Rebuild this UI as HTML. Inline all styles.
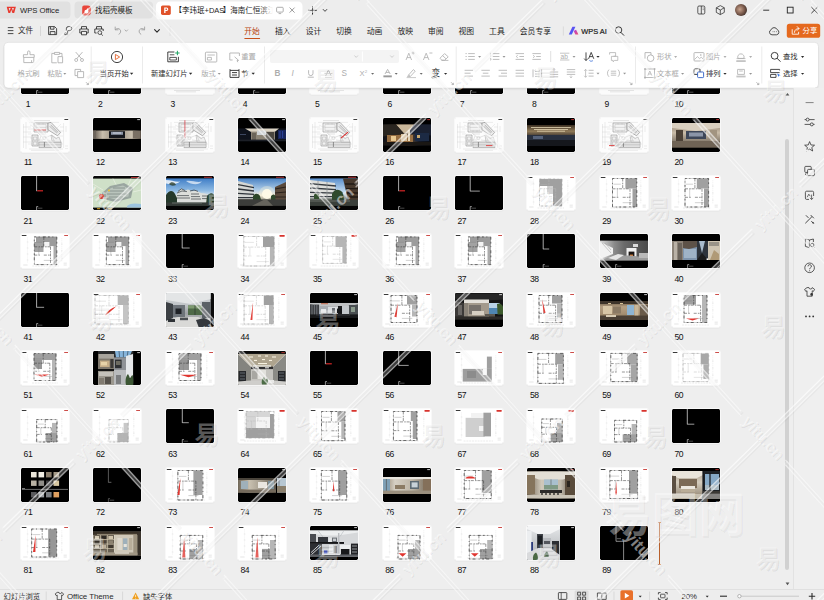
<!DOCTYPE html>
<html><head><meta charset="utf-8"><title>WPS Office</title>
<style>
html,body{margin:0;padding:0;}
body{width:824px;height:600px;overflow:hidden;position:relative;background:#eeeeee;font-family:"Liberation Sans",sans-serif;}
.abs{position:absolute;overflow:hidden;}
.abs svg{display:block;}
svg text{font-family:"Liberation Sans","Noto Sans CJK SC",sans-serif;}
.th{position:absolute;width:48px;height:34px;overflow:hidden;border-radius:1.4px;box-shadow:0 0 0 0.7px rgba(255,255,255,0.95),0 0.6px 1.6px rgba(0,0,0,0.10);}
.th svg{display:block;}
.lb{position:absolute;width:20px;text-align:center;font-size:8.6px;line-height:8px;letter-spacing:-0.5px;color:#111;white-space:nowrap;}
</style></head><body>
<div class="abs" style="left:0px;top:0px;width:824px;height:20px;background:#ededed"><svg width="824" height="20" viewBox="0 0 824 20"><rect x="-4" y="1.5" width="74.5" height="17" rx="4" fill="#e1e1e1"/><path d="M6.7 6.7 h9.2 l-1.7 6.2 h-1.8 l-1.1-3.2 l-1.1 3.2 h-1.8 z" fill="#e8392e"/><path d="M8.7 8.1 h1.9 l-0.95 2.9 z M12 8.1 h1.9 l-0.95 2.9 z" fill="#e3e3e3"/><text x="20.00" y="12.90" font-size="7.75" fill="#1e1e1e" font-weight="normal" text-anchor="start" letter-spacing="-0.08">WPS Office</text><rect x="74.5" y="1.5" width="78.5" height="17" rx="4" fill="#e1e1e1"/><path d="M84 5.6 h3.6 a3.4 3.4 0 0 1 3.4 3.4 v3 a3.4 3.4 0 0 1-3.4 3.4 h-3.6 a1.8 1.8 0 0 1-1.8-1.8 v-6.2 a1.8 1.8 0 0 1 1.8-1.8z" fill="#e8453a"/><path d="M84.4 11.8 a2 2 0 0 1 2-2 l1.9-2.4 l-0.1 3.2 a2 2.1 0 1 1-3.8 1.2z" fill="#fff"/><text x="95" y="13.03" font-size="7.5" fill="#1e1e1e">找稻壳模板</text><rect x="156" y="1.5" width="146.5" height="18" rx="4.5" fill="#ffffff"/><rect x="161" y="5.5" width="9.8" height="9.4" rx="1.6" fill="#e0522a"/><path d="M164.2 7.5 h2.4 a1.7 1.7 0 0 1 0 3.4 h-1.1 v2.2 h-1.3 z M165.5 8.6 v1.3 h1 a0.65 0.65 0 0 0 0-1.3 z" fill="#fff" fill-rule="evenodd"/><defs><linearGradient id="fade" x1="0" x2="1"><stop offset="0.86" stop-color="#fff" stop-opacity="0"/><stop offset="1" stop-color="#fff"/></linearGradient></defs><text y="13.03" font-size="7.5" fill="#1e1e1e"><tspan x="174.5">【李玮珉</tspan><tspan x="204.5">+DAS</tspan><tspan x="222.85">】海南仁恒滨江</tspan></text><rect x="176" y="4" width="97" height="13" fill="url(#fade)"/><rect x="273" y="4" width="20" height="13" fill="#fff"/><rect x="276.6" y="7.3" width="6.6" height="4.8" rx="0.8" fill="none" stroke="#9a9a9a" stroke-width="0.8"/><path d="M278.6 13.6 h2.6" stroke="#9a9a9a" stroke-width="0.8"/><path d="M289.6 7.6 l5 5 M294.6 7.6 l-5 5" stroke="#8a8a8a" stroke-width="0.85"/><path d="M308.3 10.3 h8.4 M312.5 6.1 v8.4" stroke="#1e1e1e" stroke-width="1"/><path d="M323.20 9.45 l1.80 1.90 l1.80 -1.90" fill="none" stroke="#333" stroke-width="0.9" stroke-linecap="round" stroke-linejoin="round"/><rect x="697.8" y="6" width="7" height="8" rx="1.2" fill="none" stroke="#333" stroke-width="0.8"/><path d="M701.3 6 v8" stroke="#333" stroke-width="0.8"/><path d="M702.6 8 h1.2 M702.6 9.6 h1.2" stroke="#333" stroke-width="0.5"/><path d="M720.3 5.6 l4 2.2 v4.6 l-4 2.2 l-4-2.2 v-4.6 z M716.3 7.8 l4 2.2 l4-2.2 M720.3 10 v4.6" fill="none" stroke="#333" stroke-width="0.8" stroke-linejoin="round"/><defs><radialGradient id="av" cx="0.4" cy="0.45" r="0.7"><stop offset="0" stop-color="#c9a48e"/><stop offset="0.55" stop-color="#7a5a4c"/><stop offset="1" stop-color="#2e2420"/></radialGradient></defs><circle cx="741" cy="10" r="6" fill="url(#av)"/><path d="M763.2 10.2 h6" stroke="#222" stroke-width="0.9"/><rect x="787.3" y="7.2" width="5.8" height="5.8" fill="none" stroke="#222" stroke-width="0.9"/><path d="M811.4 7 l6.2 6.2 M817.6 7 l-6.2 6.2" stroke="#222" stroke-width="0.9"/></svg></div>
<div class="abs" style="left:0px;top:20px;width:824px;height:22px;background:#ededed"><svg width="824" height="22" viewBox="0 20 824 22"><path d="M7.8 27.6 h5.6 M7.8 30.6 h5.6 M7.8 33.6 h5.6" stroke="#2b2b2b" stroke-width="0.85"/><text x="18" y="33.06" font-size="7.6" fill="#2b2b2b">文件</text><path d="M40.5 26 v10" stroke="#d0d0d0" stroke-width="0.8"/><path d="M48.6 26.6 h6 l2 2 v6 h-8 z M50.4 26.8 v2.4 h3.6 v-2.4 M50.2 34.6 v-3 h4.8 v3" fill="none" stroke="#2b2b2b" stroke-width="0.85" stroke-linejoin="round"/><path d="M65 34.6 h2.6 v-4 h2.2 a2 2 0 0 0 0-4 h-1.4 a2 2 0 0 0-2 2 v2" fill="none" stroke="#2b2b2b" stroke-width="0.85" stroke-linecap="round"/><circle cx="65.4" cy="33.6" r="1" fill="none" stroke="#2b2b2b" stroke-width="0.7"/><path d="M81.5 29 v-2.4 h5 v2.4 M81.4 33 h-1.6 v-4 h8.4 v4 h-1.6 M81.5 31.4 h5 v3.4 h-5 z" fill="none" stroke="#2b2b2b" stroke-width="0.85" stroke-linejoin="round"/><path d="M96.5 29 v-2.4 h5 v2.4 M96.6 33 h-1.8 v-4 h8.4 v2" fill="none" stroke="#2b2b2b" stroke-width="0.85" stroke-linejoin="round"/><circle cx="99.8" cy="32.6" r="1.9" fill="none" stroke="#2b2b2b" stroke-width="0.8"/><path d="M101.2 34 l1.6 1.6" stroke="#2b2b2b" stroke-width="0.85"/><path d="M115.2 27 v2.8 h2.8 M115.4 29.6 a3 3 0 1 1 3.6 4.6" fill="none" stroke="#9c9c9c" stroke-width="0.85" stroke-linecap="round"/><path d="M125.00 29.90 l1.30 1.40 l1.30 -1.40" fill="none" stroke="#9c9c9c" stroke-width="0.8" stroke-linecap="round" stroke-linejoin="round"/><path d="M144.6 27 v2.8 h-2.8 M144.4 29.6 a3 3 0 1 0-3.6 4.6" fill="none" stroke="#9c9c9c" stroke-width="0.85" stroke-linecap="round"/><path d="M154.60 29.55 l2.40 2.50 l2.40 -2.50" fill="none" stroke="#2b2b2b" stroke-width="1.1" stroke-linecap="round" stroke-linejoin="round"/><path d="M170 26 v10" stroke="#dcdcdc" stroke-width="0.8"/><text x="244.3" y="34.13" font-size="7.8" fill="#b8450e">开始</text><rect x="244.3" y="37.9" width="15.8" height="1.1" rx="0.5" fill="#c8501a"/><text x="275" y="34.13" font-size="7.8" fill="#1e1e1e">插入</text><text x="305.7" y="34.13" font-size="7.8" fill="#1e1e1e">设计</text><text x="336.3" y="34.13" font-size="7.8" fill="#1e1e1e">切换</text><text x="366.8" y="34.13" font-size="7.8" fill="#1e1e1e">动画</text><text x="397.4" y="34.13" font-size="7.8" fill="#1e1e1e">放映</text><text x="428" y="34.13" font-size="7.8" fill="#1e1e1e">审阅</text><text x="458.5" y="34.13" font-size="7.8" fill="#1e1e1e">视图</text><text x="489.1" y="34.13" font-size="7.8" fill="#1e1e1e">工具</text><text x="519.8" y="34.13" font-size="7.8" fill="#1e1e1e">会员专享</text><path d="M563.4 26.5 v9" stroke="#d6d6d6" stroke-width="0.8"/><defs><linearGradient id="ai" x1="0" x2="1" y1="0" y2="1"><stop offset="0" stop-color="#7a3cf0"/><stop offset="1" stop-color="#2d6df6"/></linearGradient></defs><defs><linearGradient id="ai2" x1="0" x2="1" y1="0" y2="1"><stop offset="0" stop-color="#b040e0"/><stop offset="1" stop-color="#f0506a"/></linearGradient></defs><path d="M568.8 34.4 l3.6-7.6 h3 l-3.6 7.6 z" fill="url(#ai)"/><path d="M574.6 30.2 l1.5-0.4 l2.3 4.6 h-3 l-1.5-2.9z" fill="url(#ai2)"/><text x="581.2" y="33.8" font-size="7.4" fill="#1e1e1e" stroke="#1e1e1e" stroke-width="0.22" letter-spacing="0.05">WPS AI</text><circle cx="618.6" cy="30" r="3.2" fill="none" stroke="#2b2b2b" stroke-width="0.9"/><path d="M621 32.5 l2.8 2.8" stroke="#2b2b2b" stroke-width="0.95" stroke-linecap="round"/><path d="M772 34.8 a2.6 2.6 0 0 1-0.9-5 a3.2 3.2 0 0 1 6-0.2 a2.7 2.7 0 0 1-0.5 5.2 z" fill="none" stroke="#333" stroke-width="0.85"/><circle cx="773" cy="31.8" r="0.45" fill="#333"/><circle cx="774.7" cy="31.8" r="0.45" fill="#333"/><circle cx="776.4" cy="31.8" r="0.45" fill="#333"/><rect x="786.8" y="23.8" width="33.4" height="14" rx="2.6" fill="#e5691e"/><path d="M792.2 29.6 v4.6 h6.4 v-2 M794.4 32.4 c0.3-2.6 1.8-3.8 4.4-3.9 M797.2 26.6 l1.8 1.9 l-1.8 1.9" fill="none" stroke="#fff" stroke-width="0.85" stroke-linecap="round" stroke-linejoin="round"/><text x="802.6" y="33.39" font-size="7.4" fill="#ffffff">分享</text></svg></div>
<div class="abs" style="left:0;top:42px;width:824px;height:547px;background:#eeeeee"></div><div class="th" style="left:21.00px;top:59.61px"><svg width="48" height="34" viewBox="0 0 48 34"><rect width="48" height="34" rx="1.2" fill="#000"/><path d="M15.6 30.6 v3.4 M15.6 30.6 h1.6" stroke="#eee" stroke-width="0.6" fill="none"/><path d="M16.8 32.2 h4.6" stroke="#9a9a9a" stroke-width="0.5"/></svg></div><div class="lb" style="left:17.90px;top:100.01px">1</div><div class="th" style="left:93.33px;top:59.61px"><svg width="48" height="34" viewBox="0 0 48 34"><rect width="48" height="34" rx="1.2" fill="#000"/><path d="M15.6 30.6 v3.4 M15.6 30.6 h1.6" stroke="#eee" stroke-width="0.6" fill="none"/><path d="M16.8 32.2 h4.6" stroke="#9a9a9a" stroke-width="0.5"/></svg></div><div class="lb" style="left:90.23px;top:100.01px">2</div><div class="th" style="left:165.66px;top:59.61px"><svg width="48" height="34" viewBox="0 0 48 34"><rect width="48" height="34" rx="1.2" fill="#fbfbfb"/><path d="M8 30.5 h26 M10 31.8 h20" stroke="#cfcfcf" stroke-width="0.5"/></svg></div><div class="lb" style="left:162.56px;top:100.01px">3</div><div class="th" style="left:237.99px;top:59.61px"><svg width="48" height="34" viewBox="0 0 48 34"><rect width="48" height="34" rx="1.2" fill="#000"/><path d="M15.6 30.6 v3.4 M15.6 30.6 h1.6" stroke="#eee" stroke-width="0.6" fill="none"/><path d="M16.8 32.2 h4.6" stroke="#9a9a9a" stroke-width="0.5"/></svg></div><div class="lb" style="left:234.89px;top:100.01px">4</div><div class="th" style="left:310.32px;top:59.61px"><svg width="48" height="34" viewBox="0 0 48 34"><rect width="48" height="34" rx="1.2" fill="#fbfbfb"/><path d="M8 30.5 h26 M10 31.8 h20" stroke="#cfcfcf" stroke-width="0.5"/></svg></div><div class="lb" style="left:307.22px;top:100.01px">5</div><div class="th" style="left:382.65px;top:59.61px"><svg width="48" height="34" viewBox="0 0 48 34"><rect width="48" height="34" rx="1.2" fill="#000"/><path d="M15.6 30.6 v3.4 M15.6 30.6 h1.6" stroke="#eee" stroke-width="0.6" fill="none"/><path d="M16.8 32.2 h4.6" stroke="#9a9a9a" stroke-width="0.5"/></svg></div><div class="lb" style="left:379.55px;top:100.01px">6</div><div class="th" style="left:454.98px;top:59.61px"><svg width="48" height="34" viewBox="0 0 48 34"><rect width="48" height="34" rx="1.2" fill="#000"/><path d="M15.6 30.6 v3.4 M15.6 30.6 h1.6" stroke="#eee" stroke-width="0.6" fill="none"/><path d="M16.8 32.2 h4.6" stroke="#9a9a9a" stroke-width="0.5"/></svg></div><div class="lb" style="left:451.88px;top:100.01px">7</div><div class="th" style="left:527.31px;top:59.61px"><svg width="48" height="34" viewBox="0 0 48 34"><rect width="48" height="34" rx="1.2" fill="#000"/><path d="M15.6 30.6 v3.4 M15.6 30.6 h1.6" stroke="#eee" stroke-width="0.6" fill="none"/><path d="M16.8 32.2 h4.6" stroke="#9a9a9a" stroke-width="0.5"/></svg></div><div class="lb" style="left:524.21px;top:100.01px">8</div><div class="th" style="left:599.64px;top:59.61px"><svg width="48" height="34" viewBox="0 0 48 34"><rect width="48" height="34" rx="1.2" fill="#fbfbfb"/><path d="M8 30.5 h26 M10 31.8 h20" stroke="#cfcfcf" stroke-width="0.5"/></svg></div><div class="lb" style="left:596.54px;top:100.01px">9</div><div class="th" style="left:671.97px;top:59.61px"><svg width="48" height="34" viewBox="0 0 48 34"><rect width="48" height="34" rx="1.2" fill="#000"/><path d="M15.6 30.6 v3.4 M15.6 30.6 h1.6" stroke="#eee" stroke-width="0.6" fill="none"/><path d="M16.8 32.2 h4.6" stroke="#9a9a9a" stroke-width="0.5"/></svg></div><div class="lb" style="left:668.87px;top:100.01px">10</div><div class="th" style="left:21.00px;top:117.88px"><svg width="48" height="34" viewBox="0 0 48 34"><rect width="48" height="34" rx="1.2" fill="#fdfdfd"/><path d="M13 2.6 h16" stroke="#cfcfcf" stroke-width="0.6"/><rect x="43.4" y="1.1" width="3.8" height="0.9" fill="#2a2a2a"/><path d="M2.5 6 v24 M5 4 v27 M2 9 h8 M2 14 h8 M2 19 h8 M2 24 h8 M8 31 h34 M10 32.4 h28 M42.6 5 v25 M45 8 v6 M44 28 h3 M44 30.6 h3 M39 9 h4 M39 13 h4 M8 4.4 h30" stroke="#d2d2d2" stroke-width="0.4" fill="none"/><path d="M9 7 l4 2 M40 6 l-4 4 M9 20 h3 M36 22 l5 3 M7 11 h5 M7 16 h4 M7 26 h4 M38 18 h4 M38 26 h4" stroke="#d6d6d6" stroke-width="0.4"/><path d="M13 5 h14 v9 h-14 z" fill="#f4f4f4" stroke="#8e8e8e" stroke-width="0.55"/><path d="M15 6.4 h10 v6 h-10z M13 9 h2 M25 9 h2 M18 5 v1.4 M22 5 v1.4 M18 12.4 v1.6 M22 12.4 v1.6 M15 9.4 h10" fill="none" stroke="#b0b0b0" stroke-width="0.4"/><path d="M27 5 l3-0.6 l9.6 10 l-3 3.4 l-9.6-6 z" fill="#eeeeee" stroke="#828282" stroke-width="0.6"/><path d="M29.4 6.6 l7.6 8 M28.4 8.4 l7.4 6.8 M31 7 l-1.6 2 M33 9 l-1.6 2 M35 11 l-1.6 2 M37 13 l-1.6 2 M32 8 l-1.6 2 M34 10 l-1.6 2 M36 12 l-1.6 2" stroke="#9c9c9c" stroke-width="0.4"/><path d="M11 17 h6 v11 h-6 z" fill="#f2f2f2" stroke="#8e8e8e" stroke-width="0.55"/><path d="M12.4 19 h3.4 v3 h-3.4z M12.4 24 h3.4 v3 h-3.4z M11 23 h6" fill="none" stroke="#a8a8a8" stroke-width="0.45"/><path d="M18 24 h22 v5.6 h-22 z" fill="#f0f0f0" stroke="#888" stroke-width="0.55"/><path d="M20 24 v5.6 M22 24 v5.6 M24 24 v5.6 M26 24 v5.6 M28 24 v5.6 M30 24 v5.6 M32 24 v5.6 M34 24 v5.6 M36 24 v5.6 M38 24 v5.6 M18 26.8 h22" fill="none" stroke="#a4a4a4" stroke-width="0.4"/><path d="M30 17 l5 3.4 l3-1.4 l2 5 h-9z" fill="#f0f0f0" stroke="#9a9a9a" stroke-width="0.45"/><circle cx="23.4" cy="20" r="1.6" fill="#fff" stroke="#b4b4b4" stroke-width="0.4"/><path d="M17 15 l6 5 l8-3 l5 4 M17 22 h5 M26 22 l8 1 M31 17 l2 6 M18 16 h7 M20 18 l-2 5" fill="none" stroke="#bcbcbc" stroke-width="0.4"/><path d="M23.4 24 v5" stroke="#6a6a6a" stroke-width="0.7"/><path d="M13.4 12 h11.6" stroke="#e04a4a" stroke-width="0.8"/></svg></div><div class="lb" style="left:17.90px;top:158.28px">11</div><div class="th" style="left:93.33px;top:117.88px"><svg width="48" height="34" viewBox="0 0 48 34"><rect width="48" height="34" rx="1.2" fill="#000"/><defs><linearGradient id="g1" x1="0" y1="0" x2="1" y2="0"><stop offset="0" stop-color="#5b5147"/><stop offset="0.2" stop-color="#c9bfae"/><stop offset="0.5" stop-color="#8d8475"/><stop offset="0.8" stop-color="#c9bfae"/><stop offset="1" stop-color="#5b5147"/></linearGradient></defs><rect x="0" y="12.5" width="48" height="8.4" fill="url(#g1)"/><rect x="16" y="13.2" width="16" height="7" fill="#16181d"/><rect x="18" y="13.8" width="12" height="3" fill="#8d96a6"/><rect x="20" y="14.4" width="8" height="1.2" fill="#c4cad4"/><rect x="0" y="12.5" width="3" height="8.4" fill="#6d655c"/><rect x="40" y="13" width="7" height="7.4" fill="#7a7064"/><rect x="44.2" y="1.2" width="2.8" height="0.9" fill="#ddd"/></svg></div><div class="lb" style="left:90.23px;top:158.28px">12</div><div class="th" style="left:165.66px;top:117.88px"><svg width="48" height="34" viewBox="0 0 48 34"><rect width="48" height="34" rx="1.2" fill="#fdfdfd"/><path d="M13 2.6 h16" stroke="#cfcfcf" stroke-width="0.6"/><rect x="43.4" y="1.1" width="3.8" height="0.9" fill="#2a2a2a"/><path d="M2.5 6 v24 M5 4 v27 M2 9 h8 M2 14 h8 M2 19 h8 M2 24 h8 M8 31 h34 M10 32.4 h28 M42.6 5 v25 M45 8 v6 M44 28 h3 M44 30.6 h3 M39 9 h4 M39 13 h4 M8 4.4 h30" stroke="#d2d2d2" stroke-width="0.4" fill="none"/><path d="M9 7 l4 2 M40 6 l-4 4 M9 20 h3 M36 22 l5 3 M7 11 h5 M7 16 h4 M7 26 h4 M38 18 h4 M38 26 h4" stroke="#d6d6d6" stroke-width="0.4"/><path d="M13 5 h14 v9 h-14 z" fill="#f4f4f4" stroke="#8e8e8e" stroke-width="0.55"/><path d="M15 6.4 h10 v6 h-10z M13 9 h2 M25 9 h2 M18 5 v1.4 M22 5 v1.4 M18 12.4 v1.6 M22 12.4 v1.6 M15 9.4 h10" fill="none" stroke="#b0b0b0" stroke-width="0.4"/><path d="M27 5 l3-0.6 l9.6 10 l-3 3.4 l-9.6-6 z" fill="#eeeeee" stroke="#828282" stroke-width="0.6"/><path d="M29.4 6.6 l7.6 8 M28.4 8.4 l7.4 6.8 M31 7 l-1.6 2 M33 9 l-1.6 2 M35 11 l-1.6 2 M37 13 l-1.6 2 M32 8 l-1.6 2 M34 10 l-1.6 2 M36 12 l-1.6 2" stroke="#9c9c9c" stroke-width="0.4"/><path d="M11 17 h6 v11 h-6 z" fill="#f2f2f2" stroke="#8e8e8e" stroke-width="0.55"/><path d="M12.4 19 h3.4 v3 h-3.4z M12.4 24 h3.4 v3 h-3.4z M11 23 h6" fill="none" stroke="#a8a8a8" stroke-width="0.45"/><path d="M18 24 h22 v5.6 h-22 z" fill="#f0f0f0" stroke="#888" stroke-width="0.55"/><path d="M20 24 v5.6 M22 24 v5.6 M24 24 v5.6 M26 24 v5.6 M28 24 v5.6 M30 24 v5.6 M32 24 v5.6 M34 24 v5.6 M36 24 v5.6 M38 24 v5.6 M18 26.8 h22" fill="none" stroke="#a4a4a4" stroke-width="0.4"/><path d="M30 17 l5 3.4 l3-1.4 l2 5 h-9z" fill="#f0f0f0" stroke="#9a9a9a" stroke-width="0.45"/><circle cx="23.4" cy="20" r="1.6" fill="#fff" stroke="#b4b4b4" stroke-width="0.4"/><path d="M17 15 l6 5 l8-3 l5 4 M17 22 h5 M26 22 l8 1 M31 17 l2 6 M18 16 h7 M20 18 l-2 5" fill="none" stroke="#bcbcbc" stroke-width="0.4"/><path d="M23.4 24 v5" stroke="#6a6a6a" stroke-width="0.7"/><path d="M18.9 2.2 v17.6" stroke="#d8404a" stroke-width="0.8"/></svg></div><div class="lb" style="left:162.56px;top:158.28px">13</div><div class="th" style="left:237.99px;top:117.88px"><svg width="48" height="34" viewBox="0 0 48 34"><rect width="48" height="34" rx="1.2" fill="#000"/><rect x="0" y="10.4" width="48" height="12.8" fill="#0e121c"/><path d="M7 10.4 h34 l-5 4 h-22z" fill="#dcd4c4"/><rect x="13" y="13.6" width="24" height="8.6" fill="#8e8678"/><rect x="19" y="12.6" width="9" height="4.4" fill="#cfd3d6"/><rect x="28" y="14" width="8" height="8" fill="#4a463f"/><rect x="14" y="15" width="4" height="7" fill="#6c655a"/><rect x="0" y="21.6" width="48" height="1.6" fill="#1c1f26"/><rect x="40" y="12" width="8" height="9" fill="#17245a"/><path d="M42 13 v7 M44.6 13 v7" stroke="#3a58c8" stroke-width="0.6"/><rect x="2" y="16" width="6" height="1" fill="#3c4660"/><rect x="44.2" y="1.2" width="2.8" height="0.9" fill="#ddd"/></svg></div><div class="lb" style="left:234.89px;top:158.28px">14</div><div class="th" style="left:310.32px;top:117.88px"><svg width="48" height="34" viewBox="0 0 48 34"><rect width="48" height="34" rx="1.2" fill="#fdfdfd"/><path d="M13 2.6 h16" stroke="#cfcfcf" stroke-width="0.6"/><rect x="43.4" y="1.1" width="3.8" height="0.9" fill="#2a2a2a"/><path d="M2.5 6 v24 M5 4 v27 M2 9 h8 M2 14 h8 M2 19 h8 M2 24 h8 M8 31 h34 M10 32.4 h28 M42.6 5 v25 M45 8 v6 M44 28 h3 M44 30.6 h3 M39 9 h4 M39 13 h4 M8 4.4 h30" stroke="#d2d2d2" stroke-width="0.4" fill="none"/><path d="M9 7 l4 2 M40 6 l-4 4 M9 20 h3 M36 22 l5 3 M7 11 h5 M7 16 h4 M7 26 h4 M38 18 h4 M38 26 h4" stroke="#d6d6d6" stroke-width="0.4"/><path d="M13 5 h14 v9 h-14 z" fill="#f4f4f4" stroke="#8e8e8e" stroke-width="0.55"/><path d="M15 6.4 h10 v6 h-10z M13 9 h2 M25 9 h2 M18 5 v1.4 M22 5 v1.4 M18 12.4 v1.6 M22 12.4 v1.6 M15 9.4 h10" fill="none" stroke="#b0b0b0" stroke-width="0.4"/><path d="M27 5 l3-0.6 l9.6 10 l-3 3.4 l-9.6-6 z" fill="#eeeeee" stroke="#828282" stroke-width="0.6"/><path d="M29.4 6.6 l7.6 8 M28.4 8.4 l7.4 6.8 M31 7 l-1.6 2 M33 9 l-1.6 2 M35 11 l-1.6 2 M37 13 l-1.6 2 M32 8 l-1.6 2 M34 10 l-1.6 2 M36 12 l-1.6 2" stroke="#9c9c9c" stroke-width="0.4"/><path d="M11 17 h6 v11 h-6 z" fill="#f2f2f2" stroke="#8e8e8e" stroke-width="0.55"/><path d="M12.4 19 h3.4 v3 h-3.4z M12.4 24 h3.4 v3 h-3.4z M11 23 h6" fill="none" stroke="#a8a8a8" stroke-width="0.45"/><path d="M18 24 h22 v5.6 h-22 z" fill="#f0f0f0" stroke="#888" stroke-width="0.55"/><path d="M20 24 v5.6 M22 24 v5.6 M24 24 v5.6 M26 24 v5.6 M28 24 v5.6 M30 24 v5.6 M32 24 v5.6 M34 24 v5.6 M36 24 v5.6 M38 24 v5.6 M18 26.8 h22" fill="none" stroke="#a4a4a4" stroke-width="0.4"/><path d="M30 17 l5 3.4 l3-1.4 l2 5 h-9z" fill="#f0f0f0" stroke="#9a9a9a" stroke-width="0.45"/><circle cx="23.4" cy="20" r="1.6" fill="#fff" stroke="#b4b4b4" stroke-width="0.4"/><path d="M17 15 l6 5 l8-3 l5 4 M17 22 h5 M26 22 l8 1 M31 17 l2 6 M18 16 h7 M20 18 l-2 5" fill="none" stroke="#bcbcbc" stroke-width="0.4"/><path d="M23.4 24 v5" stroke="#6a6a6a" stroke-width="0.7"/><path d="M31 20.2 L38 14.2" stroke="#d93030" stroke-width="1.1"/></svg></div><div class="lb" style="left:307.22px;top:158.28px">15</div><div class="th" style="left:382.65px;top:117.88px"><svg width="48" height="34" viewBox="0 0 48 34"><rect width="48" height="34" rx="1.2" fill="#000"/><defs><linearGradient id="g2" x1="0" y1="0" x2="1" y2="0"><stop offset="0" stop-color="#0d1018"/><stop offset="0.3" stop-color="#3a2c20"/><stop offset="0.55" stop-color="#5a4634"/><stop offset="0.75" stop-color="#141a28"/><stop offset="1" stop-color="#0a0d14"/></linearGradient></defs><rect x="0" y="6.4" width="48" height="21" fill="url(#g2)"/><path d="M13 6.4 h18 l-6 9 h-4z" fill="#c9b79a"/><path d="M0 6.4 h13 l8 9 l-21 3z" fill="#2a2621"/><path d="M31 6.4 h17 v11 l-23-2z" fill="#1a2030"/><rect x="4" y="17" width="26" height="7" fill="#a87a48" opacity="0.85"/><rect x="8" y="18" width="5" height="5" fill="#e8c890"/><rect x="18" y="16" width="6" height="7" fill="#d9c4a0"/><rect x="25" y="12" width="2" height="11" fill="#e6d8bc"/><rect x="32" y="15" width="14" height="8" fill="#1c2a44"/><rect x="34" y="17" width="3" height="3" fill="#c8a870"/><rect x="0" y="24" width="48" height="3.4" fill="#1a1714"/><rect x="44.2" y="1.2" width="2.8" height="0.9" fill="#c33"/></svg></div><div class="lb" style="left:379.55px;top:158.28px">16</div><div class="th" style="left:454.98px;top:117.88px"><svg width="48" height="34" viewBox="0 0 48 34"><rect width="48" height="34" rx="1.2" fill="#fdfdfd"/><path d="M13 2.6 h16" stroke="#cfcfcf" stroke-width="0.6"/><rect x="43.4" y="1.1" width="3.8" height="0.9" fill="#2a2a2a"/><path d="M2.5 6 v24 M5 4 v27 M2 9 h8 M2 14 h8 M2 19 h8 M2 24 h8 M8 31 h34 M10 32.4 h28 M42.6 5 v25 M45 8 v6 M44 28 h3 M44 30.6 h3 M39 9 h4 M39 13 h4 M8 4.4 h30" stroke="#d2d2d2" stroke-width="0.4" fill="none"/><path d="M9 7 l4 2 M40 6 l-4 4 M9 20 h3 M36 22 l5 3 M7 11 h5 M7 16 h4 M7 26 h4 M38 18 h4 M38 26 h4" stroke="#d6d6d6" stroke-width="0.4"/><path d="M13 5 h14 v9 h-14 z" fill="#f4f4f4" stroke="#8e8e8e" stroke-width="0.55"/><path d="M15 6.4 h10 v6 h-10z M13 9 h2 M25 9 h2 M18 5 v1.4 M22 5 v1.4 M18 12.4 v1.6 M22 12.4 v1.6 M15 9.4 h10" fill="none" stroke="#b0b0b0" stroke-width="0.4"/><path d="M27 5 l3-0.6 l9.6 10 l-3 3.4 l-9.6-6 z" fill="#eeeeee" stroke="#828282" stroke-width="0.6"/><path d="M29.4 6.6 l7.6 8 M28.4 8.4 l7.4 6.8 M31 7 l-1.6 2 M33 9 l-1.6 2 M35 11 l-1.6 2 M37 13 l-1.6 2 M32 8 l-1.6 2 M34 10 l-1.6 2 M36 12 l-1.6 2" stroke="#9c9c9c" stroke-width="0.4"/><path d="M11 17 h6 v11 h-6 z" fill="#f2f2f2" stroke="#8e8e8e" stroke-width="0.55"/><path d="M12.4 19 h3.4 v3 h-3.4z M12.4 24 h3.4 v3 h-3.4z M11 23 h6" fill="none" stroke="#a8a8a8" stroke-width="0.45"/><path d="M18 24 h22 v5.6 h-22 z" fill="#f0f0f0" stroke="#888" stroke-width="0.55"/><path d="M20 24 v5.6 M22 24 v5.6 M24 24 v5.6 M26 24 v5.6 M28 24 v5.6 M30 24 v5.6 M32 24 v5.6 M34 24 v5.6 M36 24 v5.6 M38 24 v5.6 M18 26.8 h22" fill="none" stroke="#a4a4a4" stroke-width="0.4"/><path d="M30 17 l5 3.4 l3-1.4 l2 5 h-9z" fill="#f0f0f0" stroke="#9a9a9a" stroke-width="0.45"/><circle cx="23.4" cy="20" r="1.6" fill="#fff" stroke="#b4b4b4" stroke-width="0.4"/><path d="M17 15 l6 5 l8-3 l5 4 M17 22 h5 M26 22 l8 1 M31 17 l2 6 M18 16 h7 M20 18 l-2 5" fill="none" stroke="#bcbcbc" stroke-width="0.4"/><path d="M23.4 24 v5" stroke="#6a6a6a" stroke-width="0.7"/><path d="M31 27.6 h6.4" stroke="#e03a3a" stroke-width="0.9"/></svg></div><div class="lb" style="left:451.88px;top:158.28px">17</div><div class="th" style="left:527.31px;top:117.88px"><svg width="48" height="34" viewBox="0 0 48 34"><rect width="48" height="34" rx="1.2" fill="#000"/><defs><linearGradient id="g3" x1="0" y1="0" x2="0" y2="1"><stop offset="0" stop-color="#3b2f22"/><stop offset="0.3" stop-color="#8f7a58"/><stop offset="0.5" stop-color="#4a4036"/><stop offset="1" stop-color="#15181f"/></linearGradient></defs><rect x="0" y="7" width="48" height="21" fill="url(#g3)"/><path d="M4 9.5 h40 M7 11.5 h34 M10 13.2 h28" stroke="#f3e6c4" stroke-width="0.7"/><rect x="0" y="17" width="48" height="5" fill="#28303f"/><rect x="6" y="18" width="10" height="3" fill="#55627a"/><rect x="0" y="22" width="48" height="6" fill="#15171c"/><rect x="44.2" y="1.2" width="2.8" height="0.9" fill="#c33"/></svg></div><div class="lb" style="left:524.21px;top:158.28px">18</div><div class="th" style="left:599.64px;top:117.88px"><svg width="48" height="34" viewBox="0 0 48 34"><rect width="48" height="34" rx="1.2" fill="#fdfdfd"/><path d="M13 2.6 h16" stroke="#cfcfcf" stroke-width="0.6"/><rect x="43.4" y="1.1" width="3.8" height="0.9" fill="#2a2a2a"/><path d="M2.5 6 v24 M5 4 v27 M2 9 h8 M2 14 h8 M2 19 h8 M2 24 h8 M8 31 h34 M10 32.4 h28 M42.6 5 v25 M45 8 v6 M44 28 h3 M44 30.6 h3 M39 9 h4 M39 13 h4 M8 4.4 h30" stroke="#d2d2d2" stroke-width="0.4" fill="none"/><path d="M9 7 l4 2 M40 6 l-4 4 M9 20 h3 M36 22 l5 3 M7 11 h5 M7 16 h4 M7 26 h4 M38 18 h4 M38 26 h4" stroke="#d6d6d6" stroke-width="0.4"/><path d="M13 5 h14 v9 h-14 z" fill="#f4f4f4" stroke="#8e8e8e" stroke-width="0.55"/><path d="M15 6.4 h10 v6 h-10z M13 9 h2 M25 9 h2 M18 5 v1.4 M22 5 v1.4 M18 12.4 v1.6 M22 12.4 v1.6 M15 9.4 h10" fill="none" stroke="#b0b0b0" stroke-width="0.4"/><path d="M27 5 l3-0.6 l9.6 10 l-3 3.4 l-9.6-6 z" fill="#eeeeee" stroke="#828282" stroke-width="0.6"/><path d="M29.4 6.6 l7.6 8 M28.4 8.4 l7.4 6.8 M31 7 l-1.6 2 M33 9 l-1.6 2 M35 11 l-1.6 2 M37 13 l-1.6 2 M32 8 l-1.6 2 M34 10 l-1.6 2 M36 12 l-1.6 2" stroke="#9c9c9c" stroke-width="0.4"/><path d="M11 17 h6 v11 h-6 z" fill="#f2f2f2" stroke="#8e8e8e" stroke-width="0.55"/><path d="M12.4 19 h3.4 v3 h-3.4z M12.4 24 h3.4 v3 h-3.4z M11 23 h6" fill="none" stroke="#a8a8a8" stroke-width="0.45"/><path d="M18 24 h22 v5.6 h-22 z" fill="#f0f0f0" stroke="#888" stroke-width="0.55"/><path d="M20 24 v5.6 M22 24 v5.6 M24 24 v5.6 M26 24 v5.6 M28 24 v5.6 M30 24 v5.6 M32 24 v5.6 M34 24 v5.6 M36 24 v5.6 M38 24 v5.6 M18 26.8 h22" fill="none" stroke="#a4a4a4" stroke-width="0.4"/><path d="M30 17 l5 3.4 l3-1.4 l2 5 h-9z" fill="#f0f0f0" stroke="#9a9a9a" stroke-width="0.45"/><circle cx="23.4" cy="20" r="1.6" fill="#fff" stroke="#b4b4b4" stroke-width="0.4"/><path d="M17 15 l6 5 l8-3 l5 4 M17 22 h5 M26 22 l8 1 M31 17 l2 6 M18 16 h7 M20 18 l-2 5" fill="none" stroke="#bcbcbc" stroke-width="0.4"/><path d="M23.4 24 v5" stroke="#6a6a6a" stroke-width="0.7"/><path d="M9 27.6 h6" stroke="#e03a3a" stroke-width="0.9"/></svg></div><div class="lb" style="left:596.54px;top:158.28px">19</div><div class="th" style="left:671.97px;top:117.88px"><svg width="48" height="34" viewBox="0 0 48 34"><rect width="48" height="34" rx="1.2" fill="#000"/><defs><linearGradient id="g4" x1="0" y1="0" x2="0" y2="1"><stop offset="0" stop-color="#8b7c6a"/><stop offset="0.4" stop-color="#c9bca8"/><stop offset="1" stop-color="#5a5046"/></linearGradient></defs><rect x="0" y="5" width="48" height="24.5" fill="url(#g4)"/><path d="M0 5 h48 v5 l-24 3 l-24-3 z" fill="#d9cfbf"/><rect x="14" y="13" width="20" height="8" fill="#3d4658"/><rect x="17" y="14.5" width="14" height="4" fill="#8b95a8"/><rect x="0" y="23" width="48" height="6.5" fill="#6f6355"/><rect x="4" y="12" width="7" height="11" fill="#4b4035"/><rect x="38" y="12" width="7" height="11" fill="#a29480"/><rect x="44.2" y="1.2" width="2.8" height="0.9" fill="#c33"/></svg></div><div class="lb" style="left:668.87px;top:158.28px">20</div><div class="th" style="left:21.00px;top:176.15px"><svg width="48" height="34" viewBox="0 0 48 34"><rect width="48" height="34" rx="1.2" fill="#000000"/><path d="M15.6 0 V15.2" stroke="#f0f0f0" stroke-width="0.7"/><rect x="16.2" y="14.2" width="5.8" height="1.2" fill="#d42626"/><path d="M15.6 34 V30.6 h1.6" stroke="#f0f0f0" stroke-width="0.6" fill="none"/><path d="M16.8 32.2 h4.6" stroke="#8e8e8e" stroke-width="0.5"/></svg></div><div class="lb" style="left:17.90px;top:216.55px">21</div><div class="th" style="left:93.33px;top:176.15px"><svg width="48" height="34" viewBox="0 0 48 34"><rect width="48" height="34" rx="1.2" fill="#0a0a0a"/><rect x="0" y="2.6" width="48" height="29" fill="#cfe0c8"/><path d="M9 17 l8-7 l14-3 l9 5 l-2 10 l-16 4 l-11-3 z" fill="#9aa6a0"/><path d="M12 17 l6-5 l12-2.5 l7 4 l-1.6 7 l-13 3 l-9-2.4 z" fill="#b9c4bc"/><path d="M15 15 h16 M14 18 h20 M16 21 h14 M20 12 h12" stroke="#7f8a86" stroke-width="0.8"/><path d="M34 30 c3-3 8-3 14-2 v3.6 h-14 z" fill="#9cc4de"/><path d="M0 8 l10 6 M20 2.6 l3 6 M38 2.6 l-3 7 M48 14 l-8 2" stroke="#e9efe4" stroke-width="0.7"/><circle cx="8.4" cy="20.6" r="2.5" fill="#d83a34"/><circle cx="16" cy="14.6" r="1" fill="#f2c630"/><rect x="38" y="1" width="8" height="0.9" fill="#b33"/><rect x="4" y="32.2" width="3" height="1" fill="#d8a020"/><rect x="15" y="32.2" width="4" height="1" fill="#e0c020"/></svg></div><div class="lb" style="left:90.23px;top:216.55px">22</div><div class="th" style="left:165.66px;top:176.15px"><svg width="48" height="34" viewBox="0 0 48 34"><rect width="48" height="34" rx="1.2" fill="#050505"/><defs><linearGradient id="g5" x1="0" y1="0" x2="0" y2="1"><stop offset="0" stop-color="#3f7dc6"/><stop offset="0.45" stop-color="#8fbbe4"/><stop offset="0.62" stop-color="#d4e2ec"/><stop offset="0.8" stop-color="#5f6e66"/><stop offset="1" stop-color="#2c3630"/></linearGradient></defs><rect x="0" y="2.4" width="48" height="27.4" fill="url(#g5)"/><path d="M0 4 c5 0 9 2 14 1.6 c-3 3-9 3.4-14 2z" fill="#fff" opacity="0.8"/><path d="M20 5 c6-1 10 2 16 0.6 c-3 3.4-10 3.6-16-0.6z" fill="#fff" opacity="0.65"/><path d="M9 21 l3-5 l3-3.4 l4 2 l3-1 l4 1.6 l4-0.6 l5 2.4 l4 0.6 l4 1.4 v9 h-34 z" fill="#dcdedb"/><path d="M11 17 l5-2 l5 0.6 M11 19.6 h12 M11 22 h13 M25 18 h8 M25 20.6 h9 M25 23 h10 M36 20 h7 M36 22.6 h8" stroke="#4e5458" stroke-width="0.8" fill="none"/><path d="M12 15.4 l3.4-2.6 l3.8 1.8 M24 15 l4-1 l4 1.4" stroke="#2e3236" stroke-width="0.7" fill="none"/><path d="M0 19 c3-5 7-5 9-1 l2 4 v6 h-11 z" fill="#24382a"/><path d="M41 20 c3-4 6-3 7-1 v9 h-8z" fill="#2c4430"/><path d="M3 8 c2-3 6-2 7 1 c-3 1-5 1-7-1z" fill="#2d3f2c" opacity="0.8"/><rect x="0" y="26.4" width="48" height="3.4" fill="#343a36"/><path d="M6 27 h30" stroke="#7c8480" stroke-width="0.7"/><rect x="38" y="0.8" width="8" height="0.9" fill="#b33"/></svg></div><div class="lb" style="left:162.56px;top:216.55px">23</div><div class="th" style="left:237.99px;top:176.15px"><svg width="48" height="34" viewBox="0 0 48 34"><rect width="48" height="34" rx="1.2" fill="#050505"/><defs><linearGradient id="g6" x1="0" y1="0" x2="0" y2="1"><stop offset="0" stop-color="#4b83c4"/><stop offset="0.4" stop-color="#a9c9e6"/><stop offset="0.62" stop-color="#efe9da"/><stop offset="0.8" stop-color="#55564f"/><stop offset="1" stop-color="#2b2b28"/></linearGradient></defs><rect x="0" y="2.4" width="48" height="27.4" fill="url(#g6)"/><path d="M0 5 l15 4 v14 h-15 z" fill="#d4d6d3"/><path d="M0 8.6 l16 3 M0 13 l16 2 M0 17.4 l16 1 M0 21.6 h16" stroke="#30353b" stroke-width="1.3"/><path d="M48 6 l-11 5 v13 h11 z" fill="#5a4a3c"/><path d="M37 13 l11-2 M37 17 l11-1 M37 21 h11" stroke="#2a221c" stroke-width="1.2"/><circle cx="29" cy="18" r="5" fill="#fffdf0" opacity="0.95"/><circle cx="29" cy="18" r="8" fill="#fff6d8" opacity="0.35"/><path d="M15 20 c2-3 5-3 7 0 l1 4 h-8z" fill="#2c4628"/><path d="M33 20 c1.6-2 3.4-2 4.4 0 v4 h-4.4z" fill="#2f4a2c"/><path d="M0 23.6 h48 v6.2 h-48z" fill="#3c3d3a"/><path d="M14 29.8 l12-6 l3 0 l6 6z" fill="#66645c"/><rect x="38" y="0.8" width="8" height="0.9" fill="#b33"/></svg></div><div class="lb" style="left:234.89px;top:216.55px">24</div><div class="th" style="left:310.32px;top:176.15px"><svg width="48" height="34" viewBox="0 0 48 34"><rect width="48" height="34" rx="1.2" fill="#050505"/><defs><linearGradient id="g7" x1="0" y1="0" x2="0" y2="1"><stop offset="0" stop-color="#5a8fcc"/><stop offset="0.5" stop-color="#c4dcf0"/><stop offset="0.7" stop-color="#9aa29c"/><stop offset="1" stop-color="#2f3530"/></linearGradient></defs><rect x="0" y="2.4" width="48" height="27.4" fill="url(#g7)"/><path d="M0 4 l25 3 v15 h-25 z" fill="#dddedb"/><path d="M0 7.6 l26 2.4 M0 12 l26 1.6 M0 16.4 l26 0.8 M0 20.6 h26" stroke="#343a40" stroke-width="1.3"/><path d="M8 4.6 v17 M17 5.8 v16" stroke="#8a8f92" stroke-width="0.7"/><path d="M33 2.4 h15 v22 h-10 z" fill="#46382c"/><path d="M35 8 h13 M36 12.6 h12 M37 17 h11 M38 21 h10" stroke="#211a14" stroke-width="1.3"/><path d="M22 18 c2-5 7-6 11-1 l1 7 h-12z" fill="#2f4a2c"/><path d="M4 19 c1-2 4-2 5 0 v4 h-5z" fill="#35522f"/><rect x="0" y="23.6" width="48" height="6.2" fill="#3a3f3a"/><path d="M0 25 h40" stroke="#8a8f86" stroke-width="0.6"/><rect x="38" y="0.8" width="8" height="0.9" fill="#b33"/></svg></div><div class="lb" style="left:307.22px;top:216.55px">25</div><div class="th" style="left:382.65px;top:176.15px"><svg width="48" height="34" viewBox="0 0 48 34"><rect width="48" height="34" rx="1.2" fill="#000000"/><path d="M15.6 0 V15.2" stroke="#f0f0f0" stroke-width="0.7"/><rect x="16.2" y="14.2" width="5.8" height="1.2" fill="#d42626"/><path d="M15.6 34 V30.6 h1.6" stroke="#f0f0f0" stroke-width="0.6" fill="none"/><path d="M16.8 32.2 h4.6" stroke="#8e8e8e" stroke-width="0.5"/></svg></div><div class="lb" style="left:379.55px;top:216.55px">26</div><div class="th" style="left:454.98px;top:176.15px"><svg width="48" height="34" viewBox="0 0 48 34"><rect width="48" height="34" rx="1.2" fill="#000000"/><path d="M15.2 0 V15.3" stroke="#f0f0f0" stroke-width="0.7"/><path d="M15.2 15.1 h9.6" stroke="#dcdcdc" stroke-width="0.7"/><path d="M15.2 34 V30.6 h1.6" stroke="#f0f0f0" stroke-width="0.6" fill="none"/><path d="M16.4 32.2 h4.6" stroke="#8e8e8e" stroke-width="0.5"/></svg></div><div class="lb" style="left:451.88px;top:216.55px">27</div><div class="th" style="left:527.31px;top:176.15px"><svg width="48" height="34" viewBox="0 0 48 34"><rect width="48" height="34" rx="1.2" fill="#ffffff"/><rect x="0.8" y="1.0" width="4.6" height="1.0" fill="#3a3a3a"/><rect x="43.2" y="1.1" width="3.8" height="0.9" fill="#c83a36"/><path d="M6.6 3.6 v26 M40.8 4.4 v24" stroke="#cfcfcf" stroke-width="0.4" stroke-dasharray="0.8 1.2" fill="none"/><path d="M5.8 8 h1.6 M5.8 14 h1.6 M5.8 20 h1.6 M5.8 26 h1.6 M40 10 h1.6 M40 17 h1.6 M40 24 h1.6" stroke="#d0d0d0" stroke-width="0.4"/><path d="M10.5 32 h26.5" stroke="#d4d4d4" stroke-width="0.45" stroke-dasharray="2 0.8"/><path d="M42.6 29.2 h3.2 M42.6 31 h3.2 M2.2 31 h4.4" stroke="#c8c8c8" stroke-width="0.45"/><rect x="12.5" y="3.0" width="22.5" height="7.0" fill="#a0a0a0"/><rect x="26.0" y="10.0" width="9.0" height="20.0" fill="#a0a0a0"/><rect x="20.0" y="10.0" width="6.0" height="8.0" fill="#d2d2d2"/><rect x="12.5" y="3.0" width="22.5" height="27.0" fill="none" stroke="#8c8c8c" stroke-width="0.50" stroke-dasharray="1.8 2.6 0.9 3.2 3 2.2"/><rect x="12.5" y="3.0" width="22.5" height="27.0" fill="none" stroke="#b8b8b8" stroke-width="0.35"/><path d="M21.9 3.0 v9.7 M12.5 12.7 h16.2 M28.7 12.7 v17.3 M21.9 20.8 h6.8 M12.5 20.8 h5.6" fill="none" stroke="#b8b8b8" stroke-width="0.5" stroke-dasharray="3 1.2 1.6 0.8"/><path d="M13.5 8.4 h6.8 M17.0 12.7 v8.1 M21.9 25.9 h9.0" fill="none" stroke="#b8b8b8" stroke-width="0.35"/></svg></div><div class="lb" style="left:524.21px;top:216.55px">28</div><div class="th" style="left:599.64px;top:176.15px"><svg width="48" height="34" viewBox="0 0 48 34"><rect width="48" height="34" rx="1.2" fill="#ffffff"/><rect x="0.8" y="1.0" width="4.6" height="1.0" fill="#3a3a3a"/><rect x="43.2" y="1.1" width="3.8" height="0.9" fill="#c83a36"/><path d="M6.6 3.6 v26 M40.8 4.4 v24" stroke="#cfcfcf" stroke-width="0.4" stroke-dasharray="0.8 1.2" fill="none"/><path d="M5.8 8 h1.6 M5.8 14 h1.6 M5.8 20 h1.6 M5.8 26 h1.6 M40 10 h1.6 M40 17 h1.6 M40 24 h1.6" stroke="#d0d0d0" stroke-width="0.4"/><path d="M10.5 32 h28.3" stroke="#d4d4d4" stroke-width="0.45" stroke-dasharray="2 0.8"/><path d="M42.6 29.2 h3.2 M42.6 31 h3.2 M2.2 31 h4.4" stroke="#c8c8c8" stroke-width="0.45"/><rect x="25.4" y="2.5" width="11.4" height="10.0" fill="#a0a0a0"/><rect x="32.5" y="12.5" width="4.3" height="18.5" fill="#a0a0a0"/><rect x="12.5" y="2.5" width="24.3" height="28.5" fill="none" stroke="#2e2e2e" stroke-width="0.75" stroke-dasharray="1.8 2.6 0.9 3.2 3 2.2"/><rect x="12.5" y="2.5" width="24.3" height="28.5" fill="none" stroke="#7c7c7c" stroke-width="0.35"/><path d="M22.7 2.5 v10.3 M12.5 12.8 h17.5 M30.0 12.8 v18.2 M22.7 21.3 h7.3 M12.5 21.3 h6.1" fill="none" stroke="#2e2e2e" stroke-width="0.5" stroke-dasharray="3 1.2 1.6 0.8"/><path d="M13.5 8.2 h7.3 M17.4 12.8 v8.5 M22.7 26.7 h9.7" fill="none" stroke="#7c7c7c" stroke-width="0.35"/></svg></div><div class="lb" style="left:596.54px;top:216.55px">29</div><div class="th" style="left:671.97px;top:176.15px"><svg width="48" height="34" viewBox="0 0 48 34"><rect width="48" height="34" rx="1.2" fill="#ffffff"/><rect x="0.8" y="1.0" width="4.6" height="1.0" fill="#3a3a3a"/><rect x="43.2" y="1.1" width="3.8" height="0.9" fill="#c83a36"/><path d="M6.6 3.6 v26 M40.8 4.4 v24" stroke="#cfcfcf" stroke-width="0.4" stroke-dasharray="0.8 1.2" fill="none"/><path d="M5.8 8 h1.6 M5.8 14 h1.6 M5.8 20 h1.6 M5.8 26 h1.6 M40 10 h1.6 M40 17 h1.6 M40 24 h1.6" stroke="#d0d0d0" stroke-width="0.4"/><path d="M11.0 32 h27.6" stroke="#d4d4d4" stroke-width="0.45" stroke-dasharray="2 0.8"/><path d="M42.6 29.2 h3.2 M42.6 31 h3.2 M2.2 31 h4.4" stroke="#c8c8c8" stroke-width="0.45"/><rect x="24.8" y="2.5" width="11.8" height="10.0" fill="#a0a0a0"/><rect x="32.0" y="12.5" width="4.6" height="18.5" fill="#a0a0a0"/><rect x="13.0" y="2.5" width="23.6" height="28.5" fill="none" stroke="#2e2e2e" stroke-width="0.75" stroke-dasharray="1.8 2.6 0.9 3.2 3 2.2"/><rect x="13.0" y="2.5" width="23.6" height="28.5" fill="none" stroke="#7c7c7c" stroke-width="0.35"/><path d="M22.9 2.5 v10.3 M13.0 12.8 h17.0 M30.0 12.8 v18.2 M22.9 21.3 h7.1 M13.0 21.3 h5.9" fill="none" stroke="#2e2e2e" stroke-width="0.5" stroke-dasharray="3 1.2 1.6 0.8"/><path d="M14.0 8.2 h7.1 M17.7 12.8 v8.5 M22.9 26.7 h9.4" fill="none" stroke="#7c7c7c" stroke-width="0.35"/></svg></div><div class="lb" style="left:668.87px;top:216.55px">30</div><div class="th" style="left:21.00px;top:234.42px"><svg width="48" height="34" viewBox="0 0 48 34"><rect width="48" height="34" rx="1.2" fill="#ffffff"/><rect x="0.8" y="1.0" width="4.6" height="1.0" fill="#3a3a3a"/><rect x="43.2" y="1.1" width="3.8" height="0.9" fill="#c83a36"/><path d="M6.6 3.6 v26 M40.8 4.4 v24" stroke="#cfcfcf" stroke-width="0.4" stroke-dasharray="0.8 1.2" fill="none"/><path d="M5.8 8 h1.6 M5.8 14 h1.6 M5.8 20 h1.6 M5.8 26 h1.6 M40 10 h1.6 M40 17 h1.6 M40 24 h1.6" stroke="#d0d0d0" stroke-width="0.4"/><path d="M11.3 32 h26.5" stroke="#d4d4d4" stroke-width="0.45" stroke-dasharray="2 0.8"/><path d="M42.6 29.2 h3.2 M42.6 31 h3.2 M2.2 31 h4.4" stroke="#c8c8c8" stroke-width="0.45"/><rect x="15.0" y="2.9" width="20.8" height="9.2" fill="#9c9c9c"/><rect x="13.3" y="8.0" width="9.2" height="10.0" fill="#a2a2a2"/><rect x="23.0" y="8.0" width="5.4" height="4.0" fill="#f4f4f4"/><rect x="32.5" y="12.0" width="3.3" height="18.0" fill="#ababab"/><rect x="13.3" y="2.9" width="22.5" height="27.7" fill="none" stroke="#2e2e2e" stroke-width="0.75" stroke-dasharray="1.8 2.6 0.9 3.2 3 2.2"/><rect x="13.3" y="2.9" width="22.5" height="27.7" fill="none" stroke="#7c7c7c" stroke-width="0.35"/><path d="M22.8 2.9 v10.0 M13.3 12.8 h16.2 M29.5 12.8 v17.7 M22.8 21.1 h6.8 M13.3 21.1 h5.6" fill="none" stroke="#2e2e2e" stroke-width="0.5" stroke-dasharray="3 1.2 1.6 0.8"/><path d="M14.3 8.4 h6.8 M17.8 12.8 v8.3 M22.8 26.4 h9.0" fill="none" stroke="#7c7c7c" stroke-width="0.35"/></svg></div><div class="lb" style="left:17.90px;top:274.82px">31</div><div class="th" style="left:93.33px;top:234.42px"><svg width="48" height="34" viewBox="0 0 48 34"><rect width="48" height="34" rx="1.2" fill="#ffffff"/><rect x="0.8" y="1.0" width="4.6" height="1.0" fill="#3a3a3a"/><rect x="43.2" y="1.1" width="3.8" height="0.9" fill="#c83a36"/><path d="M6.6 3.6 v26 M40.8 4.4 v24" stroke="#cfcfcf" stroke-width="0.4" stroke-dasharray="0.8 1.2" fill="none"/><path d="M5.8 8 h1.6 M5.8 14 h1.6 M5.8 20 h1.6 M5.8 26 h1.6 M40 10 h1.6 M40 17 h1.6 M40 24 h1.6" stroke="#d0d0d0" stroke-width="0.4"/><path d="M11.3 32 h26.5" stroke="#d4d4d4" stroke-width="0.45" stroke-dasharray="2 0.8"/><path d="M42.6 29.2 h3.2 M42.6 31 h3.2 M2.2 31 h4.4" stroke="#c8c8c8" stroke-width="0.45"/><rect x="15.0" y="2.9" width="20.8" height="9.2" fill="#9c9c9c"/><rect x="13.3" y="8.0" width="9.2" height="10.0" fill="#a2a2a2"/><rect x="23.0" y="8.0" width="5.4" height="4.0" fill="#f4f4f4"/><rect x="32.5" y="12.0" width="3.3" height="18.0" fill="#ababab"/><rect x="13.3" y="2.9" width="22.5" height="27.7" fill="none" stroke="#2e2e2e" stroke-width="0.75" stroke-dasharray="1.8 2.6 0.9 3.2 3 2.2"/><rect x="13.3" y="2.9" width="22.5" height="27.7" fill="none" stroke="#7c7c7c" stroke-width="0.35"/><path d="M22.8 2.9 v10.0 M13.3 12.8 h16.2 M29.5 12.8 v17.7 M22.8 21.1 h6.8 M13.3 21.1 h5.6" fill="none" stroke="#2e2e2e" stroke-width="0.5" stroke-dasharray="3 1.2 1.6 0.8"/><path d="M14.3 8.4 h6.8 M17.8 12.8 v8.3 M22.8 26.4 h9.0" fill="none" stroke="#7c7c7c" stroke-width="0.35"/></svg></div><div class="lb" style="left:90.23px;top:274.82px">32</div><div class="th" style="left:165.66px;top:234.42px"><svg width="48" height="34" viewBox="0 0 48 34"><rect width="48" height="34" rx="1.2" fill="#000000"/><path d="M16.2 0 V14.2" stroke="#f0f0f0" stroke-width="0.7"/><path d="M16.2 14.0 h7.5" stroke="#dcdcdc" stroke-width="0.7"/><path d="M16.2 34 V30.6 h1.6" stroke="#f0f0f0" stroke-width="0.6" fill="none"/><path d="M17.4 32.2 h4.6" stroke="#8e8e8e" stroke-width="0.5"/></svg></div><div class="lb" style="left:162.56px;top:274.82px">33</div><div class="th" style="left:237.99px;top:234.42px"><svg width="48" height="34" viewBox="0 0 48 34"><rect width="48" height="34" rx="1.2" fill="#ffffff"/><rect x="0.8" y="1.0" width="4.6" height="1.0" fill="#3a3a3a"/><rect x="41.4" y="0.9" width="5.4" height="1.8" rx="0.7" fill="#d8332d"/><path d="M6.6 3.6 v26 M40.8 4.4 v24" stroke="#cfcfcf" stroke-width="0.4" stroke-dasharray="0.8 1.2" fill="none"/><path d="M5.8 8 h1.6 M5.8 14 h1.6 M5.8 20 h1.6 M5.8 26 h1.6 M40 10 h1.6 M40 17 h1.6 M40 24 h1.6" stroke="#d0d0d0" stroke-width="0.4"/><path d="M3.8 32 h34.4" stroke="#d4d4d4" stroke-width="0.45" stroke-dasharray="2 0.8"/><path d="M42.6 29.2 h3.2 M42.6 31 h3.2 M2.2 31 h4.4" stroke="#c8c8c8" stroke-width="0.45"/><rect x="25.0" y="2.5" width="11.2" height="10.5" fill="#a0a0a0"/><rect x="31.9" y="13.0" width="4.3" height="19.0" fill="#b6b6b6"/><rect x="5.8" y="2.5" width="30.4" height="29.5" fill="none" stroke="#8c8c8c" stroke-width="0.50" stroke-dasharray="1.8 2.6 0.9 3.2 3 2.2"/><rect x="5.8" y="2.5" width="30.4" height="29.5" fill="none" stroke="#b8b8b8" stroke-width="0.35"/><path d="M18.6 2.5 v10.6 M5.8 13.1 h21.9 M27.7 13.1 v18.9 M18.6 22.0 h9.1 M5.8 22.0 h7.6" fill="none" stroke="#b8b8b8" stroke-width="0.5" stroke-dasharray="3 1.2 1.6 0.8"/><path d="M6.8 8.4 h9.1 M11.9 13.1 v8.8 M18.6 27.6 h12.2" fill="none" stroke="#b8b8b8" stroke-width="0.35"/></svg></div><div class="lb" style="left:234.89px;top:274.82px">34</div><div class="th" style="left:310.32px;top:234.42px"><svg width="48" height="34" viewBox="0 0 48 34"><rect width="48" height="34" rx="1.2" fill="#ffffff"/><rect x="0.8" y="1.0" width="4.6" height="1.0" fill="#3a3a3a"/><rect x="41.4" y="0.9" width="5.4" height="1.8" rx="0.7" fill="#d8332d"/><path d="M6.6 3.6 v26 M40.8 4.4 v24" stroke="#cfcfcf" stroke-width="0.4" stroke-dasharray="0.8 1.2" fill="none"/><path d="M5.8 8 h1.6 M5.8 14 h1.6 M5.8 20 h1.6 M5.8 26 h1.6 M40 10 h1.6 M40 17 h1.6 M40 24 h1.6" stroke="#d0d0d0" stroke-width="0.4"/><path d="M10.7 32 h27.7" stroke="#d4d4d4" stroke-width="0.45" stroke-dasharray="2 0.8"/><path d="M42.6 29.2 h3.2 M42.6 31 h3.2 M2.2 31 h4.4" stroke="#c8c8c8" stroke-width="0.45"/><rect x="25.5" y="2.5" width="10.9" height="10.5" fill="#b6b6b6"/><rect x="32.4" y="13.0" width="4.0" height="16.0" fill="#b6b6b6"/><rect x="12.7" y="2.5" width="23.7" height="26.8" fill="none" stroke="#8c8c8c" stroke-width="0.50" stroke-dasharray="1.8 2.6 0.9 3.2 3 2.2"/><rect x="12.7" y="2.5" width="23.7" height="26.8" fill="none" stroke="#b8b8b8" stroke-width="0.35"/><path d="M22.7 2.5 v9.6 M12.7 12.1 h17.1 M29.8 12.1 v17.2 M22.7 20.2 h7.1 M12.7 20.2 h5.9" fill="none" stroke="#b8b8b8" stroke-width="0.5" stroke-dasharray="3 1.2 1.6 0.8"/><path d="M13.7 7.9 h7.1 M17.4 12.1 v8.0 M22.7 25.3 h9.5" fill="none" stroke="#b8b8b8" stroke-width="0.35"/></svg></div><div class="lb" style="left:307.22px;top:274.82px">35</div><div class="th" style="left:382.65px;top:234.42px"><svg width="48" height="34" viewBox="0 0 48 34"><rect width="48" height="34" rx="1.2" fill="#ffffff"/><rect x="0.8" y="1.0" width="4.6" height="1.0" fill="#3a3a3a"/><rect x="43.2" y="1.1" width="3.8" height="0.9" fill="#c83a36"/><path d="M6.6 3.6 v26 M40.8 4.4 v24" stroke="#cfcfcf" stroke-width="0.4" stroke-dasharray="0.8 1.2" fill="none"/><path d="M5.8 8 h1.6 M5.8 14 h1.6 M5.8 20 h1.6 M5.8 26 h1.6 M40 10 h1.6 M40 17 h1.6 M40 24 h1.6" stroke="#d0d0d0" stroke-width="0.4"/><path d="M11.3 32 h26.5" stroke="#d4d4d4" stroke-width="0.45" stroke-dasharray="2 0.8"/><path d="M42.6 29.2 h3.2 M42.6 31 h3.2 M2.2 31 h4.4" stroke="#c8c8c8" stroke-width="0.45"/><rect x="15.0" y="2.9" width="20.8" height="9.2" fill="#9c9c9c"/><rect x="13.3" y="8.0" width="9.2" height="10.0" fill="#a2a2a2"/><rect x="23.0" y="8.0" width="5.4" height="4.0" fill="#f4f4f4"/><rect x="32.5" y="12.0" width="3.3" height="18.0" fill="#ababab"/><rect x="13.3" y="2.9" width="22.5" height="27.7" fill="none" stroke="#2e2e2e" stroke-width="0.75" stroke-dasharray="1.8 2.6 0.9 3.2 3 2.2"/><rect x="13.3" y="2.9" width="22.5" height="27.7" fill="none" stroke="#7c7c7c" stroke-width="0.35"/><path d="M22.8 2.9 v10.0 M13.3 12.8 h16.2 M29.5 12.8 v17.7 M22.8 21.1 h6.8 M13.3 21.1 h5.6" fill="none" stroke="#2e2e2e" stroke-width="0.5" stroke-dasharray="3 1.2 1.6 0.8"/><path d="M14.3 8.4 h6.8 M17.8 12.8 v8.3 M22.8 26.4 h9.0" fill="none" stroke="#7c7c7c" stroke-width="0.35"/></svg></div><div class="lb" style="left:379.55px;top:274.82px">36</div><div class="th" style="left:454.98px;top:234.42px"><svg width="48" height="34" viewBox="0 0 48 34"><rect width="48" height="34" rx="1.2" fill="#ffffff"/><rect x="0.8" y="1.0" width="4.6" height="1.0" fill="#3a3a3a"/><rect x="43.2" y="1.1" width="3.8" height="0.9" fill="#c83a36"/><path d="M6.6 3.6 v26 M40.8 4.4 v24" stroke="#cfcfcf" stroke-width="0.4" stroke-dasharray="0.8 1.2" fill="none"/><path d="M5.8 8 h1.6 M5.8 14 h1.6 M5.8 20 h1.6 M5.8 26 h1.6 M40 10 h1.6 M40 17 h1.6 M40 24 h1.6" stroke="#d0d0d0" stroke-width="0.4"/><path d="M11.3 32 h26.5" stroke="#d4d4d4" stroke-width="0.45" stroke-dasharray="2 0.8"/><path d="M42.6 29.2 h3.2 M42.6 31 h3.2 M2.2 31 h4.4" stroke="#c8c8c8" stroke-width="0.45"/><rect x="15.0" y="2.9" width="20.8" height="9.2" fill="#9c9c9c"/><rect x="13.3" y="8.0" width="9.2" height="10.0" fill="#a2a2a2"/><rect x="23.0" y="8.0" width="5.4" height="4.0" fill="#f4f4f4"/><rect x="32.5" y="12.0" width="3.3" height="18.0" fill="#ababab"/><rect x="13.3" y="2.9" width="22.5" height="27.7" fill="none" stroke="#2e2e2e" stroke-width="0.75" stroke-dasharray="1.8 2.6 0.9 3.2 3 2.2"/><rect x="13.3" y="2.9" width="22.5" height="27.7" fill="none" stroke="#7c7c7c" stroke-width="0.35"/><path d="M22.8 2.9 v10.0 M13.3 12.8 h16.2 M29.5 12.8 v17.7 M22.8 21.1 h6.8 M13.3 21.1 h5.6" fill="none" stroke="#2e2e2e" stroke-width="0.5" stroke-dasharray="3 1.2 1.6 0.8"/><path d="M14.3 8.4 h6.8 M17.8 12.8 v8.3 M22.8 26.4 h9.0" fill="none" stroke="#7c7c7c" stroke-width="0.35"/></svg></div><div class="lb" style="left:451.88px;top:274.82px">37</div><div class="th" style="left:527.31px;top:234.42px"><svg width="48" height="34" viewBox="0 0 48 34"><rect width="48" height="34" rx="1.2" fill="#000000"/><path d="M16.2 0 V15.2" stroke="#f0f0f0" stroke-width="0.7"/><path d="M16.2 15.0 h6.0" stroke="#dcdcdc" stroke-width="0.7"/><path d="M16.2 34 V30.6 h1.6" stroke="#f0f0f0" stroke-width="0.6" fill="none"/><path d="M17.4 32.2 h4.6" stroke="#8e8e8e" stroke-width="0.5"/></svg></div><div class="lb" style="left:524.21px;top:274.82px">38</div><div class="th" style="left:599.64px;top:234.42px"><svg width="48" height="34" viewBox="0 0 48 34"><rect width="48" height="34" rx="1.2" fill="#000"/><defs><linearGradient id="g8" x1="0" y1="0" x2="1" y2="0"><stop offset="0" stop-color="#dcdcdc"/><stop offset="0.3" stop-color="#8a8a8a"/><stop offset="0.5" stop-color="#6a6a6a"/><stop offset="1" stop-color="#4a4a4a"/></linearGradient></defs><rect x="0" y="6.6" width="48" height="19.8" fill="url(#g8)"/><path d="M0 8 l13 6 v6 l-13 5z" fill="#f2f2f2"/><path d="M2 9 l9 10 M5 9 l6 7" stroke="#9a9a9a" stroke-width="0.5"/><rect x="26.5" y="14" width="10" height="9" fill="#f0f0f0"/><rect x="28.6" y="17.6" width="5.8" height="5" fill="#1a1412"/><rect x="30" y="20.6" width="3" height="1.4" fill="#d87a30"/><rect x="33" y="10" width="5" height="3" fill="#dadada"/><path d="M0 26.4 l14-5 h16 l18 2 v3z" fill="#9c9c9c"/><path d="M8 24 l10-4 l6 1 l-8 5z" fill="#e6e6e6"/><rect x="39" y="19" width="9" height="5" fill="#b9b9b9"/><path d="M15.6 34 V30.6 h1.6" stroke="#ddd" stroke-width="0.6" fill="none"/><path d="M16.8 32.2 h4.6" stroke="#9a9a9a" stroke-width="0.5"/></svg></div><div class="lb" style="left:596.54px;top:274.82px">39</div><div class="th" style="left:671.97px;top:234.42px"><svg width="48" height="34" viewBox="0 0 48 34"><rect width="48" height="34" rx="1.2" fill="#000"/><rect x="0" y="7" width="11" height="19" fill="#8c8378"/><rect x="2" y="8" width="3" height="18" fill="#b9b1a6"/><rect x="6" y="9" width="4" height="17" fill="#6b645c"/><rect x="11" y="7" width="14" height="19" fill="#7f95ad"/><path d="M11 7 h14 v6 l-8 2 l-6-1z" fill="#5d5248"/><rect x="12" y="15" width="12" height="9" fill="#9fb3c6"/><rect x="25" y="7" width="11" height="19" fill="#2e343c"/><path d="M27 7 l3 12 l3-12z" fill="#a9bccd"/><path d="M25 26 l5-7 l6 7z" fill="#1c1c1c"/><rect x="34.6" y="24.4" width="1.4" height="1.6" fill="#fff"/><rect x="36" y="7" width="12" height="19" fill="#cfc5b2"/><path d="M37 9 h10 M37 11 h10" stroke="#4a4a4a" stroke-width="0.8"/><path d="M38 26 l4-10 l5 4 v6z" fill="#b09a76"/><path d="M15.6 34 V30.6 h1.6" stroke="#ddd" stroke-width="0.6" fill="none"/><path d="M16.8 32.2 h4.6" stroke="#9a9a9a" stroke-width="0.5"/></svg></div><div class="lb" style="left:668.87px;top:274.82px">40</div><div class="th" style="left:21.00px;top:292.69px"><svg width="48" height="34" viewBox="0 0 48 34"><rect width="48" height="34" rx="1.2" fill="#000000"/><path d="M15.6 0 V14.5" stroke="#f0f0f0" stroke-width="0.7"/><path d="M15.6 14.3 h7.5" stroke="#dcdcdc" stroke-width="0.7"/><path d="M15.6 34 V30.6 h1.6" stroke="#f0f0f0" stroke-width="0.6" fill="none"/><path d="M16.8 32.2 h4.6" stroke="#8e8e8e" stroke-width="0.5"/></svg></div><div class="lb" style="left:17.90px;top:333.09px">41</div><div class="th" style="left:93.33px;top:292.69px"><svg width="48" height="34" viewBox="0 0 48 34"><rect width="48" height="34" rx="1.2" fill="#ffffff"/><rect x="0.8" y="1.0" width="4.6" height="1.0" fill="#3a3a3a"/><rect x="43.2" y="1.1" width="3.8" height="0.9" fill="#c83a36"/><path d="M6.6 3.6 v26 M40.8 4.4 v24" stroke="#cfcfcf" stroke-width="0.4" stroke-dasharray="0.8 1.2" fill="none"/><path d="M5.8 8 h1.6 M5.8 14 h1.6 M5.8 20 h1.6 M5.8 26 h1.6 M40 10 h1.6 M40 17 h1.6 M40 24 h1.6" stroke="#d0d0d0" stroke-width="0.4"/><path d="M0.0 32 h37.4" stroke="#d4d4d4" stroke-width="0.45" stroke-dasharray="2 0.8"/><path d="M42.6 29.2 h3.2 M42.6 31 h3.2 M2.2 31 h4.4" stroke="#c8c8c8" stroke-width="0.45"/><rect x="24.7" y="2.5" width="10.7" height="9.5" fill="#b6b6b6"/><rect x="30.0" y="12.0" width="5.4" height="19.0" fill="#c4c4c4"/><rect x="2.0" y="2.5" width="33.4" height="28.5" fill="none" stroke="#8c8c8c" stroke-width="0.50" stroke-dasharray="1.8 2.6 0.9 3.2 3 2.2"/><rect x="2.0" y="2.5" width="33.4" height="28.5" fill="none" stroke="#b8b8b8" stroke-width="0.35"/><path d="M16.0 2.5 v10.3 M2.0 12.8 h24.0 M26.0 12.8 v18.2 M16.0 21.3 h10.0 M2.0 21.3 h8.3" fill="none" stroke="#b8b8b8" stroke-width="0.5" stroke-dasharray="3 1.2 1.6 0.8"/><path d="M3.0 8.2 h10.0 M8.7 12.8 v8.5 M16.0 26.7 h13.4" fill="none" stroke="#b8b8b8" stroke-width="0.35"/><path d="M23 13.4 c-5 1.4-8.6 4.6-11 9 c4-2.6 7.6-5.6 11-9z" fill="#e0352f"/></svg></div><div class="lb" style="left:90.23px;top:333.09px">42</div><div class="th" style="left:165.66px;top:292.69px"><svg width="48" height="34" viewBox="0 0 48 34"><rect width="48" height="34" rx="1.2" fill="#0a0a0a"/><defs><linearGradient id="g9" x1="0" y1="0" x2="0" y2="1"><stop offset="0" stop-color="#d4d8da"/><stop offset="0.35" stop-color="#c1c5c8"/><stop offset="0.6" stop-color="#9ea2a5"/><stop offset="1" stop-color="#cfd0d0"/></linearGradient></defs><rect x="0" y="0" width="44.6" height="34" fill="url(#g9)"/><path d="M0 0 h44.6 v6 l-20 5 l-24.6-4z" fill="#e3e5e6"/><path d="M0 9 l7 2 v14 l-7 3z" fill="#3c4044"/><rect x="7" y="12" width="12" height="12" fill="#6e747a"/><rect x="9.5" y="15.5" width="6" height="5.5" fill="#1f2226"/><rect x="22" y="12.5" width="14" height="9.5" fill="#4f6a48"/><rect x="22" y="12.5" width="14" height="3" fill="#7e9a70"/><path d="M29 12.5 v9.5" stroke="#2d3330" stroke-width="0.7"/><rect x="36" y="9" width="8.6" height="16" fill="#5b6166"/><path d="M0 28 l12-4 h20 l12.6 5 v5 h-44.6z" fill="#d9d9d7"/><path d="M30 27 l8-2 l6.6 3 v6 h-12z" fill="#34383d"/><rect x="14" y="24.6" width="8" height="2.6" fill="#4a4e52"/><rect x="2" y="26" width="7" height="3" fill="#2e3236"/></svg></div><div class="lb" style="left:162.56px;top:333.09px">43</div><div class="th" style="left:237.99px;top:292.69px"><svg width="48" height="34" viewBox="0 0 48 34"><rect width="48" height="34" rx="1.2" fill="#ffffff"/><rect x="0.8" y="1.0" width="4.6" height="1.0" fill="#3a3a3a"/><rect x="43.2" y="1.1" width="3.8" height="0.9" fill="#c83a36"/><path d="M6.6 3.6 v26 M40.8 4.4 v24" stroke="#cfcfcf" stroke-width="0.4" stroke-dasharray="0.8 1.2" fill="none"/><path d="M5.8 8 h1.6 M5.8 14 h1.6 M5.8 20 h1.6 M5.8 26 h1.6 M40 10 h1.6 M40 17 h1.6 M40 24 h1.6" stroke="#d0d0d0" stroke-width="0.4"/><path d="M4.0 32 h33.5" stroke="#d4d4d4" stroke-width="0.45" stroke-dasharray="2 0.8"/><path d="M42.6 29.2 h3.2 M42.6 31 h3.2 M2.2 31 h4.4" stroke="#c8c8c8" stroke-width="0.45"/><rect x="25.8" y="2.5" width="9.7" height="9.5" fill="#a0a0a0"/><rect x="31.0" y="12.0" width="4.5" height="19.0" fill="#b6b6b6"/><rect x="6.0" y="2.5" width="29.5" height="28.5" fill="none" stroke="#8c8c8c" stroke-width="0.50" stroke-dasharray="1.8 2.6 0.9 3.2 3 2.2"/><rect x="6.0" y="2.5" width="29.5" height="28.5" fill="none" stroke="#b8b8b8" stroke-width="0.35"/><path d="M18.4 2.5 v10.3 M6.0 12.8 h21.2 M27.2 12.8 v18.2 M18.4 21.3 h8.8 M6.0 21.3 h7.4" fill="none" stroke="#b8b8b8" stroke-width="0.5" stroke-dasharray="3 1.2 1.6 0.8"/><path d="M7.0 8.2 h8.8 M11.9 12.8 v8.5 M18.4 26.7 h11.8" fill="none" stroke="#b8b8b8" stroke-width="0.35"/><path d="M15.1 9.3 L12.4 26.9 L14.4 27.1 z" fill="#e0352f" opacity="0.92"/></svg></div><div class="lb" style="left:234.89px;top:333.09px">44</div><div class="th" style="left:310.32px;top:292.69px"><svg width="48" height="34" viewBox="0 0 48 34"><rect width="48" height="34" rx="1.2" fill="#000"/><rect x="0" y="9.9" width="48" height="15.1" fill="#1c1d1f"/><path d="M0 9.9 h48 v1.6 l-10 1.6 h-28 l-10-1.6z" fill="#bfc1c3"/><rect x="11" y="10.3" width="7" height="0.9" fill="#c25a3a"/><rect x="0" y="11.6" width="9" height="11" fill="#3a3c40"/><path d="M2 12 v10 M4.4 12 v10 M6.8 12 v10" stroke="#7c8086" stroke-width="0.8"/><rect x="9" y="13" width="9" height="8.4" fill="#a9adb2"/><rect x="11" y="16" width="5" height="4" fill="#e6e8ea"/><rect x="18" y="13.2" width="10" height="7.6" fill="#d9dcdf"/><rect x="22" y="15" width="3" height="5" fill="#6a6e74"/><rect x="27" y="15.6" width="5" height="4.4" fill="#16171a"/><rect x="32" y="13" width="7" height="8" fill="#c4c8cc"/><rect x="39" y="12" width="9" height="10" fill="#4a4f52"/><rect x="41" y="14" width="4" height="5" fill="#8a9a8c"/><rect x="0" y="21.4" width="48" height="3.6" fill="#18191b"/><path d="M6 22 h34" stroke="#4a4c50" stroke-width="0.6"/><rect x="44.2" y="1.2" width="2.8" height="0.9" fill="#ddd"/></svg></div><div class="lb" style="left:307.22px;top:333.09px">45</div><div class="th" style="left:382.65px;top:292.69px"><svg width="48" height="34" viewBox="0 0 48 34"><rect width="48" height="34" rx="1.2" fill="#ffffff"/><rect x="0.8" y="1.0" width="4.6" height="1.0" fill="#3a3a3a"/><rect x="43.2" y="1.1" width="3.8" height="0.9" fill="#c83a36"/><path d="M6.6 3.6 v26 M40.8 4.4 v24" stroke="#cfcfcf" stroke-width="0.4" stroke-dasharray="0.8 1.2" fill="none"/><path d="M5.8 8 h1.6 M5.8 14 h1.6 M5.8 20 h1.6 M5.8 26 h1.6 M40 10 h1.6 M40 17 h1.6 M40 24 h1.6" stroke="#d0d0d0" stroke-width="0.4"/><path d="M6.0 32 h30.0" stroke="#d4d4d4" stroke-width="0.45" stroke-dasharray="2 0.8"/><path d="M42.6 29.2 h3.2 M42.6 31 h3.2 M2.2 31 h4.4" stroke="#c8c8c8" stroke-width="0.45"/><rect x="24.0" y="2.5" width="10.0" height="9.0" fill="#a0a0a0"/><rect x="29.0" y="11.5" width="5.0" height="12.0" fill="#b6b6b6"/><rect x="8.0" y="2.5" width="26.0" height="27.0" fill="none" stroke="#2e2e2e" stroke-width="0.75" stroke-dasharray="1.8 2.6 0.9 3.2 3 2.2"/><rect x="8.0" y="2.5" width="26.0" height="27.0" fill="none" stroke="#7c7c7c" stroke-width="0.35"/><path d="M18.9 2.5 v9.7 M8.0 12.2 h18.7 M26.7 12.2 v17.3 M18.9 20.3 h7.8 M8.0 20.3 h6.5" fill="none" stroke="#2e2e2e" stroke-width="0.5" stroke-dasharray="3 1.2 1.6 0.8"/><path d="M9.0 7.9 h7.8 M13.2 12.2 v8.1 M18.9 25.4 h10.4" fill="none" stroke="#7c7c7c" stroke-width="0.35"/><path d="M15.0 10.0 L11.4 23.8 L13.6 24.2 z" fill="#e0352f" opacity="0.92"/></svg></div><div class="lb" style="left:379.55px;top:333.09px">46</div><div class="th" style="left:454.98px;top:292.69px"><svg width="48" height="34" viewBox="0 0 48 34"><rect width="48" height="34" rx="1.2" fill="#000"/><rect x="0" y="0.5" width="48" height="26" fill="#141414"/><path d="M0 0.5 h48 v6 l-14 1 h-25 l-9-2z" fill="#262626"/><path d="M9 6.6 h25 v3.4 h-25z" fill="#e4e1da"/><path d="M0 8 l9 2 v14 h-9z" fill="#3c3a38"/><rect x="3" y="12" width="4" height="10" fill="#6a6764"/><rect x="9" y="10" width="25" height="14" fill="#a39a8c"/><rect x="14" y="12" width="12" height="9" fill="#77726c"/><rect x="17" y="18" width="12" height="4" fill="#d6cfc2"/><rect x="9" y="10" width="4" height="14" fill="#8a8378"/><rect x="34" y="10" width="10.6" height="5" fill="#b8d2e6"/><rect x="34" y="15" width="10.6" height="6" fill="#4f86b2"/><path d="M42 11 c3-1.6 5 0.4 6 2.4 v8 h-5.4z" fill="#3c5a2c"/><rect x="0" y="23.4" width="48" height="3.2" fill="#2c2a27"/><rect x="30" y="21" width="10" height="2.6" fill="#5b574f"/><rect x="44.2" y="1.2" width="2.8" height="0.9" fill="#ddd"/></svg></div><div class="lb" style="left:451.88px;top:333.09px">47</div><div class="th" style="left:527.31px;top:292.69px"><svg width="48" height="34" viewBox="0 0 48 34"><rect width="48" height="34" rx="1.2" fill="#ffffff"/><rect x="0.8" y="1.0" width="4.6" height="1.0" fill="#3a3a3a"/><rect x="43.2" y="1.1" width="3.8" height="0.9" fill="#c83a36"/><path d="M6.6 3.6 v26 M40.8 4.4 v24" stroke="#cfcfcf" stroke-width="0.4" stroke-dasharray="0.8 1.2" fill="none"/><path d="M5.8 8 h1.6 M5.8 14 h1.6 M5.8 20 h1.6 M5.8 26 h1.6 M40 10 h1.6 M40 17 h1.6 M40 24 h1.6" stroke="#d0d0d0" stroke-width="0.4"/><path d="M10.0 32 h27.0" stroke="#d4d4d4" stroke-width="0.45" stroke-dasharray="2 0.8"/><path d="M42.6 29.2 h3.2 M42.6 31 h3.2 M2.2 31 h4.4" stroke="#c8c8c8" stroke-width="0.45"/><rect x="25.0" y="2.5" width="10.0" height="8.0" fill="#a0a0a0"/><rect x="30.0" y="10.5" width="5.0" height="14.0" fill="#b6b6b6"/><rect x="12.0" y="2.5" width="23.0" height="27.0" fill="none" stroke="#2e2e2e" stroke-width="0.75" stroke-dasharray="1.8 2.6 0.9 3.2 3 2.2"/><rect x="12.0" y="2.5" width="23.0" height="27.0" fill="none" stroke="#7c7c7c" stroke-width="0.35"/><path d="M21.7 2.5 v9.7 M12.0 12.2 h16.6 M28.6 12.2 v17.3 M21.7 20.3 h6.9 M12.0 20.3 h5.8" fill="none" stroke="#2e2e2e" stroke-width="0.5" stroke-dasharray="3 1.2 1.6 0.8"/><path d="M13.0 7.9 h6.9 M16.6 12.2 v8.1 M21.7 25.4 h9.2" fill="none" stroke="#7c7c7c" stroke-width="0.35"/><path d="M15.0 6.0 L16.6 20.2 L18.6 19.8 z" fill="#e0352f" opacity="0.92"/></svg></div><div class="lb" style="left:524.21px;top:333.09px">48</div><div class="th" style="left:599.64px;top:292.69px"><svg width="48" height="34" viewBox="0 0 48 34"><rect width="48" height="34" rx="1.2" fill="#000"/><defs><linearGradient id="g10" x1="0" y1="0" x2="0" y2="1"><stop offset="0" stop-color="#5a4a38"/><stop offset="0.3" stop-color="#b59f82"/><stop offset="0.7" stop-color="#a38d70"/><stop offset="1" stop-color="#4e4132"/></linearGradient></defs><rect x="0" y="8" width="48" height="19" fill="url(#g10)"/><rect x="0" y="8" width="48" height="3" fill="#3e342a"/><path d="M8 10.5 h3 M20 10.5 h3" stroke="#ffe9b8" stroke-width="0.8"/><rect x="3" y="13" width="9" height="8" fill="#d8c6a6"/><rect x="13" y="13.5" width="8" height="7" fill="#8b7a64"/><rect x="27" y="12" width="7" height="10" fill="#8eb4d2"/><rect x="34.5" y="12" width="4" height="11" fill="#c9b79a"/><rect x="40" y="12" width="8" height="11" fill="#6a5b4a"/><rect x="0" y="22.6" width="48" height="4.4" fill="#4a3f34"/><rect x="6" y="22" width="10" height="2" fill="#d9ccb4"/><rect x="44.2" y="1.2" width="2.8" height="0.9" fill="#ddd"/></svg></div><div class="lb" style="left:596.54px;top:333.09px">49</div><div class="th" style="left:671.97px;top:292.69px"><svg width="48" height="34" viewBox="0 0 48 34"><rect width="48" height="34" rx="1.2" fill="#ffffff"/><rect x="0.8" y="1.0" width="4.6" height="1.0" fill="#3a3a3a"/><rect x="43.2" y="1.1" width="3.8" height="0.9" fill="#c83a36"/><path d="M6.6 3.6 v26 M40.8 4.4 v24" stroke="#cfcfcf" stroke-width="0.4" stroke-dasharray="0.8 1.2" fill="none"/><path d="M5.8 8 h1.6 M5.8 14 h1.6 M5.8 20 h1.6 M5.8 26 h1.6 M40 10 h1.6 M40 17 h1.6 M40 24 h1.6" stroke="#d0d0d0" stroke-width="0.4"/><path d="M10.0 32 h27.0" stroke="#d4d4d4" stroke-width="0.45" stroke-dasharray="2 0.8"/><path d="M42.6 29.2 h3.2 M42.6 31 h3.2 M2.2 31 h4.4" stroke="#c8c8c8" stroke-width="0.45"/><rect x="12.0" y="2.5" width="12.0" height="9.0" fill="#a0a0a0"/><rect x="30.0" y="2.5" width="5.0" height="27.0" fill="#b6b6b6"/><rect x="12.0" y="2.5" width="23.0" height="27.0" fill="none" stroke="#2e2e2e" stroke-width="0.75" stroke-dasharray="1.8 2.6 0.9 3.2 3 2.2"/><rect x="12.0" y="2.5" width="23.0" height="27.0" fill="none" stroke="#7c7c7c" stroke-width="0.35"/><path d="M21.7 2.5 v9.7 M12.0 12.2 h16.6 M28.6 12.2 v17.3 M21.7 20.3 h6.9 M12.0 20.3 h5.8" fill="none" stroke="#2e2e2e" stroke-width="0.5" stroke-dasharray="3 1.2 1.6 0.8"/><path d="M13.0 7.9 h6.9 M16.6 12.2 v8.1 M21.7 25.4 h9.2" fill="none" stroke="#7c7c7c" stroke-width="0.35"/><path d="M14 25.6 h13 l-6.5 1.8 z" fill="#e0352f"/></svg></div><div class="lb" style="left:668.87px;top:333.09px">50</div><div class="th" style="left:21.00px;top:350.96px"><svg width="48" height="34" viewBox="0 0 48 34"><rect width="48" height="34" rx="1.2" fill="#ffffff"/><rect x="0.8" y="1.0" width="4.6" height="1.0" fill="#3a3a3a"/><rect x="43.2" y="1.1" width="3.8" height="0.9" fill="#c83a36"/><path d="M6.6 3.6 v26 M40.8 4.4 v24" stroke="#cfcfcf" stroke-width="0.4" stroke-dasharray="0.8 1.2" fill="none"/><path d="M5.8 8 h1.6 M5.8 14 h1.6 M5.8 20 h1.6 M5.8 26 h1.6 M40 10 h1.6 M40 17 h1.6 M40 24 h1.6" stroke="#d0d0d0" stroke-width="0.4"/><path d="M11.0 32 h26.0" stroke="#d4d4d4" stroke-width="0.45" stroke-dasharray="2 0.8"/><path d="M42.6 29.2 h3.2 M42.6 31 h3.2 M2.2 31 h4.4" stroke="#c8c8c8" stroke-width="0.45"/><rect x="13.0" y="2.5" width="22.0" height="6.5" fill="#a0a0a0"/><rect x="13.0" y="9.0" width="8.0" height="9.0" fill="#979797"/><rect x="31.0" y="9.0" width="4.0" height="20.0" fill="#b6b6b6"/><rect x="13.0" y="2.5" width="22.0" height="27.0" fill="none" stroke="#2e2e2e" stroke-width="0.75" stroke-dasharray="1.8 2.6 0.9 3.2 3 2.2"/><rect x="13.0" y="2.5" width="22.0" height="27.0" fill="none" stroke="#7c7c7c" stroke-width="0.35"/><path d="M22.2 2.5 v9.7 M13.0 12.2 h15.8 M28.8 12.2 v17.3 M22.2 20.3 h6.6 M13.0 20.3 h5.5" fill="none" stroke="#2e2e2e" stroke-width="0.5" stroke-dasharray="3 1.2 1.6 0.8"/><path d="M14.0 7.9 h6.6 M17.4 12.2 v8.1 M22.2 25.4 h8.8" fill="none" stroke="#7c7c7c" stroke-width="0.35"/><path d="M13.5 23.6 h15 l-7.5 2.2 z" fill="#e0352f"/></svg></div><div class="lb" style="left:17.90px;top:391.36px">51</div><div class="th" style="left:93.33px;top:350.96px"><svg width="48" height="34" viewBox="0 0 48 34"><rect width="48" height="34" rx="1.2" fill="#000"/><rect x="5" y="0" width="35.4" height="34" fill="#2a2b2c"/><rect x="5" y="3" width="16" height="15" fill="#7f786c"/><rect x="6" y="3" width="15" height="4.6" fill="#a8a49c"/><rect x="7" y="9.6" width="9.6" height="6.4" fill="#c6ae88"/><rect x="8" y="11" width="6" height="3.4" fill="#e6d2a8"/><rect x="17.4" y="8" width="3" height="9" fill="#3a3836"/><rect x="5" y="18" width="16" height="2" fill="#151515"/><rect x="5" y="20" width="16" height="14" fill="#9c988f"/><rect x="6" y="21" width="14" height="4" fill="#c4c1ba"/><rect x="12" y="26" width="6" height="7" fill="#55514b"/><rect x="6" y="27" width="5" height="6" fill="#807a70"/><path d="M22 0 h17 l-3 6.4 h-13z" fill="#86b4da"/><path d="M26 0 l0.6 6.4 M30.4 0 v6.4 M35 0 l-1 6.4" stroke="#2c3a48" stroke-width="0.6"/><rect x="21" y="6.4" width="12" height="27.6" fill="#8f9296"/><rect x="22" y="8.6" width="6.6" height="8.6" fill="#2e3033"/><rect x="23" y="10" width="4.6" height="4" fill="#6c6a60"/><rect x="21" y="19" width="12" height="15" fill="#b9bbbd"/><rect x="23" y="24" width="5" height="9" fill="#7c7e80"/><path d="M33 5 l7-2 v24 h-7z" fill="#e6e8ea"/><path d="M33 34 c-1-5 0-9 2-11 c1 1.6 1.6 3 2 5 c0.6-2 1.6-3.4 2.6-4 c1 3 1 7 0.4 10z" fill="#3c5634"/><rect x="44.2" y="1.2" width="2.8" height="0.9" fill="#ddd"/></svg></div><div class="lb" style="left:90.23px;top:391.36px">52</div><div class="th" style="left:165.66px;top:350.96px"><svg width="48" height="34" viewBox="0 0 48 34"><rect width="48" height="34" rx="1.2" fill="#ffffff"/><rect x="0.8" y="1.0" width="4.6" height="1.0" fill="#3a3a3a"/><rect x="43.2" y="1.1" width="3.8" height="0.9" fill="#c83a36"/><path d="M6.6 3.6 v26 M40.8 4.4 v24" stroke="#cfcfcf" stroke-width="0.4" stroke-dasharray="0.8 1.2" fill="none"/><path d="M5.8 8 h1.6 M5.8 14 h1.6 M5.8 20 h1.6 M5.8 26 h1.6 M40 10 h1.6 M40 17 h1.6 M40 24 h1.6" stroke="#d0d0d0" stroke-width="0.4"/><path d="M11.0 32 h26.0" stroke="#d4d4d4" stroke-width="0.45" stroke-dasharray="2 0.8"/><path d="M42.6 29.2 h3.2 M42.6 31 h3.2 M2.2 31 h4.4" stroke="#c8c8c8" stroke-width="0.45"/><rect x="13.0" y="2.5" width="22.0" height="6.5" fill="#a0a0a0"/><rect x="13.0" y="9.0" width="10.0" height="10.0" fill="#979797"/><rect x="31.0" y="9.0" width="4.0" height="20.0" fill="#b6b6b6"/><rect x="13.0" y="2.5" width="22.0" height="27.0" fill="none" stroke="#2e2e2e" stroke-width="0.75" stroke-dasharray="1.8 2.6 0.9 3.2 3 2.2"/><rect x="13.0" y="2.5" width="22.0" height="27.0" fill="none" stroke="#7c7c7c" stroke-width="0.35"/><path d="M22.2 2.5 v9.7 M13.0 12.2 h15.8 M28.8 12.2 v17.3 M22.2 20.3 h6.6 M13.0 20.3 h5.5" fill="none" stroke="#2e2e2e" stroke-width="0.5" stroke-dasharray="3 1.2 1.6 0.8"/><path d="M14.0 7.9 h6.6 M17.4 12.2 v8.1 M22.2 25.4 h8.8" fill="none" stroke="#7c7c7c" stroke-width="0.35"/><path d="M14 23.8 h17 l-8.5 2.4 z" fill="#e0352f"/></svg></div><div class="lb" style="left:162.56px;top:391.36px">53</div><div class="th" style="left:237.99px;top:350.96px"><svg width="48" height="34" viewBox="0 0 48 34"><rect width="48" height="34" rx="1.2" fill="#0a0a0a"/><rect x="0" y="2.9" width="48" height="31.1" fill="#9a9892"/><path d="M0 2.9 h48 l-13 13 h-22z" fill="#aea48e"/><path d="M0 2.9 l13 13 M48 2.9 l-13 13" stroke="#f6f2e6" stroke-width="0.9"/><path d="M11 6 h4 M20 5 h3 M27 5 h3 M34 6 h4 M16 9.4 h3 M24 8.6 h3 M31 9.4 h3 M20 12.6 h9" stroke="#fffaea" stroke-width="1"/><path d="M0 2.9 l13 13 v14 l-13 4z" fill="#84847f"/><path d="M48 2.9 l-13 13 v14 l13 4z" fill="#8a8a85"/><rect x="13" y="15.6" width="22" height="2.6" fill="#2e2e30"/><rect x="15" y="14" width="18" height="1.8" fill="#d9d6cc"/><rect x="17" y="16.2" width="4" height="1.2" fill="#d8d8d8"/><rect x="27" y="16.2" width="4" height="1.2" fill="#d8d8d8"/><rect x="13" y="18.2" width="22" height="12" fill="#c4c3be"/><rect x="20" y="19" width="8" height="9" fill="#e2e1dc"/><rect x="14" y="20" width="5" height="8" fill="#a8a7a2"/><rect x="0.6" y="20" width="7.4" height="11" fill="#26282b"/><path d="M2 22 h5 M2 25 h5 M2 28 h5" stroke="#6a7078" stroke-width="0.9"/><rect x="40" y="20" width="7.4" height="11" fill="#26282b"/><path d="M41 22 h5 M41 25 h5 M41 28 h5" stroke="#6a7078" stroke-width="0.9"/><path d="M0 30.4 l13-1 h22 l13 1 v3.6 h-48z" fill="#cfcecb"/><path d="M24 33.6 c-1-3 0-6 2-7.6 c0.6 1 1 2 1 3 c1-1 2-1.6 3-1.6 c0.4 2.4-0.4 4.6-1.6 6.2z" fill="#4c6c46"/><rect x="30" y="29" width="6" height="3" fill="#e8e8e6"/><rect x="43.4" y="1.2" width="3.4" height="0.9" fill="#b8322e"/></svg></div><div class="lb" style="left:234.89px;top:391.36px">54</div><div class="th" style="left:310.32px;top:350.96px"><svg width="48" height="34" viewBox="0 0 48 34"><rect width="48" height="34" rx="1.2" fill="#000000"/><path d="M15.4 0 V13.2" stroke="#f0f0f0" stroke-width="0.7"/><rect x="16.0" y="12.2" width="5.8" height="1.2" fill="#d42626"/><path d="M15.4 34 V30.6 h1.6" stroke="#f0f0f0" stroke-width="0.6" fill="none"/><path d="M16.6 32.2 h4.6" stroke="#8e8e8e" stroke-width="0.5"/></svg></div><div class="lb" style="left:307.22px;top:391.36px">55</div><div class="th" style="left:382.65px;top:350.96px"><svg width="48" height="34" viewBox="0 0 48 34"><rect width="48" height="34" rx="1.2" fill="#000000"/><path d="M15.7 0 V14.6" stroke="#f0f0f0" stroke-width="0.7"/><path d="M15.7 14.4 h10.0" stroke="#dcdcdc" stroke-width="0.7"/><path d="M15.7 34 V30.6 h1.6" stroke="#f0f0f0" stroke-width="0.6" fill="none"/><path d="M16.9 32.2 h4.6" stroke="#8e8e8e" stroke-width="0.5"/></svg></div><div class="lb" style="left:379.55px;top:391.36px">56</div><div class="th" style="left:454.98px;top:350.96px"><svg width="48" height="34" viewBox="0 0 48 34"><rect width="48" height="34" rx="1.2" fill="#ffffff"/><rect x="0.8" y="1.0" width="4.6" height="1.0" fill="#3a3a3a"/><rect x="43.2" y="1.1" width="3.8" height="0.9" fill="#c83a36"/><path d="M6.6 3.6 v26 M40.8 4.4 v24" stroke="#cfcfcf" stroke-width="0.4" stroke-dasharray="0.8 1.2" fill="none"/><path d="M5.8 8 h1.6 M5.8 14 h1.6 M5.8 20 h1.6 M5.8 26 h1.6 M40 10 h1.6 M40 17 h1.6 M40 24 h1.6" stroke="#d0d0d0" stroke-width="0.4"/><path d="M5.0 32 h34.0" stroke="#d4d4d4" stroke-width="0.45" stroke-dasharray="2 0.8"/><path d="M42.6 29.2 h3.2 M42.6 31 h3.2 M2.2 31 h4.4" stroke="#c8c8c8" stroke-width="0.45"/><rect x="7.7" y="17.9" width="29.1" height="12.7" fill="#9e9e9e"/><rect x="31.9" y="5.6" width="4.9" height="12.3" fill="#a0a0a0"/><rect x="27.7" y="17.9" width="4.2" height="6.1" fill="#fafafa"/><rect x="12.0" y="20.0" width="9.0" height="7.0" fill="#8c8c8c"/></svg></div><div class="lb" style="left:451.88px;top:391.36px">57</div><div class="th" style="left:527.31px;top:350.96px"><svg width="48" height="34" viewBox="0 0 48 34"><rect width="48" height="34" rx="1.2" fill="#ffffff"/><rect x="0.8" y="1.0" width="4.6" height="1.0" fill="#3a3a3a"/><rect x="43.2" y="1.1" width="3.8" height="0.9" fill="#c83a36"/><path d="M6.6 3.6 v26 M40.8 4.4 v24" stroke="#cfcfcf" stroke-width="0.4" stroke-dasharray="0.8 1.2" fill="none"/><path d="M5.8 8 h1.6 M5.8 14 h1.6 M5.8 20 h1.6 M5.8 26 h1.6 M40 10 h1.6 M40 17 h1.6 M40 24 h1.6" stroke="#d0d0d0" stroke-width="0.4"/><path d="M8.9 32 h29.5" stroke="#d4d4d4" stroke-width="0.45" stroke-dasharray="2 0.8"/><path d="M42.6 29.2 h3.2 M42.6 31 h3.2 M2.2 31 h4.4" stroke="#c8c8c8" stroke-width="0.45"/><rect x="28.2" y="2.4" width="8.2" height="10.9" fill="#a0a0a0"/><rect x="31.0" y="13.3" width="5.4" height="15.5" fill="#b6b6b6"/><rect x="10.9" y="2.4" width="25.5" height="30.0" fill="none" stroke="#2e2e2e" stroke-width="0.75" stroke-dasharray="1.8 2.6 0.9 3.2 3 2.2"/><rect x="10.9" y="2.4" width="25.5" height="30.0" fill="none" stroke="#7c7c7c" stroke-width="0.35"/><path d="M21.6 2.4 v10.8 M10.9 13.2 h18.4 M29.3 13.2 v19.2 M21.6 22.2 h7.6 M10.9 22.2 h6.4" fill="none" stroke="#2e2e2e" stroke-width="0.5" stroke-dasharray="3 1.2 1.6 0.8"/><path d="M11.9 8.4 h7.6 M16.0 13.2 v9.0 M21.6 27.9 h10.2" fill="none" stroke="#7c7c7c" stroke-width="0.35"/></svg></div><div class="lb" style="left:524.21px;top:391.36px">58</div><div class="th" style="left:599.64px;top:350.96px"><svg width="48" height="34" viewBox="0 0 48 34"><rect width="48" height="34" rx="1.2" fill="#ffffff"/><rect x="0.8" y="1.0" width="4.6" height="1.0" fill="#3a3a3a"/><rect x="43.2" y="1.1" width="3.8" height="0.9" fill="#c83a36"/><path d="M6.6 3.6 v26 M40.8 4.4 v24" stroke="#cfcfcf" stroke-width="0.4" stroke-dasharray="0.8 1.2" fill="none"/><path d="M5.8 8 h1.6 M5.8 14 h1.6 M5.8 20 h1.6 M5.8 26 h1.6 M40 10 h1.6 M40 17 h1.6 M40 24 h1.6" stroke="#d0d0d0" stroke-width="0.4"/><path d="M8.8 32 h30.4" stroke="#d4d4d4" stroke-width="0.45" stroke-dasharray="2 0.8"/><path d="M42.6 29.2 h3.2 M42.6 31 h3.2 M2.2 31 h4.4" stroke="#c8c8c8" stroke-width="0.45"/><rect x="27.2" y="2.4" width="10.0" height="10.9" fill="#a6a6a6"/><rect x="30.8" y="13.3" width="6.4" height="17.3" fill="#a6a6a6"/><rect x="10.8" y="2.4" width="26.4" height="28.2" fill="none" stroke="#2e2e2e" stroke-width="0.75" stroke-dasharray="1.8 2.6 0.9 3.2 3 2.2"/><rect x="10.8" y="2.4" width="26.4" height="28.2" fill="none" stroke="#7c7c7c" stroke-width="0.35"/><path d="M21.9 2.4 v10.2 M10.8 12.6 h19.0 M29.8 12.6 v18.0 M21.9 21.0 h7.9 M10.8 21.0 h6.6" fill="none" stroke="#2e2e2e" stroke-width="0.5" stroke-dasharray="3 1.2 1.6 0.8"/><path d="M11.8 8.0 h7.9 M16.1 12.6 v8.5 M21.9 26.4 h10.6" fill="none" stroke="#7c7c7c" stroke-width="0.35"/></svg></div><div class="lb" style="left:596.54px;top:391.36px">59</div><div class="th" style="left:671.97px;top:350.96px"><svg width="48" height="34" viewBox="0 0 48 34"><rect width="48" height="34" rx="1.2" fill="#ffffff"/><rect x="0.8" y="1.0" width="4.6" height="1.0" fill="#3a3a3a"/><rect x="43.2" y="1.1" width="3.8" height="0.9" fill="#c83a36"/><path d="M6.6 3.6 v26 M40.8 4.4 v24" stroke="#cfcfcf" stroke-width="0.4" stroke-dasharray="0.8 1.2" fill="none"/><path d="M5.8 8 h1.6 M5.8 14 h1.6 M5.8 20 h1.6 M5.8 26 h1.6 M40 10 h1.6 M40 17 h1.6 M40 24 h1.6" stroke="#d0d0d0" stroke-width="0.4"/><path d="M9.0 32 h29.8" stroke="#d4d4d4" stroke-width="0.45" stroke-dasharray="2 0.8"/><path d="M42.6 29.2 h3.2 M42.6 31 h3.2 M2.2 31 h4.4" stroke="#c8c8c8" stroke-width="0.45"/><rect x="28.7" y="2.7" width="8.1" height="10.6" fill="#a8a8a8"/><rect x="31.4" y="13.3" width="5.4" height="14.6" fill="#adadad"/><rect x="11.0" y="2.4" width="25.8" height="28.2" fill="none" stroke="#8c8c8c" stroke-width="0.50" stroke-dasharray="1.8 2.6 0.9 3.2 3 2.2"/><rect x="11.0" y="2.4" width="25.8" height="28.2" fill="none" stroke="#b8b8b8" stroke-width="0.35"/><path d="M21.8 2.4 v10.2 M11.0 12.6 h18.6 M29.6 12.6 v18.0 M21.8 21.0 h7.7 M11.0 21.0 h6.5" fill="none" stroke="#b8b8b8" stroke-width="0.5" stroke-dasharray="3 1.2 1.6 0.8"/><path d="M12.0 8.0 h7.7 M16.2 12.6 v8.5 M21.8 26.4 h10.3" fill="none" stroke="#b8b8b8" stroke-width="0.35"/></svg></div><div class="lb" style="left:668.87px;top:391.36px">60</div><div class="th" style="left:21.00px;top:409.23px"><svg width="48" height="34" viewBox="0 0 48 34"><rect width="48" height="34" rx="1.2" fill="#ffffff"/><rect x="0.8" y="1.0" width="4.6" height="1.0" fill="#3a3a3a"/><rect x="43.2" y="1.1" width="3.8" height="0.9" fill="#c83a36"/><path d="M6.6 3.6 v26 M40.8 4.4 v24" stroke="#cfcfcf" stroke-width="0.4" stroke-dasharray="0.8 1.2" fill="none"/><path d="M5.8 8 h1.6 M5.8 14 h1.6 M5.8 20 h1.6 M5.8 26 h1.6 M40 10 h1.6 M40 17 h1.6 M40 24 h1.6" stroke="#d0d0d0" stroke-width="0.4"/><path d="M13.7 32 h24.3" stroke="#d4d4d4" stroke-width="0.45" stroke-dasharray="2 0.8"/><path d="M42.6 29.2 h3.2 M42.6 31 h3.2 M2.2 31 h4.4" stroke="#c8c8c8" stroke-width="0.45"/><rect x="31.0" y="13.9" width="5.0" height="19.1" fill="#b6b6b6"/><rect x="24.6" y="24.0" width="11.4" height="9.0" fill="#a0a0a0"/><rect x="15.7" y="10.6" width="20.3" height="22.4" fill="none" stroke="#2e2e2e" stroke-width="0.75" stroke-dasharray="1.8 2.6 0.9 3.2 3 2.2"/><rect x="15.7" y="10.6" width="20.3" height="22.4" fill="none" stroke="#7c7c7c" stroke-width="0.35"/><path d="M24.2 10.6 v8.1 M15.7 18.7 h14.6 M30.3 18.7 v14.3 M24.2 25.4 h6.1 M15.7 25.4 h5.1" fill="none" stroke="#2e2e2e" stroke-width="0.5" stroke-dasharray="3 1.2 1.6 0.8"/><path d="M16.7 15.1 h6.1 M19.8 18.7 v6.7 M24.2 29.6 h8.1" fill="none" stroke="#7c7c7c" stroke-width="0.35"/></svg></div><div class="lb" style="left:17.90px;top:449.63px">61</div><div class="th" style="left:93.33px;top:409.23px"><svg width="48" height="34" viewBox="0 0 48 34"><rect width="48" height="34" rx="1.2" fill="#ffffff"/><rect x="0.8" y="1.0" width="4.6" height="1.0" fill="#3a3a3a"/><rect x="43.2" y="1.1" width="3.8" height="0.9" fill="#c83a36"/><path d="M6.6 3.6 v26 M40.8 4.4 v24" stroke="#cfcfcf" stroke-width="0.4" stroke-dasharray="0.8 1.2" fill="none"/><path d="M5.8 8 h1.6 M5.8 14 h1.6 M5.8 20 h1.6 M5.8 26 h1.6 M40 10 h1.6 M40 17 h1.6 M40 24 h1.6" stroke="#d0d0d0" stroke-width="0.4"/><path d="M14.0 32 h23.2" stroke="#d4d4d4" stroke-width="0.45" stroke-dasharray="2 0.8"/><path d="M42.6 29.2 h3.2 M42.6 31 h3.2 M2.2 31 h4.4" stroke="#c8c8c8" stroke-width="0.45"/><rect x="30.6" y="13.9" width="4.6" height="19.1" fill="#c8c8c8"/><rect x="24.4" y="24.0" width="10.8" height="9.0" fill="#b4b4b4"/><rect x="16.0" y="10.6" width="19.2" height="22.4" fill="none" stroke="#8c8c8c" stroke-width="0.50" stroke-dasharray="1.8 2.6 0.9 3.2 3 2.2"/><rect x="16.0" y="10.6" width="19.2" height="22.4" fill="none" stroke="#b8b8b8" stroke-width="0.35"/><path d="M24.1 10.6 v8.1 M16.0 18.7 h13.8 M29.8 18.7 v14.3 M24.1 25.4 h5.8 M16.0 25.4 h4.8" fill="none" stroke="#b8b8b8" stroke-width="0.5" stroke-dasharray="3 1.2 1.6 0.8"/><path d="M17.0 15.1 h5.8 M19.8 18.7 v6.7 M24.1 29.6 h7.7" fill="none" stroke="#b8b8b8" stroke-width="0.35"/></svg></div><div class="lb" style="left:90.23px;top:449.63px">62</div><div class="th" style="left:165.66px;top:409.23px"><svg width="48" height="34" viewBox="0 0 48 34"><rect width="48" height="34" rx="1.2" fill="#000000"/><path d="M16.3 0 V13.9" stroke="#f0f0f0" stroke-width="0.7"/><path d="M16.3 13.7 h6.5" stroke="#dcdcdc" stroke-width="0.7"/><path d="M16.3 34 V30.6 h1.6" stroke="#f0f0f0" stroke-width="0.6" fill="none"/><path d="M17.5 32.2 h4.6" stroke="#8e8e8e" stroke-width="0.5"/></svg></div><div class="lb" style="left:162.56px;top:449.63px">63</div><div class="th" style="left:237.99px;top:409.23px"><svg width="48" height="34" viewBox="0 0 48 34"><rect width="48" height="34" rx="1.2" fill="#ffffff"/><rect x="0.8" y="1.0" width="4.6" height="1.0" fill="#3a3a3a"/><rect x="41.4" y="0.9" width="5.4" height="1.8" rx="0.7" fill="#d8332d"/><path d="M6.6 3.6 v26 M40.8 4.4 v24" stroke="#cfcfcf" stroke-width="0.4" stroke-dasharray="0.8 1.2" fill="none"/><path d="M5.8 8 h1.6 M5.8 14 h1.6 M5.8 20 h1.6 M5.8 26 h1.6 M40 10 h1.6 M40 17 h1.6 M40 24 h1.6" stroke="#d0d0d0" stroke-width="0.4"/><path d="M6.0 32 h32.0" stroke="#d4d4d4" stroke-width="0.45" stroke-dasharray="2 0.8"/><path d="M42.6 29.2 h3.2 M42.6 31 h3.2 M2.2 31 h4.4" stroke="#c8c8c8" stroke-width="0.45"/><rect x="8.0" y="2.4" width="24.0" height="16.6" fill="#d6d6d6"/><rect x="18.0" y="8.0" width="14.0" height="11.0" fill="#f4f4f4"/><rect x="8.0" y="19.0" width="28.0" height="10.0" fill="#a0a0a0"/><rect x="32.0" y="5.0" width="4.0" height="24.0" fill="#a0a0a0"/><rect x="8.0" y="2.4" width="28.0" height="26.6" fill="none" stroke="#8c8c8c" stroke-width="0.50" stroke-dasharray="1.8 2.6 0.9 3.2 3 2.2"/><rect x="8.0" y="2.4" width="28.0" height="26.6" fill="none" stroke="#b8b8b8" stroke-width="0.35"/><path d="M19.8 2.4 v9.6 M8.0 12.0 h20.2 M28.2 12.0 v17.0 M19.8 20.0 h8.4 M8.0 20.0 h7.0" fill="none" stroke="#b8b8b8" stroke-width="0.5" stroke-dasharray="3 1.2 1.6 0.8"/><path d="M9.0 7.7 h8.4 M13.6 12.0 v8.0 M19.8 25.0 h11.2" fill="none" stroke="#b8b8b8" stroke-width="0.35"/></svg></div><div class="lb" style="left:234.89px;top:449.63px">64</div><div class="th" style="left:310.32px;top:409.23px"><svg width="48" height="34" viewBox="0 0 48 34"><rect width="48" height="34" rx="1.2" fill="#ffffff"/><rect x="0.8" y="1.0" width="4.6" height="1.0" fill="#3a3a3a"/><rect x="41.4" y="0.9" width="5.4" height="1.8" rx="0.7" fill="#d8332d"/><path d="M6.6 3.6 v26 M40.8 4.4 v24" stroke="#cfcfcf" stroke-width="0.4" stroke-dasharray="0.8 1.2" fill="none"/><path d="M5.8 8 h1.6 M5.8 14 h1.6 M5.8 20 h1.6 M5.8 26 h1.6 M40 10 h1.6 M40 17 h1.6 M40 24 h1.6" stroke="#d0d0d0" stroke-width="0.4"/><path d="M9.5 32 h27.5" stroke="#d4d4d4" stroke-width="0.45" stroke-dasharray="2 0.8"/><path d="M42.6 29.2 h3.2 M42.6 31 h3.2 M2.2 31 h4.4" stroke="#c8c8c8" stroke-width="0.45"/><rect x="27.5" y="2.5" width="7.5" height="10.1" fill="#a0a0a0"/><rect x="31.3" y="12.6" width="3.7" height="17.4" fill="#b6b6b6"/><rect x="11.5" y="2.5" width="23.5" height="29.2" fill="none" stroke="#2e2e2e" stroke-width="0.75" stroke-dasharray="1.8 2.6 0.9 3.2 3 2.2"/><rect x="11.5" y="2.5" width="23.5" height="29.2" fill="none" stroke="#7c7c7c" stroke-width="0.35"/><path d="M21.4 2.5 v10.5 M11.5 13.0 h16.9 M28.4 13.0 v18.7 M21.4 21.8 h7.0 M11.5 21.8 h5.9" fill="none" stroke="#2e2e2e" stroke-width="0.5" stroke-dasharray="3 1.2 1.6 0.8"/><path d="M12.5 8.3 h7.0 M16.2 13.0 v8.8 M21.4 27.3 h9.4" fill="none" stroke="#7c7c7c" stroke-width="0.35"/></svg></div><div class="lb" style="left:307.22px;top:449.63px">65</div><div class="th" style="left:382.65px;top:409.23px"><svg width="48" height="34" viewBox="0 0 48 34"><rect width="48" height="34" rx="1.2" fill="#ffffff"/><rect x="0.8" y="1.0" width="4.6" height="1.0" fill="#3a3a3a"/><rect x="41.4" y="0.9" width="5.4" height="1.8" rx="0.7" fill="#d8332d"/><path d="M6.6 3.6 v26 M40.8 4.4 v24" stroke="#cfcfcf" stroke-width="0.4" stroke-dasharray="0.8 1.2" fill="none"/><path d="M5.8 8 h1.6 M5.8 14 h1.6 M5.8 20 h1.6 M5.8 26 h1.6 M40 10 h1.6 M40 17 h1.6 M40 24 h1.6" stroke="#d0d0d0" stroke-width="0.4"/><path d="M8.4 32 h27.6" stroke="#d4d4d4" stroke-width="0.45" stroke-dasharray="2 0.8"/><path d="M42.6 29.2 h3.2 M42.6 31 h3.2 M2.2 31 h4.4" stroke="#c8c8c8" stroke-width="0.45"/><rect x="27.8" y="2.5" width="6.2" height="9.5" fill="#a0a0a0"/><rect x="29.8" y="12.0" width="4.2" height="18.0" fill="#a0a0a0"/><rect x="10.4" y="2.5" width="23.6" height="29.0" fill="none" stroke="#2e2e2e" stroke-width="0.75" stroke-dasharray="1.8 2.6 0.9 3.2 3 2.2"/><rect x="10.4" y="2.5" width="23.6" height="29.0" fill="none" stroke="#7c7c7c" stroke-width="0.35"/><path d="M20.3 2.5 v10.4 M10.4 12.9 h17.0 M27.4 12.9 v18.6 M20.3 21.6 h7.1 M10.4 21.6 h5.9" fill="none" stroke="#2e2e2e" stroke-width="0.5" stroke-dasharray="3 1.2 1.6 0.8"/><path d="M11.4 8.3 h7.1 M15.1 12.9 v8.7 M20.3 27.1 h9.4" fill="none" stroke="#7c7c7c" stroke-width="0.35"/></svg></div><div class="lb" style="left:379.55px;top:449.63px">66</div><div class="th" style="left:454.98px;top:409.23px"><svg width="48" height="34" viewBox="0 0 48 34"><rect width="48" height="34" rx="1.2" fill="#ffffff"/><rect x="0.8" y="1.0" width="4.6" height="1.0" fill="#3a3a3a"/><rect x="41.4" y="0.9" width="5.4" height="1.8" rx="0.7" fill="#d8332d"/><path d="M6.6 3.6 v26 M40.8 4.4 v24" stroke="#cfcfcf" stroke-width="0.4" stroke-dasharray="0.8 1.2" fill="none"/><path d="M5.8 8 h1.6 M5.8 14 h1.6 M5.8 20 h1.6 M5.8 26 h1.6 M40 10 h1.6 M40 17 h1.6 M40 24 h1.6" stroke="#d0d0d0" stroke-width="0.4"/><path d="M8.6 32 h29.4" stroke="#d4d4d4" stroke-width="0.45" stroke-dasharray="2 0.8"/><path d="M42.6 29.2 h3.2 M42.6 31 h3.2 M2.2 31 h4.4" stroke="#c8c8c8" stroke-width="0.45"/><rect x="10.6" y="8.8" width="19.1" height="19.2" fill="#cfcfcf"/><rect x="16.0" y="4.0" width="12.0" height="5.0" fill="#f2f2f2"/><rect x="24.0" y="17.0" width="5.0" height="5.0" fill="#f4f4f4"/><rect x="28.4" y="3.7" width="7.6" height="23.7" fill="#a0a0a0"/></svg></div><div class="lb" style="left:451.88px;top:449.63px">67</div><div class="th" style="left:527.31px;top:409.23px"><svg width="48" height="34" viewBox="0 0 48 34"><rect width="48" height="34" rx="1.2" fill="#ffffff"/><rect x="0.8" y="1.0" width="4.6" height="1.0" fill="#3a3a3a"/><rect x="41.4" y="0.9" width="5.4" height="1.8" rx="0.7" fill="#d8332d"/><path d="M6.6 3.6 v26 M40.8 4.4 v24" stroke="#cfcfcf" stroke-width="0.4" stroke-dasharray="0.8 1.2" fill="none"/><path d="M5.8 8 h1.6 M5.8 14 h1.6 M5.8 20 h1.6 M5.8 26 h1.6 M40 10 h1.6 M40 17 h1.6 M40 24 h1.6" stroke="#d0d0d0" stroke-width="0.4"/><path d="M12.8 32 h24.4" stroke="#d4d4d4" stroke-width="0.45" stroke-dasharray="2 0.8"/><path d="M42.6 29.2 h3.2 M42.6 31 h3.2 M2.2 31 h4.4" stroke="#c8c8c8" stroke-width="0.45"/><rect x="30.0" y="13.9" width="5.2" height="19.1" fill="#b6b6b6"/><rect x="23.7" y="24.0" width="11.5" height="9.0" fill="#a0a0a0"/><rect x="14.8" y="10.0" width="20.4" height="23.0" fill="none" stroke="#2e2e2e" stroke-width="0.75" stroke-dasharray="1.8 2.6 0.9 3.2 3 2.2"/><rect x="14.8" y="10.0" width="20.4" height="23.0" fill="none" stroke="#7c7c7c" stroke-width="0.35"/><path d="M23.4 10.0 v8.3 M14.8 18.3 h14.7 M29.5 18.3 v14.7 M23.4 25.2 h6.1 M14.8 25.2 h5.1" fill="none" stroke="#2e2e2e" stroke-width="0.5" stroke-dasharray="3 1.2 1.6 0.8"/><path d="M15.8 14.6 h6.1 M18.9 18.3 v6.9 M23.4 29.6 h8.2" fill="none" stroke="#7c7c7c" stroke-width="0.35"/></svg></div><div class="lb" style="left:524.21px;top:449.63px">68</div><div class="th" style="left:599.64px;top:409.23px"><svg width="48" height="34" viewBox="0 0 48 34"><rect width="48" height="34" rx="1.2" fill="#ffffff"/><rect x="0.8" y="1.0" width="4.6" height="1.0" fill="#3a3a3a"/><rect x="41.4" y="0.9" width="5.4" height="1.8" rx="0.7" fill="#d8332d"/><path d="M6.6 3.6 v26 M40.8 4.4 v24" stroke="#cfcfcf" stroke-width="0.4" stroke-dasharray="0.8 1.2" fill="none"/><path d="M5.8 8 h1.6 M5.8 14 h1.6 M5.8 20 h1.6 M5.8 26 h1.6 M40 10 h1.6 M40 17 h1.6 M40 24 h1.6" stroke="#d0d0d0" stroke-width="0.4"/><path d="M12.5 32 h26.2" stroke="#d4d4d4" stroke-width="0.45" stroke-dasharray="2 0.8"/><path d="M42.6 29.2 h3.2 M42.6 31 h3.2 M2.2 31 h4.4" stroke="#c8c8c8" stroke-width="0.45"/><rect x="31.6" y="15.0" width="5.1" height="18.0" fill="#b6b6b6"/><rect x="22.7" y="25.4" width="14.0" height="7.6" fill="#a0a0a0"/><rect x="14.5" y="11.3" width="22.2" height="21.7" fill="none" stroke="#2e2e2e" stroke-width="0.75" stroke-dasharray="1.8 2.6 0.9 3.2 3 2.2"/><rect x="14.5" y="11.3" width="22.2" height="21.7" fill="none" stroke="#7c7c7c" stroke-width="0.35"/><path d="M23.8 11.3 v7.8 M14.5 19.1 h16.0 M30.5 19.1 v13.9 M23.8 25.6 h6.7 M14.5 25.6 h5.5" fill="none" stroke="#2e2e2e" stroke-width="0.5" stroke-dasharray="3 1.2 1.6 0.8"/><path d="M15.5 15.6 h6.7 M18.9 19.1 v6.5 M23.8 29.7 h8.9" fill="none" stroke="#7c7c7c" stroke-width="0.35"/></svg></div><div class="lb" style="left:596.54px;top:449.63px">69</div><div class="th" style="left:671.97px;top:409.23px"><svg width="48" height="34" viewBox="0 0 48 34"><rect width="48" height="34" rx="1.2" fill="#000000"/><path d="M15.3 0 V15.4" stroke="#f0f0f0" stroke-width="0.7"/><path d="M15.3 15.2 h7.0" stroke="#dcdcdc" stroke-width="0.7"/><path d="M15.3 34 V30.6 h1.6" stroke="#f0f0f0" stroke-width="0.6" fill="none"/><path d="M16.5 32.2 h4.6" stroke="#8e8e8e" stroke-width="0.5"/></svg></div><div class="lb" style="left:668.87px;top:449.63px">70</div><div class="th" style="left:21.00px;top:467.50px"><svg width="48" height="34" viewBox="0 0 48 34"><rect width="48" height="34" rx="1.2" fill="#000"/><rect x="10.0" y="4.0" width="5.6" height="5.4" fill="#e9e4d8"/><rect x="17.5" y="4.0" width="5.6" height="5.4" fill="#f1ede4"/><rect x="25.0" y="4.0" width="5.6" height="5.4" fill="#8a7d6c"/><rect x="32.5" y="4.0" width="5.6" height="5.4" fill="#a59a88"/><rect x="10.0" y="12.5" width="5.6" height="5.4" fill="#b9b2a4"/><rect x="17.5" y="12.5" width="5.6" height="5.4" fill="#8f8d88"/><rect x="25.0" y="12.5" width="5.6" height="5.4" fill="#3c3c3e"/><rect x="32.5" y="12.5" width="5.6" height="5.4" fill="#d9c9a2"/><rect x="10.0" y="24.0" width="5.6" height="5.4" fill="#5a5a5c"/><rect x="17.5" y="24.0" width="5.6" height="5.4" fill="#9fa3a6"/><rect x="25.0" y="24.0" width="5.6" height="5.4" fill="#7d8084"/><rect x="32.5" y="24.0" width="5.6" height="5.4" fill="#e0a060"/><path d="M1 21.4 h46" stroke="#d8d8d8" stroke-width="0.5"/><rect x="1" y="20.2" width="3" height="0.7" fill="#aaa"/></svg></div><div class="lb" style="left:17.90px;top:507.90px">71</div><div class="th" style="left:93.33px;top:467.50px"><svg width="48" height="34" viewBox="0 0 48 34"><rect width="48" height="34" rx="1.2" fill="#000000"/><path d="M15.4 0 V14.5" stroke="#7c7c7c" stroke-width="0.7"/><path d="M15.4 14.3 h3.0" stroke="#8a8a8a" stroke-width="0.7"/><path d="M15.4 34 V30.6 h1.6" stroke="#7c7c7c" stroke-width="0.6" fill="none"/><path d="M16.6 32.2 h4.6" stroke="#8e8e8e" stroke-width="0.5"/></svg></div><div class="lb" style="left:90.23px;top:507.90px">72</div><div class="th" style="left:165.66px;top:467.50px"><svg width="48" height="34" viewBox="0 0 48 34"><rect width="48" height="34" rx="1.2" fill="#ffffff"/><rect x="0.8" y="1.0" width="4.6" height="1.0" fill="#3a3a3a"/><rect x="43.2" y="1.1" width="3.8" height="0.9" fill="#c83a36"/><path d="M6.6 3.6 v26 M40.8 4.4 v24" stroke="#cfcfcf" stroke-width="0.4" stroke-dasharray="0.8 1.2" fill="none"/><path d="M5.8 8 h1.6 M5.8 14 h1.6 M5.8 20 h1.6 M5.8 26 h1.6 M40 10 h1.6 M40 17 h1.6 M40 24 h1.6" stroke="#d0d0d0" stroke-width="0.4"/><path d="M9.9 32 h29.0" stroke="#d4d4d4" stroke-width="0.45" stroke-dasharray="2 0.8"/><path d="M42.6 29.2 h3.2 M42.6 31 h3.2 M2.2 31 h4.4" stroke="#c8c8c8" stroke-width="0.45"/><rect x="27.4" y="2.5" width="9.0" height="24.5" fill="#a0a0a0"/><rect x="11.9" y="2.5" width="25.0" height="29.5" fill="none" stroke="#2e2e2e" stroke-width="0.75" stroke-dasharray="1.8 2.6 0.9 3.2 3 2.2"/><rect x="11.9" y="2.5" width="25.0" height="29.5" fill="none" stroke="#7c7c7c" stroke-width="0.35"/><path d="M22.4 2.5 v10.6 M11.9 13.1 h18.0 M29.9 13.1 v18.9 M22.4 22.0 h7.5 M11.9 22.0 h6.2" fill="none" stroke="#2e2e2e" stroke-width="0.5" stroke-dasharray="3 1.2 1.6 0.8"/><path d="M12.9 8.4 h7.5 M16.9 13.1 v8.8 M22.4 27.6 h10.0" fill="none" stroke="#7c7c7c" stroke-width="0.35"/><path d="M14.4 10 L13.6 27 L11.4 27 z" fill="#e0352f"/></svg></div><div class="lb" style="left:162.56px;top:507.90px">73</div><div class="th" style="left:237.99px;top:467.50px"><svg width="48" height="34" viewBox="0 0 48 34"><rect width="48" height="34" rx="1.2" fill="#000"/><defs><linearGradient id="g11" x1="0" y1="0" x2="1" y2="0"><stop offset="0" stop-color="#6f6657"/><stop offset="0.3" stop-color="#c8c0b0"/><stop offset="0.6" stop-color="#a59d8e"/><stop offset="1" stop-color="#5d564b"/></linearGradient></defs><rect x="0" y="10" width="38" height="14.6" fill="url(#g11)"/><rect x="0" y="10" width="38" height="2" fill="#4a443b"/><rect x="3" y="13" width="7" height="8" fill="#9fb0ba"/><rect x="20" y="14" width="9" height="6" fill="#e9e6e0"/><rect x="30" y="13" width="6" height="8" fill="#7a8e98"/><rect x="0" y="21.6" width="38" height="3" fill="#746a5c"/><rect x="39" y="10" width="9" height="14.6" fill="#b7c7d2"/><path d="M39 18 h9 v6.6 h-9z" fill="#8a7f6c"/><path d="M41 10 v8" stroke="#5c6064" stroke-width="0.6"/><rect x="44.2" y="1.2" width="2.8" height="0.9" fill="#ddd"/></svg></div><div class="lb" style="left:234.89px;top:507.90px">74</div><div class="th" style="left:310.32px;top:467.50px"><svg width="48" height="34" viewBox="0 0 48 34"><rect width="48" height="34" rx="1.2" fill="#ffffff"/><rect x="0.8" y="1.0" width="4.6" height="1.0" fill="#3a3a3a"/><rect x="43.2" y="1.1" width="3.8" height="0.9" fill="#c83a36"/><path d="M6.6 3.6 v26 M40.8 4.4 v24" stroke="#cfcfcf" stroke-width="0.4" stroke-dasharray="0.8 1.2" fill="none"/><path d="M5.8 8 h1.6 M5.8 14 h1.6 M5.8 20 h1.6 M5.8 26 h1.6 M40 10 h1.6 M40 17 h1.6 M40 24 h1.6" stroke="#d0d0d0" stroke-width="0.4"/><path d="M9.3 32 h29.5" stroke="#d4d4d4" stroke-width="0.45" stroke-dasharray="2 0.8"/><path d="M42.6 29.2 h3.2 M42.6 31 h3.2 M2.2 31 h4.4" stroke="#c8c8c8" stroke-width="0.45"/><rect x="28.0" y="2.5" width="8.8" height="24.5" fill="#a0a0a0"/><rect x="11.3" y="2.5" width="25.5" height="29.5" fill="none" stroke="#2e2e2e" stroke-width="0.75" stroke-dasharray="1.8 2.6 0.9 3.2 3 2.2"/><rect x="11.3" y="2.5" width="25.5" height="29.5" fill="none" stroke="#7c7c7c" stroke-width="0.35"/><path d="M22.0 2.5 v10.6 M11.3 13.1 h18.4 M29.7 13.1 v18.9 M22.0 22.0 h7.6 M11.3 22.0 h6.4" fill="none" stroke="#2e2e2e" stroke-width="0.5" stroke-dasharray="3 1.2 1.6 0.8"/><path d="M12.3 8.4 h7.6 M16.4 13.1 v8.8 M22.0 27.6 h10.2" fill="none" stroke="#7c7c7c" stroke-width="0.35"/><path d="M23.6 13.3 l0.8 10 h-1.6z" fill="#e0352f"/></svg></div><div class="lb" style="left:307.22px;top:507.90px">75</div><div class="th" style="left:382.65px;top:467.50px"><svg width="48" height="34" viewBox="0 0 48 34"><rect width="48" height="34" rx="1.2" fill="#000"/><defs><linearGradient id="g12" x1="0" y1="0" x2="1" y2="0"><stop offset="0" stop-color="#8b7c66"/><stop offset="0.25" stop-color="#d6d0c4"/><stop offset="0.6" stop-color="#bdb5a6"/><stop offset="1" stop-color="#6a5e4e"/></linearGradient></defs><rect x="0" y="9" width="48" height="17" fill="url(#g12)"/><rect x="0" y="9" width="48" height="2.2" fill="#e8e5de"/><rect x="0" y="11" width="7" height="12" fill="#7fa0b6"/><path d="M3.4 11 v12" stroke="#4c4a44" stroke-width="0.6"/><rect x="12" y="17" width="10" height="4" fill="#8b7b64"/><rect x="27" y="13" width="9" height="8" fill="#5d6a72"/><rect x="28.6" y="14.4" width="6" height="5" fill="#c8d2d8"/><rect x="40" y="11" width="8" height="13" fill="#84705a"/><rect x="0" y="22.6" width="48" height="3.4" fill="#9a8f7e"/><rect x="44.2" y="1.2" width="2.8" height="0.9" fill="#ddd"/></svg></div><div class="lb" style="left:379.55px;top:507.90px">76</div><div class="th" style="left:454.98px;top:467.50px"><svg width="48" height="34" viewBox="0 0 48 34"><rect width="48" height="34" rx="1.2" fill="#ffffff"/><rect x="0.8" y="1.0" width="4.6" height="1.0" fill="#3a3a3a"/><rect x="43.2" y="1.1" width="3.8" height="0.9" fill="#c83a36"/><path d="M6.6 3.6 v26 M40.8 4.4 v24" stroke="#cfcfcf" stroke-width="0.4" stroke-dasharray="0.8 1.2" fill="none"/><path d="M5.8 8 h1.6 M5.8 14 h1.6 M5.8 20 h1.6 M5.8 26 h1.6 M40 10 h1.6 M40 17 h1.6 M40 24 h1.6" stroke="#d0d0d0" stroke-width="0.4"/><path d="M7.2 32 h31.0" stroke="#d4d4d4" stroke-width="0.45" stroke-dasharray="2 0.8"/><path d="M42.6 29.2 h3.2 M42.6 31 h3.2 M2.2 31 h4.4" stroke="#c8c8c8" stroke-width="0.45"/><rect x="26.8" y="2.5" width="9.4" height="22.5" fill="#a0a0a0"/><rect x="9.2" y="2.5" width="27.0" height="28.0" fill="none" stroke="#2e2e2e" stroke-width="0.75" stroke-dasharray="1.8 2.6 0.9 3.2 3 2.2"/><rect x="9.2" y="2.5" width="27.0" height="28.0" fill="none" stroke="#7c7c7c" stroke-width="0.35"/><path d="M20.5 2.5 v10.1 M9.2 12.6 h19.4 M28.6 12.6 v17.9 M20.5 21.0 h8.1 M9.2 21.0 h6.8" fill="none" stroke="#2e2e2e" stroke-width="0.5" stroke-dasharray="3 1.2 1.6 0.8"/><path d="M10.2 8.1 h8.1 M14.6 12.6 v8.4 M20.5 26.3 h10.8" fill="none" stroke="#7c7c7c" stroke-width="0.35"/><path d="M10.6 9.8 c2.4-1.8 7-1.8 9.4 0 v0.8 h-9.4z" fill="#e0352f"/></svg></div><div class="lb" style="left:451.88px;top:507.90px">77</div><div class="th" style="left:527.31px;top:467.50px"><svg width="48" height="34" viewBox="0 0 48 34"><rect width="48" height="34" rx="1.2" fill="#000"/><defs><linearGradient id="g13" x1="0" y1="0" x2="1" y2="0"><stop offset="0" stop-color="#6f6250"/><stop offset="0.3" stop-color="#cfc8ba"/><stop offset="0.7" stop-color="#c2bbad"/><stop offset="1" stop-color="#4a3f33"/></linearGradient></defs><rect x="0" y="3.4" width="48" height="27" fill="url(#g13)"/><path d="M0 3.4 h48 v4 l-12 4 h-24 l-12-4z" fill="#e3dfd5"/><rect x="0" y="7" width="8" height="19" fill="#85745c"/><rect x="38" y="7" width="10" height="20" fill="#5a4c3c"/><rect x="40" y="13" width="3" height="6" fill="#2a241e"/><rect x="17" y="11.4" width="14" height="10" fill="#a9c0cf"/><path d="M24 11.4 v10" stroke="#5a5a58" stroke-width="0.6"/><rect x="17" y="17" width="14" height="4.4" fill="#7f9a86"/><rect x="13" y="22" width="22" height="3" fill="#2c2a28"/><path d="M15 25 v3 M19 25 v3 M23 25 v3 M27 25 v3 M31 25 v3" stroke="#2c2a28" stroke-width="1.4"/><rect x="0" y="27" width="48" height="3.4" fill="#cbc5b8"/><rect x="43.4" y="1.2" width="3.4" height="0.9" fill="#b8322e"/></svg></div><div class="lb" style="left:524.21px;top:507.90px">78</div><div class="th" style="left:599.64px;top:467.50px"><svg width="48" height="34" viewBox="0 0 48 34"><rect width="48" height="34" rx="1.2" fill="#ffffff"/><rect x="0.8" y="1.0" width="4.6" height="1.0" fill="#3a3a3a"/><rect x="43.2" y="1.1" width="3.8" height="0.9" fill="#c83a36"/><path d="M6.6 3.6 v26 M40.8 4.4 v24" stroke="#cfcfcf" stroke-width="0.4" stroke-dasharray="0.8 1.2" fill="none"/><path d="M5.8 8 h1.6 M5.8 14 h1.6 M5.8 20 h1.6 M5.8 26 h1.6 M40 10 h1.6 M40 17 h1.6 M40 24 h1.6" stroke="#d0d0d0" stroke-width="0.4"/><path d="M7.9 32 h31.7" stroke="#d4d4d4" stroke-width="0.45" stroke-dasharray="2 0.8"/><path d="M42.6 29.2 h3.2 M42.6 31 h3.2 M2.2 31 h4.4" stroke="#c8c8c8" stroke-width="0.45"/><rect x="29.0" y="2.5" width="8.6" height="23.5" fill="#a0a0a0"/><rect x="9.9" y="2.5" width="27.7" height="28.0" fill="none" stroke="#2e2e2e" stroke-width="0.75" stroke-dasharray="1.8 2.6 0.9 3.2 3 2.2"/><rect x="9.9" y="2.5" width="27.7" height="28.0" fill="none" stroke="#7c7c7c" stroke-width="0.35"/><path d="M21.5 2.5 v10.1 M9.9 12.6 h19.9 M29.8 12.6 v17.9 M21.5 21.0 h8.3 M9.9 21.0 h6.9" fill="none" stroke="#2e2e2e" stroke-width="0.5" stroke-dasharray="3 1.2 1.6 0.8"/><path d="M10.9 8.1 h8.3 M15.4 12.6 v8.4 M21.5 26.3 h11.1" fill="none" stroke="#7c7c7c" stroke-width="0.35"/><path d="M16.2 13 l0.7 13.6 h-1.6z" fill="#e0352f"/></svg></div><div class="lb" style="left:596.54px;top:507.90px">79</div><div class="th" style="left:671.97px;top:467.50px"><svg width="48" height="34" viewBox="0 0 48 34"><rect width="48" height="34" rx="1.2" fill="#000"/><defs><linearGradient id="g14" x1="0" y1="0" x2="0" y2="1"><stop offset="0" stop-color="#a89b88"/><stop offset="0.4" stop-color="#d4ccbd"/><stop offset="1" stop-color="#8c7f6c"/></linearGradient></defs><rect x="0" y="3" width="31" height="28" fill="url(#g14)"/><path d="M0 3 h31 v4 l-6 3 h-19 l-6-3z" fill="#e9e4da"/><rect x="7" y="11" width="18" height="9" fill="#7b6a56"/><rect x="9" y="18" width="14" height="5" fill="#ece8e0"/><rect x="9" y="21" width="14" height="3" fill="#b9ad98"/><rect x="0" y="8" width="4" height="18" fill="#5c5043"/><rect x="0" y="26" width="31" height="5" fill="#c7bfb0"/><rect x="31" y="3" width="17" height="28" fill="#1e2226"/><rect x="33" y="6" width="14" height="15" fill="#86a9c6"/><rect x="33" y="17" width="14" height="5" fill="#a9b9c2"/><path d="M31 3 v28 M38 5 v18" stroke="#15171a" stroke-width="1.2"/><rect x="31" y="23" width="17" height="8" fill="#3b3834"/><rect x="43.4" y="1.2" width="3.4" height="0.9" fill="#b8322e"/></svg></div><div class="lb" style="left:668.87px;top:507.90px">80</div><div class="th" style="left:21.00px;top:525.77px"><svg width="48" height="34" viewBox="0 0 48 34"><rect width="48" height="34" rx="1.2" fill="#ffffff"/><rect x="0.8" y="1.0" width="4.6" height="1.0" fill="#3a3a3a"/><rect x="43.2" y="1.1" width="3.8" height="0.9" fill="#c83a36"/><path d="M6.6 3.6 v26 M40.8 4.4 v24" stroke="#cfcfcf" stroke-width="0.4" stroke-dasharray="0.8 1.2" fill="none"/><path d="M5.8 8 h1.6 M5.8 14 h1.6 M5.8 20 h1.6 M5.8 26 h1.6 M40 10 h1.6 M40 17 h1.6 M40 24 h1.6" stroke="#d0d0d0" stroke-width="0.4"/><path d="M8.7 32 h29.0" stroke="#d4d4d4" stroke-width="0.45" stroke-dasharray="2 0.8"/><path d="M42.6 29.2 h3.2 M42.6 31 h3.2 M2.2 31 h4.4" stroke="#c8c8c8" stroke-width="0.45"/><rect x="27.2" y="3.2" width="8.5" height="27.5" fill="#979797"/><rect x="10.7" y="3.0" width="25.0" height="28.0" fill="none" stroke="#2e2e2e" stroke-width="0.75" stroke-dasharray="1.8 2.6 0.9 3.2 3 2.2"/><rect x="10.7" y="3.0" width="25.0" height="28.0" fill="none" stroke="#7c7c7c" stroke-width="0.35"/><path d="M21.2 3.0 v10.1 M10.7 13.1 h18.0 M28.7 13.1 v17.9 M21.2 21.5 h7.5 M10.7 21.5 h6.2" fill="none" stroke="#2e2e2e" stroke-width="0.5" stroke-dasharray="3 1.2 1.6 0.8"/><path d="M11.7 8.6 h7.5 M15.7 13.1 v8.4 M21.2 26.8 h10.0" fill="none" stroke="#7c7c7c" stroke-width="0.35"/><path d="M14.6 9 L14.4 26 L12 26 z" fill="#e0352f"/></svg></div><div class="lb" style="left:17.90px;top:566.17px">81</div><div class="th" style="left:93.33px;top:525.77px"><svg width="48" height="34" viewBox="0 0 48 34"><rect width="48" height="34" rx="1.2" fill="#000"/><rect x="0" y="5.7" width="48" height="23.7" fill="#b4ac9c"/><rect x="0" y="5.7" width="48" height="3.2" fill="#3a3228"/><path d="M4 8.4 h40" stroke="#e8dcc0" stroke-width="0.5"/><rect x="0.6" y="9" width="20.6" height="17.6" fill="#6a6254"/><path d="M1 13.4 h20 M1 18 h20 M1 22.4 h20 M7.4 9 v17.6 M14.4 9 v17.6" stroke="#d2c8b2" stroke-width="0.7"/><rect x="2" y="10" width="4" height="3" fill="#d8ceb8"/><rect x="8.6" y="10" width="4.6" height="3" fill="#2e2a24"/><rect x="15.4" y="10" width="4.6" height="3" fill="#cfc4ac"/><rect x="2" y="14.4" width="4" height="3" fill="#3a342c"/><rect x="8.6" y="14.4" width="4.6" height="3" fill="#4a4238"/><rect x="15.4" y="14.4" width="4.6" height="3" fill="#8c8270"/><rect x="2" y="19" width="4" height="3" fill="#cfc6b2"/><rect x="8.6" y="19" width="4.6" height="3" fill="#bdb29c"/><rect x="15.4" y="19" width="4.6" height="3" fill="#40392f"/><rect x="21.2" y="9" width="1.2" height="18" fill="#e2dccc"/><rect x="22.4" y="9" width="18" height="17.6" fill="#cfc8b8"/><rect x="24.4" y="12" width="4.6" height="12" fill="#ddd8cc"/><rect x="30" y="12.4" width="4.4" height="11.6" fill="#9eb0ba"/><rect x="30.6" y="18" width="3.2" height="3" fill="#e6e4dc"/><rect x="36" y="12" width="3.4" height="12" fill="#b8ae9a"/><rect x="40.4" y="9" width="4" height="18" fill="#9c927e"/><rect x="44.4" y="5.7" width="3.6" height="23.7" fill="#3a342c"/><rect x="0" y="26.6" width="44.4" height="2.8" fill="#a09684"/><rect x="22" y="26.2" width="14" height="1.6" fill="#d8d2c4"/><rect x="44.2" y="1.2" width="2.8" height="0.9" fill="#ddd"/></svg></div><div class="lb" style="left:90.23px;top:566.17px">82</div><div class="th" style="left:165.66px;top:525.77px"><svg width="48" height="34" viewBox="0 0 48 34"><rect width="48" height="34" rx="1.2" fill="#ffffff"/><rect x="0.8" y="1.0" width="4.6" height="1.0" fill="#3a3a3a"/><rect x="43.2" y="1.1" width="3.8" height="0.9" fill="#c83a36"/><path d="M6.6 3.6 v26 M40.8 4.4 v24" stroke="#cfcfcf" stroke-width="0.4" stroke-dasharray="0.8 1.2" fill="none"/><path d="M5.8 8 h1.6 M5.8 14 h1.6 M5.8 20 h1.6 M5.8 26 h1.6 M40 10 h1.6 M40 17 h1.6 M40 24 h1.6" stroke="#d0d0d0" stroke-width="0.4"/><path d="M12.2 32 h26.6" stroke="#d4d4d4" stroke-width="0.45" stroke-dasharray="2 0.8"/><path d="M42.6 29.2 h3.2 M42.6 31 h3.2 M2.2 31 h4.4" stroke="#c8c8c8" stroke-width="0.45"/><rect x="23.3" y="22.9" width="13.5" height="10.1" fill="#a0a0a0"/><rect x="31.8" y="14.0" width="5.0" height="19.0" fill="#b6b6b6"/><rect x="14.2" y="9.4" width="22.6" height="23.6" fill="none" stroke="#2e2e2e" stroke-width="0.75" stroke-dasharray="1.8 2.6 0.9 3.2 3 2.2"/><rect x="14.2" y="9.4" width="22.6" height="23.6" fill="none" stroke="#7c7c7c" stroke-width="0.35"/><path d="M23.7 9.4 v8.5 M14.2 17.9 h16.3 M30.5 17.9 v15.1 M23.7 25.0 h6.8 M14.2 25.0 h5.7" fill="none" stroke="#2e2e2e" stroke-width="0.5" stroke-dasharray="3 1.2 1.6 0.8"/><path d="M15.2 14.1 h6.8 M18.7 17.9 v7.1 M23.7 29.5 h9.0" fill="none" stroke="#7c7c7c" stroke-width="0.35"/><path d="M18.2 11 L19.4 31.4 L16.2 31.4 z" fill="#e2504a" opacity="0.9"/></svg></div><div class="lb" style="left:162.56px;top:566.17px">83</div><div class="th" style="left:237.99px;top:525.77px"><svg width="48" height="34" viewBox="0 0 48 34"><rect width="48" height="34" rx="1.2" fill="#ffffff"/><rect x="0.8" y="1.0" width="4.6" height="1.0" fill="#3a3a3a"/><rect x="43.2" y="1.1" width="3.8" height="0.9" fill="#c83a36"/><path d="M6.6 3.6 v26 M40.8 4.4 v24" stroke="#cfcfcf" stroke-width="0.4" stroke-dasharray="0.8 1.2" fill="none"/><path d="M5.8 8 h1.6 M5.8 14 h1.6 M5.8 20 h1.6 M5.8 26 h1.6 M40 10 h1.6 M40 17 h1.6 M40 24 h1.6" stroke="#d0d0d0" stroke-width="0.4"/><path d="M12.2 32 h27.0" stroke="#d4d4d4" stroke-width="0.45" stroke-dasharray="2 0.8"/><path d="M42.6 29.2 h3.2 M42.6 31 h3.2 M2.2 31 h4.4" stroke="#c8c8c8" stroke-width="0.45"/><rect x="24.0" y="22.9" width="13.2" height="10.1" fill="#a0a0a0"/><rect x="32.0" y="14.0" width="5.2" height="19.0" fill="#b6b6b6"/><rect x="14.2" y="9.4" width="23.0" height="23.6" fill="none" stroke="#2e2e2e" stroke-width="0.75" stroke-dasharray="1.8 2.6 0.9 3.2 3 2.2"/><rect x="14.2" y="9.4" width="23.0" height="23.6" fill="none" stroke="#7c7c7c" stroke-width="0.35"/><path d="M23.9 9.4 v8.5 M14.2 17.9 h16.6 M30.8 17.9 v15.1 M23.9 25.0 h6.9 M14.2 25.0 h5.8" fill="none" stroke="#2e2e2e" stroke-width="0.5" stroke-dasharray="3 1.2 1.6 0.8"/><path d="M15.2 14.1 h6.9 M18.8 17.9 v7.1 M23.9 29.5 h9.2" fill="none" stroke="#7c7c7c" stroke-width="0.35"/><path d="M19.4 11 L20.6 31.4 L17.4 31.4 z" fill="#e2504a" opacity="0.9"/></svg></div><div class="lb" style="left:234.89px;top:566.17px">84</div><div class="th" style="left:310.32px;top:525.77px"><svg width="48" height="34" viewBox="0 0 48 34"><rect width="48" height="34" rx="1.2" fill="#000"/><rect x="0" y="4.5" width="48" height="26.1" fill="#d6d8da"/><path d="M0 4.5 h48 v2 l-20 3 h-12 l-16-2z" fill="#eceeef"/><path d="M8 4.5 l6 8 M34 4.5 l-4 6" stroke="#b4b8bc" stroke-width="0.6"/><rect x="0" y="8" width="6" height="8" fill="#4a4d52"/><rect x="8" y="11" width="10" height="5" fill="#34373c"/><rect x="18.6" y="12" width="3" height="4" fill="#e4e6e8"/><rect x="22" y="11.6" width="5" height="4.4" fill="#6c7076"/><rect x="23" y="12.6" width="3" height="2.4" fill="#c8ccd0"/><rect x="0" y="16" width="34" height="1.9" fill="#141517"/><rect x="28" y="7" width="1.4" height="23" fill="#b9bcc0"/><path d="M0 18 h12 v12.6 h-12z" fill="#2c2e32"/><path d="M1 29 l10-9 M1 26.6 l8-7.4" stroke="#dfe1e4" stroke-width="0.9"/><rect x="12" y="18" width="16" height="10" fill="#c2c5c8"/><rect x="14" y="24" width="3.4" height="4" fill="#4c5cc0"/><rect x="19" y="19" width="4" height="8" fill="#e6e8ea"/><rect x="24" y="20" width="3" height="7" fill="#8a8e94"/><rect x="31" y="23" width="8.4" height="6" fill="#18191b"/><rect x="30" y="19" width="10" height="4" fill="#eceeef"/><rect x="41" y="17.6" width="7" height="12.4" fill="#232427"/><path d="M42 20 h5 M42 23 h5 M42 26 h5" stroke="#c4c8cc" stroke-width="0.7"/><rect x="0" y="28.4" width="48" height="2.2" fill="#5c5f64"/><rect x="12" y="27.6" width="18" height="1.4" fill="#e0e2e4"/><rect x="44.2" y="1.2" width="2.8" height="0.9" fill="#ddd"/></svg></div><div class="lb" style="left:307.22px;top:566.17px">85</div><div class="th" style="left:382.65px;top:525.77px"><svg width="48" height="34" viewBox="0 0 48 34"><rect width="48" height="34" rx="1.2" fill="#ffffff"/><rect x="0.8" y="1.0" width="4.6" height="1.0" fill="#3a3a3a"/><rect x="43.2" y="1.1" width="3.8" height="0.9" fill="#c83a36"/><path d="M6.6 3.6 v26 M40.8 4.4 v24" stroke="#cfcfcf" stroke-width="0.4" stroke-dasharray="0.8 1.2" fill="none"/><path d="M5.8 8 h1.6 M5.8 14 h1.6 M5.8 20 h1.6 M5.8 26 h1.6 M40 10 h1.6 M40 17 h1.6 M40 24 h1.6" stroke="#d0d0d0" stroke-width="0.4"/><path d="M13.0 32 h26.0" stroke="#d4d4d4" stroke-width="0.45" stroke-dasharray="2 0.8"/><path d="M42.6 29.2 h3.2 M42.6 31 h3.2 M2.2 31 h4.4" stroke="#c8c8c8" stroke-width="0.45"/><rect x="25.0" y="23.0" width="12.0" height="10.0" fill="#a0a0a0"/><rect x="32.0" y="14.0" width="5.0" height="9.0" fill="#b6b6b6"/><rect x="15.0" y="9.4" width="22.0" height="23.6" fill="none" stroke="#2e2e2e" stroke-width="0.75" stroke-dasharray="1.8 2.6 0.9 3.2 3 2.2"/><rect x="15.0" y="9.4" width="22.0" height="23.6" fill="none" stroke="#7c7c7c" stroke-width="0.35"/><path d="M24.2 9.4 v8.5 M15.0 17.9 h15.8 M30.8 17.9 v15.1 M24.2 25.0 h6.6 M15.0 25.0 h5.5" fill="none" stroke="#2e2e2e" stroke-width="0.5" stroke-dasharray="3 1.2 1.6 0.8"/><path d="M16.0 14.1 h6.6 M19.4 17.9 v7.1 M24.2 29.5 h8.8" fill="none" stroke="#7c7c7c" stroke-width="0.35"/><path d="M15.7 27.3 h7.7 l-3.85 3.4 z" fill="#e0352f"/></svg></div><div class="lb" style="left:379.55px;top:566.17px">86</div><div class="th" style="left:454.98px;top:525.77px"><svg width="48" height="34" viewBox="0 0 48 34"><rect width="48" height="34" rx="1.2" fill="#ffffff"/><rect x="0.8" y="1.0" width="4.6" height="1.0" fill="#3a3a3a"/><rect x="43.2" y="1.1" width="3.8" height="0.9" fill="#c83a36"/><path d="M6.6 3.6 v26 M40.8 4.4 v24" stroke="#cfcfcf" stroke-width="0.4" stroke-dasharray="0.8 1.2" fill="none"/><path d="M5.8 8 h1.6 M5.8 14 h1.6 M5.8 20 h1.6 M5.8 26 h1.6 M40 10 h1.6 M40 17 h1.6 M40 24 h1.6" stroke="#d0d0d0" stroke-width="0.4"/><path d="M12.2 32 h27.0" stroke="#d4d4d4" stroke-width="0.45" stroke-dasharray="2 0.8"/><path d="M42.6 29.2 h3.2 M42.6 31 h3.2 M2.2 31 h4.4" stroke="#c8c8c8" stroke-width="0.45"/><rect x="25.0" y="23.0" width="12.2" height="10.0" fill="#a0a0a0"/><rect x="32.2" y="14.0" width="5.0" height="9.0" fill="#b6b6b6"/><rect x="14.2" y="9.4" width="23.0" height="23.6" fill="none" stroke="#2e2e2e" stroke-width="0.75" stroke-dasharray="1.8 2.6 0.9 3.2 3 2.2"/><rect x="14.2" y="9.4" width="23.0" height="23.6" fill="none" stroke="#7c7c7c" stroke-width="0.35"/><path d="M23.9 9.4 v8.5 M14.2 17.9 h16.6 M30.8 17.9 v15.1 M23.9 25.0 h6.9 M14.2 25.0 h5.8" fill="none" stroke="#2e2e2e" stroke-width="0.5" stroke-dasharray="3 1.2 1.6 0.8"/><path d="M15.2 14.1 h6.9 M18.8 17.9 v7.1 M23.9 29.5 h9.2" fill="none" stroke="#7c7c7c" stroke-width="0.35"/><path d="M15.9 27.3 h7.7 l-3.85 3.4 z" fill="#e0352f"/></svg></div><div class="lb" style="left:451.88px;top:566.17px">87</div><div class="th" style="left:527.31px;top:525.77px"><svg width="48" height="34" viewBox="0 0 48 34"><rect width="48" height="34" rx="1.2" fill="#000"/><defs><linearGradient id="g15" x1="0" y1="0" x2="0" y2="1"><stop offset="0" stop-color="#e6e8ea"/><stop offset="0.5" stop-color="#c6c9cc"/><stop offset="1" stop-color="#a4a8ac"/></linearGradient></defs><rect x="0" y="0" width="33" height="34" fill="url(#g15)"/><path d="M0 0 h33 v3 l-10 5 h-12 l-11-5z" fill="#f3f4f5"/><rect x="10" y="8" width="6" height="15" fill="#3e4248"/><rect x="11" y="9.6" width="4" height="9" fill="#1c1f23"/><rect x="16" y="12" width="8" height="9" fill="#b9bcc0"/><rect x="17" y="15" width="6" height="3" fill="#55585e"/><rect x="25" y="15" width="7" height="14" fill="#2a2d32"/><rect x="0" y="5" width="4.6" height="22" fill="#eceef0"/><rect x="4.2" y="16" width="1.8" height="9" fill="#2a3a7a"/><path d="M0 27 l11-5 h12 l10 7 v5 h-33z" fill="#d9dadc"/><path d="M6 34 c-0.6-4 1-6.4 3-7.4 c1.6 2 2.4 4.6 1.6 7.4z" fill="#4a6844"/><path d="M17 31 c0-3 1.4-5 3-5.6 c1.4 1.4 2 3.6 1.6 5.6z" fill="#55705a"/><rect x="33" y="0" width="15" height="34" fill="#000"/><rect x="44.2" y="1.2" width="2.8" height="0.9" fill="#ddd"/></svg></div><div class="lb" style="left:524.21px;top:566.17px">88</div><div class="th" style="left:599.64px;top:525.77px"><svg width="48" height="34" viewBox="0 0 48 34"><rect width="48" height="34" rx="1.2" fill="#000"/><path d="M16 0 V15.3 H23.6 V34" stroke="#e2e2e2" stroke-width="0.6" fill="none"/><path d="M16.8 12.7 h4.2" stroke="#c4c4c4" stroke-width="0.5" fill="none"/></svg></div><div class="lb" style="left:596.54px;top:566.17px">89</div><div class="abs" style="left:658px;top:522px;width:3px;height:43px"><svg width="3" height="43" viewBox="0 0 3 43"><path d="M1.5 0.5 v42" stroke="#b8602c" stroke-width="1"/><path d="M0.3 0.5 h2.4 M0.3 42.5 h2.4" stroke="#b8602c" stroke-width="0.9"/></svg></div><div class="abs" style="left:784.6px;top:139px;width:4.8px;height:431px;background:#d1d1d1;border-radius:2.4px"></div><div class="abs" style="left:783px;top:90px;width:9px;height:8px"><svg width="9" height="8" viewBox="0 0 9 8"><path d="M2.6 5.6 l1.9-2.6 l1.9 2.6z" fill="#555"/></svg></div><div class="abs" style="left:783px;top:580px;width:9px;height:8px"><svg width="9" height="8" viewBox="0 0 9 8"><path d="M2.6 2.6 l1.9 2.6 l1.9-2.6z" fill="#555"/></svg></div>
<div class="abs" style="left:0;top:40px;width:824px;height:52px;overflow:visible;"><svg width="824" height="52" viewBox="0 40 824 52" style="overflow:visible"><defs><filter id="sh" x="-2%" y="-10%" width="104%" height="130%"><feGaussianBlur stdDeviation="1.2"/></filter></defs><rect x="4.5" y="44" width="813.5" height="45" rx="4" fill="#000" opacity="0.10" filter="url(#sh)"/><rect x="4" y="42.3" width="814.5" height="45.8" rx="4" fill="#ffffff" stroke="#d6d6d6" stroke-width="0.6"/><path d="M91.2 46.5 v37" stroke="#e6e6e6" stroke-width="0.8"/><path d="M142.5 46.5 v37" stroke="#e6e6e6" stroke-width="0.8"/><path d="M264.5 46.5 v37" stroke="#e6e6e6" stroke-width="0.8"/><path d="M456.2 46.5 v37" stroke="#e6e6e6" stroke-width="0.8"/><path d="M635.5 46.5 v37" stroke="#e6e6e6" stroke-width="0.8"/><path d="M761.8 46.5 v37" stroke="#e6e6e6" stroke-width="0.8"/><path d="M550.7 51 v11" stroke="#d8d8d8" stroke-width="0.8"/><path d="M23.4 57.4 v-2.7 h4.2 v-2.6 a1.2 1.2 0 0 1 2.4 0 v2.6 h4.2 v2.7 z M23.8 57.6 v5 h10 v-5 M31.6 62.6 v-2.4" fill="none" stroke="#adadad" stroke-width="0.85" stroke-linejoin="round"/><text x="17.6" y="75.95" font-size="7.3" fill="#a8a8a8">格式刷</text><path d="M54.4 53.4 h-2.6 v9.4 h5 M59.6 53.4 h2.4 v2.6 M54.4 52.4 h5.2 v2 h-5.2 z M58 56.6 h4.6 v6.2 h-4.6 z" fill="none" stroke="#adadad" stroke-width="0.85" stroke-linejoin="round"/><text x="47.4" y="75.95" font-size="7.3" fill="#a8a8a8">粘贴</text><path d="M63.30 72.95 h3.00 l-1.50 1.70 z" fill="#959595"/><path d="M76 52.4 l5.6 6.4 M82.2 52.4 l-5.6 6.4" stroke="#adadad" stroke-width="0.85" stroke-linecap="round"/><circle cx="76.2" cy="60" r="1.5" fill="none" stroke="#adadad" stroke-width="0.8"/><circle cx="82" cy="60" r="1.5" fill="none" stroke="#adadad" stroke-width="0.8"/><path d="M80.6 71.4 v-2 h-5.6 v6.2 h2.2 M77.6 71.6 h6 v6 h-6 z" fill="none" stroke="#adadad" stroke-width="0.85" stroke-linejoin="round"/><path d="M86.0 82.2 l2.2 2.2 M88.4 84.6 v-1.8 M88.4 84.6 h-1.8" stroke="#8c8c8c" stroke-width="0.6" fill="none"/><circle cx="117" cy="57" r="5.6" fill="none" stroke="#2b2b2b" stroke-width="0.9"/><path d="M115.4 54.4 v5.2 l4.2-2.6 z" fill="none" stroke="#e2622a" stroke-width="0.9" stroke-linejoin="round"/><text x="99.6" y="75.95" font-size="7.3" fill="#2b2b2b">当页开始</text><path d="M129.90 72.85 h3.40 l-1.70 1.90 z" fill="#2b2b2b"/><path d="M174.4 52 h-6.6 v9.8 h10.6 v-5" fill="none" stroke="#2b2b2b" stroke-width="0.9" stroke-linejoin="round"/><path d="M169.8 54.8 h4.6 M169.8 57.4 h6.6 v2.6 h-6.6 z" fill="none" stroke="#2b2b2b" stroke-width="0.8"/><path d="M175.2 53 h4.4 M177.4 50.8 v4.4" stroke="#1fa463" stroke-width="1"/><text x="151" y="75.95" font-size="7.3" fill="#2b2b2b">新建幻灯片</text><path d="M188.90 72.85 h3.40 l-1.70 1.90 z" fill="#2b2b2b"/><rect x="205.4" y="52.2" width="11.4" height="9.8" rx="0.8" fill="none" stroke="#adadad" stroke-width="0.85"/><path d="M207.4 55 h7.4 M207.4 57.4 h4 v2.6 h-4 z" fill="none" stroke="#adadad" stroke-width="0.8"/><text x="201.2" y="75.95" font-size="7.3" fill="#a8a8a8">版式</text><path d="M217.70 72.95 h3.00 l-1.50 1.70 z" fill="#959595"/><path d="M232.6 60 h-2.8 v-7 h9.6 v3 M234.6 56.8 l4 3.6 l-1.6 0.2 l0.8 1.6" fill="none" stroke="#adadad" stroke-width="0.85" stroke-linejoin="round"/><text x="241.2" y="59.35" font-size="7.3" fill="#a8a8a8">重置</text><path d="M230 70.4 h9 v7 h-9 z M230 70.4 v-1.2 M239 70.4 v-1.2 M232 72.6 h5 M232 75 h5" fill="none" stroke="#2b2b2b" stroke-width="0.9"/><text x="241.2" y="75.95" font-size="7.3" fill="#2b2b2b">节</text><path d="M251.50 72.85 h3.40 l-1.70 1.90 z" fill="#2b2b2b"/><rect x="270" y="50" width="129" height="13" rx="2" fill="#f4f4f4"/><path d="M362.4 51.5 v10" stroke="#ffffff" stroke-width="1"/><path d="M354.70 55.80 l1.50 1.60 l1.50 -1.60" fill="none" stroke="#c4c4c4" stroke-width="0.8" stroke-linecap="round" stroke-linejoin="round"/><path d="M390.50 55.80 l1.50 1.60 l1.50 -1.60" fill="none" stroke="#c4c4c4" stroke-width="0.8" stroke-linecap="round" stroke-linejoin="round"/><text x="274.40" y="76.10" font-size="8.2" fill="#adadad" font-weight="bold" text-anchor="start" letter-spacing="0">B</text><text x="291.4" y="76.1" font-size="8.2" fill="#adadad" font-style="italic">I</text><path d="M308.6 70.2 v3.2 a2.2 2.2 0 0 0 4.4 0 v-3.2 M307.8 77.2 h6" fill="none" stroke="#adadad" stroke-width="0.85"/><path d="M325.8 75.6 l2.6-5.6 l2.6 5.6 M324.4 73.4 h8" fill="none" stroke="#adadad" stroke-width="0.85"/><path d="M325 77.4 h6.8" stroke="#adadad" stroke-width="0.6"/><text x="341.40" y="76.10" font-size="8.2" fill="#adadad" font-weight="normal" text-anchor="start" letter-spacing="0">S</text><text x="359.60" y="76.30" font-size="7.6" fill="#adadad" font-weight="normal" text-anchor="start" letter-spacing="0">X</text><text x="364.80" y="72.60" font-size="4.4" fill="#adadad" font-weight="normal" text-anchor="start" letter-spacing="0">2</text><path d="M371.10 72.95 h3.00 l-1.50 1.70 z" fill="#6a6a6a"/><path d="M385 74 l2.6-4.6 l2.6 4.6 M386 72.4 h3.2" fill="none" stroke="#adadad" stroke-width="0.85"/><rect x="383.4" y="75.4" width="8.4" height="1.9" fill="#9a9a9a"/><path d="M394.70 72.95 h3.00 l-1.50 1.70 z" fill="#6a6a6a"/><path d="M406 60 l2.8-6.8 l2.8 6.8 M407 57.6 h3.6 M411.6 53 h3 M413.1 51.5 v3" fill="none" stroke="#adadad" stroke-width="0.8"/><path d="M423.4 60 l2.8-6.8 l2.8 6.8 M424.4 57.6 h3.6 M429.4 53 h3" fill="none" stroke="#adadad" stroke-width="0.8"/><path d="M440 58.2 l4.6-4.6 l3.6 3.2 l-3.4 3.4 h-3 z M442.6 55.6 l3.4 3.2 M441.4 60.4 h7" fill="none" stroke="#adadad" stroke-width="0.8" stroke-linejoin="round"/><path d="M408.6 75 l4.8-5.4 l1.8 1.6 l-4.8 5.2 z M408.6 75 l-1 1.6 h2.6" fill="none" stroke="#adadad" stroke-width="0.8" stroke-linejoin="round"/><path d="M406.6 77.6 h9.4" stroke="#c9c9c9" stroke-width="1"/><path d="M419.70 72.95 h3.00 l-1.50 1.70 z" fill="#6a6a6a"/><text x="431.4" y="75.81" font-size="8.6" fill="#2b2b2b">变</text><path d="M431.6 77.6 c2 1.2 4 -1 5 0.2" stroke="#2b2b2b" stroke-width="0.6" fill="none"/><path d="M444.00 72.90 h3.20 l-1.60 1.80 z" fill="#2b2b2b"/><path d="M451.0 82.2 l2.2 2.2 M453.4 84.6 v-1.8 M453.4 84.6 h-1.8" stroke="#8c8c8c" stroke-width="0.6" fill="none"/><path d="M468.20 53.60 h6.60 M468.20 56.50 h6.60 M468.20 59.40 h6.60 " stroke="#adadad" stroke-width="0.8" fill="none"/><path d="M465.6 53.6 h1 M465.6 56.5 h1 M465.6 59.4 h1" stroke="#adadad" stroke-width="1"/><path d="M478.10 55.95 h3.00 l-1.50 1.70 z" fill="#959595"/><path d="M492.80 53.60 h6.60 M492.80 56.50 h6.60 M492.80 59.40 h6.60 " stroke="#adadad" stroke-width="0.8" fill="none"/><path d="M490.4 52.8 v1.8 M490 55.8 h1 M490 58.6 h1 v1.4 h-1" stroke="#adadad" stroke-width="0.6" fill="none"/><path d="M502.50 55.95 h3.00 l-1.50 1.70 z" fill="#959595"/><path d="M515.60 53.60 h8.40 M519.40 56.50 h4.60 M515.60 59.40 h8.40 " stroke="#adadad" stroke-width="0.8" fill="none"/><path d="M517.8 55.2 l-1.6 1.3 l1.6 1.3" fill="none" stroke="#adadad" stroke-width="0.7"/><path d="M532.40 53.60 h8.40 M536.20 56.50 h4.60 M532.40 59.40 h8.40 " stroke="#adadad" stroke-width="0.8" fill="none"/><path d="M533 55.2 l1.6 1.3 l-1.6 1.3" fill="none" stroke="#adadad" stroke-width="0.7"/><path d="M560 53.2 h9.4 M560 60 h9.4" stroke="#adadad" stroke-width="0.7"/><text x="560.60" y="59.00" font-size="6.6" fill="#adadad" font-weight="normal" text-anchor="start" letter-spacing="0">ab</text><path d="M572.50 55.95 h3.00 l-1.50 1.70 z" fill="#959595"/><path d="M586 52.4 v8 M584.2 58.6 l1.8 2 l1.8-2" fill="none" stroke="#2b2b2b" stroke-width="0.85"/><path d="M588.6 58.8 l2.6-6.4 l2.6 6.4 M589.6 56.6 h3.2" fill="none" stroke="#2b2b2b" stroke-width="0.85"/><path d="M589.4 60.4 a2 1.4 0 0 0 3.6 0" fill="none" stroke="#3a6fd8" stroke-width="0.8"/><path d="M596.40 55.90 h3.20 l-1.60 1.80 z" fill="#2b2b2b"/><path d="M609.6 54.6 v-2 h6 v3.6 h-2 M611.4 56.4 h6.4 v4 h-3.2 l-1.4 1.4 v-1.4 h-1.8 z" fill="none" stroke="#adadad" stroke-width="0.75" stroke-linejoin="round"/><path d="M464.60 70.30 h8.40 M464.60 73.20 h6.00 M464.60 76.10 h8.40 " stroke="#adadad" stroke-width="0.8" fill="none"/><path d="M481.40 70.30 h8.40 M482.80 73.20 h5.60 M481.40 76.10 h8.40 " stroke="#adadad" stroke-width="0.8" fill="none"/><path d="M498.60 70.30 h8.40 M501.00 73.20 h6.00 M498.60 76.10 h8.40 " stroke="#adadad" stroke-width="0.8" fill="none"/><path d="M515.60 70.30 h8.40 M515.60 73.20 h8.40 M515.60 76.10 h8.40 " stroke="#adadad" stroke-width="0.8" fill="none"/><path d="M533 69.4 v7.8 M541.6 69.4 v7.8" stroke="#adadad" stroke-width="0.8"/><path d="M535 71.4 h4.6 M535 74 h4.6 M535 76.4 h4.6" stroke="#adadad" stroke-width="0.7"/><path d="M535.6 69.8 l-0.9 0.8 l0.9 0.8 M539 69.8 l0.9 0.8 l-0.9 0.8" stroke="#adadad" stroke-width="0.5" fill="none"/><path d="M549.8 72 h8.4 M549.8 74.4 h8.4 M549.8 76.8 h8.4" stroke="#adadad" stroke-width="0.8"/><path d="M554 68.6 v2.4 M552.8 69.8 l1.2-1.3 l1.2 1.3" stroke="#adadad" stroke-width="0.6" fill="none"/><path d="M566.8 69.6 h8.4 M566.8 72 h8.4 M566.8 74.4 h8.4" stroke="#adadad" stroke-width="0.8"/><path d="M571 75.4 v2.4 M569.8 76.6 l1.2 1.3 l1.2-1.3" stroke="#adadad" stroke-width="0.6" fill="none"/><path d="M585.6 69.4 v7.8 M584.2 70.8 l1.4-1.5 l1.4 1.5 M584.2 75.8 l1.4 1.5 l1.4-1.5" stroke="#adadad" stroke-width="0.7" fill="none"/><path d="M588.60 70.30 h5.00 M588.60 73.20 h5.00 M588.60 76.10 h5.00 " stroke="#adadad" stroke-width="0.8" fill="none"/><path d="M596.50 72.75 h3.00 l-1.50 1.70 z" fill="#959595"/><path d="M609 69.6 a5 5 0 0 0 0 7.2 M618 69.6 a5 5 0 0 1 0 7.2 M610.8 71.2 h5.4 M610.8 73.2 h5.4 M610.8 75.2 h5.4" fill="none" stroke="#adadad" stroke-width="0.75"/><path d="M623.10 72.75 h3.00 l-1.50 1.70 z" fill="#959595"/><path d="M629.6 82.2 l2.2 2.2 M632.0 84.6 v-1.8 M632.0 84.6 h-1.8" stroke="#8c8c8c" stroke-width="0.6" fill="none"/><path d="M645 58.6 v-6 h6 v2.4" fill="none" stroke="#adadad" stroke-width="0.85"/><circle cx="650.6" cy="58.2" r="3.3" fill="none" stroke="#adadad" stroke-width="0.85"/><text x="657" y="59.35" font-size="7.3" fill="#a8a8a8">形状</text><path d="M674.10 56.15 h3.00 l-1.50 1.70 z" fill="#959595"/><rect x="694" y="52.6" width="10" height="8.4" rx="0.8" fill="none" stroke="#adadad" stroke-width="0.85"/><path d="M694.4 59.6 l3-3 l2.2 2 l1.6-1.4 l2.6 2.4" fill="none" stroke="#adadad" stroke-width="0.75"/><circle cx="700.8" cy="55" r="0.8" fill="#adadad"/><text x="706" y="59.35" font-size="7.3" fill="#a8a8a8">图片</text><path d="M723.50 56.15 h3.00 l-1.50 1.70 z" fill="#959595"/><path d="M738 58.4 a3.2 3.2 0 1 1 5.8 0 z M736.6 58.6 h8.8 M736.4 61 h9.2" fill="none" stroke="#adadad" stroke-width="0.8"/><rect x="736.4" y="60.4" width="9.2" height="1.6" fill="#c4c4c4"/><path d="M749.10 56.15 h3.00 l-1.50 1.70 z" fill="#959595"/><rect x="645" y="69" width="9.6" height="8.6" fill="none" stroke="#adadad" stroke-width="0.8"/><path d="M647.8 75.6 l2-4.6 l2 4.6 M648.6 74 h2.6" fill="none" stroke="#adadad" stroke-width="0.7"/><path d="M644.2 68.2 h1.6 v1.6 h-1.6 z M653.8 68.2 h1.6 v1.6 h-1.6 z M644.2 76.8 h1.6 v1.6 h-1.6 z M653.8 76.8 h1.6 v1.6 h-1.6 z" fill="#adadad"/><text x="657" y="75.95" font-size="7.3" fill="#a8a8a8">文本框</text><path d="M681.10 72.95 h3.00 l-1.50 1.70 z" fill="#959595"/><rect x="694" y="68.8" width="6" height="5.6" rx="0.8" fill="none" stroke="#2b2b2b" stroke-width="0.9"/><rect x="697.6" y="72" width="6" height="5.6" rx="0.8" fill="#ffffff" stroke="#2f5fc4" stroke-width="0.9"/><text x="706" y="75.95" font-size="7.3" fill="#2b2b2b">排列</text><path d="M723.40 72.90 h3.20 l-1.60 1.80 z" fill="#2b2b2b"/><path d="M737.6 69.4 h6.8 v5 h-6.8 z M739.2 71 h3.6" fill="none" stroke="#adadad" stroke-width="0.8"/><rect x="736.4" y="75.6" width="9.2" height="1.8" fill="#c4c4c4"/><path d="M749.10 72.95 h3.00 l-1.50 1.70 z" fill="#959595"/><path d="M756.4 82.2 l2.2 2.2 M758.8 84.6 v-1.8 M758.8 84.6 h-1.8" stroke="#8c8c8c" stroke-width="0.6" fill="none"/><circle cx="774.6" cy="55.8" r="3.4" fill="none" stroke="#2b2b2b" stroke-width="0.9"/><path d="M777.2 58.4 l3 3" stroke="#2b2b2b" stroke-width="0.95" stroke-linecap="round"/><text x="783" y="59.35" font-size="7.3" fill="#2b2b2b">查找</text><path d="M801.00 56.10 h3.20 l-1.60 1.80 z" fill="#2b2b2b"/><path d="M779.6 70.4 v-1 h-9 v3.2 h9 M770.6 74.4 h5.4 v3 h-5.4 z" fill="none" stroke="#2b2b2b" stroke-width="0.85" stroke-linejoin="round"/><path d="M777.2 73.6 l3.4 1.6 l-1.6 0.4 l-0.6 1.5 z" fill="#2f6fe0"/><text x="783" y="75.95" font-size="7.3" fill="#2b2b2b">选择</text><path d="M801.00 72.90 h3.20 l-1.60 1.80 z" fill="#2b2b2b"/></svg></div>
<div class="abs" style="left:793px;top:88px;width:31px;height:501px;background:#efefef"><svg width="31" height="501" viewBox="793 88 31 501"><path d="M793.4 88 V589" stroke="#dcdcdc" stroke-width="0.8"/><path d="M805.6 102.6 h8" stroke="#777" stroke-width="0.9"/><path d="M804.6 119.6 h10 M804.6 124.4 h10" stroke="#333" stroke-width="0.8"/><circle cx="807.6" cy="119.6" r="1.5" fill="#f0f0f0" stroke="#333" stroke-width="0.8"/><circle cx="811.8" cy="124.4" r="1.5" fill="#f0f0f0" stroke="#333" stroke-width="0.8"/><path d="M809.60 141.60 L810.95 144.94 L814.55 145.19 L811.79 147.51 L812.66 151.01 L809.60 149.10 L806.54 151.01 L807.41 147.51 L804.65 145.19 L808.25 144.94 z" fill="none" stroke="#333" stroke-width="0.8" stroke-linejoin="round"/><path d="M805 150.4 h3.6" stroke="#f0f0f0" stroke-width="1.6"/><rect x="804.8" y="166.4" width="6.4" height="6" rx="0.8" fill="none" stroke="#333" stroke-width="0.8"/><rect x="807.6" y="169.4" width="6.8" height="6.2" rx="0.8" fill="#f0f0f0" stroke="#333" stroke-width="0.8"/><path d="M806.6 175.4 l-1.4-1.2 l1.4-1.2" fill="none" stroke="#333" stroke-width="0.7"/><path d="M813.6 196 v-3.6 a1.2 1.2 0 0 0-1.2-1.2 h-5.8 a1.2 1.2 0 0 0-1.2 1.2 v5.8 a1.2 1.2 0 0 0 1.2 1.2 h2.4" fill="none" stroke="#333" stroke-width="0.8"/><path d="M807.2 197.2 l1.6-3 l1.4 2 M811.6 194.6 v4.6 M810 197.8 l1.6 1.8 l1.6-1.8" fill="none" stroke="#333" stroke-width="0.7"/><path d="M805.6 223 l6-6 M811 215.4 l2.6 2.6 M806.2 215.6 l2 2 M811.6 221.4 l2 2" fill="none" stroke="#333" stroke-width="0.9" stroke-linecap="round"/><circle cx="813" cy="222.8" r="0.8" fill="#333"/><path d="M809.4 247 v-7 l-4-1 v7.4 l4 1.2 M809.4 240 l4-1 v3" fill="none" stroke="#333" stroke-width="0.8" stroke-linejoin="round"/><circle cx="812.2" cy="245" r="1.7" fill="none" stroke="#333" stroke-width="0.7"/><path d="M813.4 246.4 l1.2 1.2" stroke="#333" stroke-width="0.7"/><circle cx="809.6" cy="267.8" r="4.8" fill="none" stroke="#333" stroke-width="0.8"/><path d="M808 266.4 a1.7 1.7 0 1 1 2.4 1.5 c-0.6 0.3-0.8 0.6-0.8 1.3" fill="none" stroke="#333" stroke-width="0.8"/><circle cx="809.6" cy="270.8" r="0.5" fill="#333"/><path d="M807 287.6 l-2.4 1.8 l1.2 2 l1.2-0.6 v5.4 h5.2 v-5.4 l1.2 0.6 l1.2-2 l-2.4-1.8 a1.6 1.4 0 0 1-3.2 0z" fill="none" stroke="#333" stroke-width="0.8" stroke-linejoin="round"/><circle cx="811.6" cy="294.4" r="1.3" fill="#333"/><circle cx="806" cy="316.4" r="0.9" fill="#333"/><circle cx="809.6" cy="316.4" r="0.9" fill="#333"/><circle cx="813.2" cy="316.4" r="0.9" fill="#333"/></svg></div>
<div class="abs" style="left:0px;top:589px;width:824px;height:11px;background:#ededed"><svg width="824" height="11" viewBox="0 589 824 11"><path d="M0 589.4 H824" stroke="#dadada" stroke-width="0.8"/><text x="3.6" y="598.95" font-size="7.3" fill="#2b2b2b">幻灯片浏览</text><path d="M46.2 591.6 v8.4" stroke="#d0d0d0" stroke-width="0.7"/><path d="M57.2 592.4 l-2 1.5 l1 1.7 l1-0.5 v4.6 h4.4 v-4.6 l1 0.5 l1-1.7 l-2-1.5 a1.3 1.2 0 0 1-2.6 0z" fill="none" stroke="#2b2b2b" stroke-width="0.75" stroke-linejoin="round"/><text x="67.00" y="599.40" font-size="7.9" fill="#2b2b2b" font-weight="normal" text-anchor="start" letter-spacing="-0.05">Office Theme</text><path d="M122.6 591.6 v8.4" stroke="#d0d0d0" stroke-width="0.7"/><path d="M135.6 592.6 l3.6 6.6 h-7.2z" fill="#f0a020"/><path d="M135.6 594.8 v2.4 M135.6 598 v0.5" stroke="#fff" stroke-width="0.7"/><text x="143" y="598.95" font-size="7.3" fill="#2b2b2b">缺失字体</text><rect x="558.4" y="592.6" width="8.4" height="6.8" rx="0.6" fill="none" stroke="#2b2b2b" stroke-width="0.8"/><path d="M561.2 592.6 v6.8" stroke="#2b2b2b" stroke-width="0.7"/><rect x="574.6" y="590.4" width="14" height="10" rx="1.4" fill="#dcdcdc"/><path d="M577.6 592.2 h3 v3 h-3z M582.6 592.2 h3 v3 h-3z M577.6 597 h3 v3 h-3z M582.6 597 h3 v3 h-3z" fill="none" stroke="#2b2b2b" stroke-width="0.75"/><path d="M597.4 593 h3.4 l1 1 l1-1 h3.4 v6.4 h-8.8z M601.8 594 v5" fill="none" stroke="#2b2b2b" stroke-width="0.75" stroke-linejoin="round"/><path d="M614 591.6 v8.4" stroke="#d0d0d0" stroke-width="0.7"/><rect x="620.4" y="590.2" width="12.6" height="10.6" rx="1.6" fill="#e8702a"/><path d="M624.8 592.8 v5.8 l4.6-2.9z" fill="#fff"/><path d="M638.70 595.75 h3.00 l-1.50 1.70 z" fill="#2b2b2b"/><path d="M649.6 591.6 v8.4" stroke="#d0d0d0" stroke-width="0.7"/><path d="M658.4 594.4 v-1.8 h2.2 M665 592.6 h2.2 v1.8 M667.2 597.6 v1.8 h-2.2 M660.6 599.4 h-2.2 v-1.8" fill="none" stroke="#2b2b2b" stroke-width="0.8"/><rect x="660.6" y="594.2" width="4.4" height="3.6" rx="0.6" fill="none" stroke="#2b2b2b" stroke-width="0.75"/><text x="681.40" y="599.30" font-size="7.8" fill="#2b2b2b" font-weight="normal" text-anchor="start" letter-spacing="0">20%</text><path d="M705.70 595.75 h3.00 l-1.50 1.70 z" fill="#2b2b2b"/><path d="M720 596.2 h7" stroke="#2b2b2b" stroke-width="1.1"/><path d="M741 596.2 H799" stroke="#b8b8b8" stroke-width="0.7"/><circle cx="739.4" cy="596.2" r="1.7" fill="#fdfdfd" stroke="#8a8a8a" stroke-width="0.6"/><path d="M808.8 596.2 h6.4 M812 593 v6.4" stroke="#2b2b2b" stroke-width="1.1"/></svg></div>
<div class="abs" style="left:0;top:0;width:824px;height:600px;pointer-events:none"><svg width="824" height="600" viewBox="0 0 824 600"><path d="M-1091.8 -137.0 L-1009.4 -46.4 M-1068.2 -160.1 L-998.0 -228.9 M-847.6 -112.6 L-765.2 -22.0 M-869.8 -137.0 L-752.4 -252.0 M-647.8 -137.0 L-565.4 -46.4 M-624.2 -160.1 L-554.0 -228.9 M-403.6 -112.6 L-321.2 -22.0 M-425.8 -137.0 L-308.4 -252.0 M-203.8 -137.0 L-121.4 -46.4 M-180.2 -160.1 L-110.0 -228.9 M40.4 -112.6 L122.8 -22.0 M18.2 -137.0 L135.6 -252.0 M240.2 -137.0 L322.6 -46.4 M263.8 -160.1 L334.0 -228.9 M484.4 -112.6 L566.8 -22.0 M462.2 -137.0 L579.6 -252.0 M684.2 -137.0 L766.6 -46.4 M707.8 -160.1 L778.0 -228.9 M928.4 -112.6 L1010.8 -22.0 M906.2 -137.0 L1023.6 -252.0 M1128.2 -137.0 L1210.6 -46.4 M1151.8 -160.1 L1222.0 -228.9 M-965.0 2.4 L-882.6 93.0 M-987.2 -22.0 L-869.8 -137.0 M-765.2 -22.0 L-682.8 68.6 M-741.6 -45.1 L-671.4 -113.9 M-521.0 2.4 L-438.6 93.0 M-543.2 -22.0 L-425.8 -137.0 M-321.2 -22.0 L-238.8 68.6 M-297.6 -45.1 L-227.4 -113.9 M-77.0 2.4 L5.4 93.0 M-99.2 -22.0 L18.2 -137.0 M122.8 -22.0 L205.2 68.6 M146.4 -45.1 L216.6 -113.9 M367.0 2.4 L449.4 93.0 M344.8 -22.0 L462.2 -137.0 M566.8 -22.0 L649.2 68.6 M590.4 -45.1 L660.6 -113.9 M811.0 2.4 L893.4 93.0 M788.8 -22.0 L906.2 -137.0 M1010.8 -22.0 L1093.2 68.6 M1034.4 -45.1 L1104.6 -113.9 M1255.0 2.4 L1337.4 93.0 M1232.8 -22.0 L1350.2 -137.0 M-882.6 93.0 L-800.2 183.6 M-859.0 69.9 L-788.8 1.1 M-638.4 117.4 L-556.0 208.0 M-660.6 93.0 L-543.2 -22.0 M-438.6 93.0 L-356.2 183.6 M-415.0 69.9 L-344.8 1.1 M-194.4 117.4 L-112.0 208.0 M-216.6 93.0 L-99.2 -22.0 M5.4 93.0 L87.8 183.6 M29.0 69.9 L99.2 1.1 M249.6 117.4 L332.0 208.0 M227.4 93.0 L344.8 -22.0 M449.4 93.0 L531.8 183.6 M473.0 69.9 L543.2 1.1 M693.6 117.4 L776.0 208.0 M671.4 93.0 L788.8 -22.0 M893.4 93.0 L975.8 183.6 M917.0 69.9 L987.2 1.1 M1137.6 117.4 L1220.0 208.0 M1115.4 93.0 L1232.8 -22.0 M1337.4 93.0 L1419.8 183.6 M1361.0 69.9 L1431.2 1.1 M-755.8 232.4 L-673.4 323.0 M-778.0 208.0 L-660.6 93.0 M-556.0 208.0 L-473.6 298.6 M-532.4 184.9 L-462.2 116.1 M-311.8 232.4 L-229.4 323.0 M-334.0 208.0 L-216.6 93.0 M-112.0 208.0 L-29.6 298.6 M-88.4 184.9 L-18.2 116.1 M132.2 232.4 L214.6 323.0 M110.0 208.0 L227.4 93.0 M332.0 208.0 L414.4 298.6 M355.6 184.9 L425.8 116.1 M576.2 232.4 L658.6 323.0 M554.0 208.0 L671.4 93.0 M776.0 208.0 L858.4 298.6 M799.6 184.9 L869.8 116.1 M1020.2 232.4 L1102.6 323.0 M998.0 208.0 L1115.4 93.0 M1220.0 208.0 L1302.4 298.6 M1243.6 184.9 L1313.8 116.1 M1464.2 232.4 L1546.6 323.0 M1442.0 208.0 L1559.4 93.0 M-673.4 323.0 L-591.0 413.6 M-649.8 299.9 L-579.6 231.1 M-429.2 347.4 L-346.8 438.0 M-451.4 323.0 L-334.0 208.0 M-229.4 323.0 L-147.0 413.6 M-205.8 299.9 L-135.6 231.1 M14.8 347.4 L97.2 438.0 M-7.4 323.0 L110.0 208.0 M214.6 323.0 L297.0 413.6 M238.2 299.9 L308.4 231.1 M458.8 347.4 L541.2 438.0 M436.6 323.0 L554.0 208.0 M658.6 323.0 L741.0 413.6 M682.2 299.9 L752.4 231.1 M902.8 347.4 L985.2 438.0 M880.6 323.0 L998.0 208.0 M1102.6 323.0 L1185.0 413.6 M1126.2 299.9 L1196.4 231.1 M1346.8 347.4 L1429.2 438.0 M1324.6 323.0 L1442.0 208.0 M1546.6 323.0 L1629.0 413.6 M1570.2 299.9 L1640.4 231.1 M-546.6 462.4 L-464.2 553.0 M-568.8 438.0 L-451.4 323.0 M-346.8 438.0 L-264.4 528.6 M-323.2 414.9 L-253.0 346.1 M-102.6 462.4 L-20.2 553.0 M-124.8 438.0 L-7.4 323.0 M97.2 438.0 L179.6 528.6 M120.8 414.9 L191.0 346.1 M341.4 462.4 L423.8 553.0 M319.2 438.0 L436.6 323.0 M541.2 438.0 L623.6 528.6 M564.8 414.9 L635.0 346.1 M785.4 462.4 L867.8 553.0 M763.2 438.0 L880.6 323.0 M985.2 438.0 L1067.6 528.6 M1008.8 414.9 L1079.0 346.1 M1229.4 462.4 L1311.8 553.0 M1207.2 438.0 L1324.6 323.0 M1429.2 438.0 L1511.6 528.6 M1452.8 414.9 L1523.0 346.1 M1673.4 462.4 L1755.8 553.0 M1651.2 438.0 L1768.6 323.0 M-464.2 553.0 L-381.8 643.6 M-440.6 529.9 L-370.4 461.1 M-220.0 577.4 L-137.6 668.0 M-242.2 553.0 L-124.8 438.0 M-20.2 553.0 L62.2 643.6 M3.4 529.9 L73.6 461.1 M224.0 577.4 L306.4 668.0 M201.8 553.0 L319.2 438.0 M423.8 553.0 L506.2 643.6 M447.4 529.9 L517.6 461.1 M668.0 577.4 L750.4 668.0 M645.8 553.0 L763.2 438.0 M867.8 553.0 L950.2 643.6 M891.4 529.9 L961.6 461.1 M1112.0 577.4 L1194.4 668.0 M1089.8 553.0 L1207.2 438.0 M1311.8 553.0 L1394.2 643.6 M1335.4 529.9 L1405.6 461.1 M1556.0 577.4 L1638.4 668.0 M1533.8 553.0 L1651.2 438.0 M1755.8 553.0 L1838.2 643.6 M1779.4 529.9 L1849.6 461.1 M-337.4 692.4 L-255.0 783.0 M-359.6 668.0 L-242.2 553.0 M-137.6 668.0 L-55.2 758.6 M-114.0 644.9 L-43.8 576.1 M106.6 692.4 L189.0 783.0 M84.4 668.0 L201.8 553.0 M306.4 668.0 L388.8 758.6 M330.0 644.9 L400.2 576.1 M550.6 692.4 L633.0 783.0 M528.4 668.0 L645.8 553.0 M750.4 668.0 L832.8 758.6 M774.0 644.9 L844.2 576.1 M994.6 692.4 L1077.0 783.0 M972.4 668.0 L1089.8 553.0 M1194.4 668.0 L1276.8 758.6 M1218.0 644.9 L1288.2 576.1 M1438.6 692.4 L1521.0 783.0 M1416.4 668.0 L1533.8 553.0 M1638.4 668.0 L1720.8 758.6 M1662.0 644.9 L1732.2 576.1 M1882.6 692.4 L1965.0 783.0 M1860.4 668.0 L1977.8 553.0 M-255.0 783.0 L-172.6 873.6 M-231.4 759.9 L-161.2 691.1 M-10.8 807.4 L71.6 898.0 M-33.0 783.0 L84.4 668.0 M189.0 783.0 L271.4 873.6 M212.6 759.9 L282.8 691.1 M433.2 807.4 L515.6 898.0 M411.0 783.0 L528.4 668.0 M633.0 783.0 L715.4 873.6 M656.6 759.9 L726.8 691.1 M877.2 807.4 L959.6 898.0 M855.0 783.0 L972.4 668.0 M1077.0 783.0 L1159.4 873.6 M1100.6 759.9 L1170.8 691.1 M1321.2 807.4 L1403.6 898.0 M1299.0 783.0 L1416.4 668.0 M1521.0 783.0 L1603.4 873.6 M1544.6 759.9 L1614.8 691.1 M1765.2 807.4 L1847.6 898.0 M1743.0 783.0 L1860.4 668.0 M1965.0 783.0 L2047.4 873.6 M1988.6 759.9 L2058.8 691.1" fill="none" stroke="#000" stroke-width="5" stroke-opacity="0.03" transform="translate(0.9 1)"/><path d="M-1091.8 -137.0 L-1009.4 -46.4 M-1068.2 -160.1 L-998.0 -228.9 M-847.6 -112.6 L-765.2 -22.0 M-869.8 -137.0 L-752.4 -252.0 M-647.8 -137.0 L-565.4 -46.4 M-624.2 -160.1 L-554.0 -228.9 M-403.6 -112.6 L-321.2 -22.0 M-425.8 -137.0 L-308.4 -252.0 M-203.8 -137.0 L-121.4 -46.4 M-180.2 -160.1 L-110.0 -228.9 M40.4 -112.6 L122.8 -22.0 M18.2 -137.0 L135.6 -252.0 M240.2 -137.0 L322.6 -46.4 M263.8 -160.1 L334.0 -228.9 M484.4 -112.6 L566.8 -22.0 M462.2 -137.0 L579.6 -252.0 M684.2 -137.0 L766.6 -46.4 M707.8 -160.1 L778.0 -228.9 M928.4 -112.6 L1010.8 -22.0 M906.2 -137.0 L1023.6 -252.0 M1128.2 -137.0 L1210.6 -46.4 M1151.8 -160.1 L1222.0 -228.9 M-965.0 2.4 L-882.6 93.0 M-987.2 -22.0 L-869.8 -137.0 M-765.2 -22.0 L-682.8 68.6 M-741.6 -45.1 L-671.4 -113.9 M-521.0 2.4 L-438.6 93.0 M-543.2 -22.0 L-425.8 -137.0 M-321.2 -22.0 L-238.8 68.6 M-297.6 -45.1 L-227.4 -113.9 M-77.0 2.4 L5.4 93.0 M-99.2 -22.0 L18.2 -137.0 M122.8 -22.0 L205.2 68.6 M146.4 -45.1 L216.6 -113.9 M367.0 2.4 L449.4 93.0 M344.8 -22.0 L462.2 -137.0 M566.8 -22.0 L649.2 68.6 M590.4 -45.1 L660.6 -113.9 M811.0 2.4 L893.4 93.0 M788.8 -22.0 L906.2 -137.0 M1010.8 -22.0 L1093.2 68.6 M1034.4 -45.1 L1104.6 -113.9 M1255.0 2.4 L1337.4 93.0 M1232.8 -22.0 L1350.2 -137.0 M-882.6 93.0 L-800.2 183.6 M-859.0 69.9 L-788.8 1.1 M-638.4 117.4 L-556.0 208.0 M-660.6 93.0 L-543.2 -22.0 M-438.6 93.0 L-356.2 183.6 M-415.0 69.9 L-344.8 1.1 M-194.4 117.4 L-112.0 208.0 M-216.6 93.0 L-99.2 -22.0 M5.4 93.0 L87.8 183.6 M29.0 69.9 L99.2 1.1 M249.6 117.4 L332.0 208.0 M227.4 93.0 L344.8 -22.0 M449.4 93.0 L531.8 183.6 M473.0 69.9 L543.2 1.1 M693.6 117.4 L776.0 208.0 M671.4 93.0 L788.8 -22.0 M893.4 93.0 L975.8 183.6 M917.0 69.9 L987.2 1.1 M1137.6 117.4 L1220.0 208.0 M1115.4 93.0 L1232.8 -22.0 M1337.4 93.0 L1419.8 183.6 M1361.0 69.9 L1431.2 1.1 M-755.8 232.4 L-673.4 323.0 M-778.0 208.0 L-660.6 93.0 M-556.0 208.0 L-473.6 298.6 M-532.4 184.9 L-462.2 116.1 M-311.8 232.4 L-229.4 323.0 M-334.0 208.0 L-216.6 93.0 M-112.0 208.0 L-29.6 298.6 M-88.4 184.9 L-18.2 116.1 M132.2 232.4 L214.6 323.0 M110.0 208.0 L227.4 93.0 M332.0 208.0 L414.4 298.6 M355.6 184.9 L425.8 116.1 M576.2 232.4 L658.6 323.0 M554.0 208.0 L671.4 93.0 M776.0 208.0 L858.4 298.6 M799.6 184.9 L869.8 116.1 M1020.2 232.4 L1102.6 323.0 M998.0 208.0 L1115.4 93.0 M1220.0 208.0 L1302.4 298.6 M1243.6 184.9 L1313.8 116.1 M1464.2 232.4 L1546.6 323.0 M1442.0 208.0 L1559.4 93.0 M-673.4 323.0 L-591.0 413.6 M-649.8 299.9 L-579.6 231.1 M-429.2 347.4 L-346.8 438.0 M-451.4 323.0 L-334.0 208.0 M-229.4 323.0 L-147.0 413.6 M-205.8 299.9 L-135.6 231.1 M14.8 347.4 L97.2 438.0 M-7.4 323.0 L110.0 208.0 M214.6 323.0 L297.0 413.6 M238.2 299.9 L308.4 231.1 M458.8 347.4 L541.2 438.0 M436.6 323.0 L554.0 208.0 M658.6 323.0 L741.0 413.6 M682.2 299.9 L752.4 231.1 M902.8 347.4 L985.2 438.0 M880.6 323.0 L998.0 208.0 M1102.6 323.0 L1185.0 413.6 M1126.2 299.9 L1196.4 231.1 M1346.8 347.4 L1429.2 438.0 M1324.6 323.0 L1442.0 208.0 M1546.6 323.0 L1629.0 413.6 M1570.2 299.9 L1640.4 231.1 M-546.6 462.4 L-464.2 553.0 M-568.8 438.0 L-451.4 323.0 M-346.8 438.0 L-264.4 528.6 M-323.2 414.9 L-253.0 346.1 M-102.6 462.4 L-20.2 553.0 M-124.8 438.0 L-7.4 323.0 M97.2 438.0 L179.6 528.6 M120.8 414.9 L191.0 346.1 M341.4 462.4 L423.8 553.0 M319.2 438.0 L436.6 323.0 M541.2 438.0 L623.6 528.6 M564.8 414.9 L635.0 346.1 M785.4 462.4 L867.8 553.0 M763.2 438.0 L880.6 323.0 M985.2 438.0 L1067.6 528.6 M1008.8 414.9 L1079.0 346.1 M1229.4 462.4 L1311.8 553.0 M1207.2 438.0 L1324.6 323.0 M1429.2 438.0 L1511.6 528.6 M1452.8 414.9 L1523.0 346.1 M1673.4 462.4 L1755.8 553.0 M1651.2 438.0 L1768.6 323.0 M-464.2 553.0 L-381.8 643.6 M-440.6 529.9 L-370.4 461.1 M-220.0 577.4 L-137.6 668.0 M-242.2 553.0 L-124.8 438.0 M-20.2 553.0 L62.2 643.6 M3.4 529.9 L73.6 461.1 M224.0 577.4 L306.4 668.0 M201.8 553.0 L319.2 438.0 M423.8 553.0 L506.2 643.6 M447.4 529.9 L517.6 461.1 M668.0 577.4 L750.4 668.0 M645.8 553.0 L763.2 438.0 M867.8 553.0 L950.2 643.6 M891.4 529.9 L961.6 461.1 M1112.0 577.4 L1194.4 668.0 M1089.8 553.0 L1207.2 438.0 M1311.8 553.0 L1394.2 643.6 M1335.4 529.9 L1405.6 461.1 M1556.0 577.4 L1638.4 668.0 M1533.8 553.0 L1651.2 438.0 M1755.8 553.0 L1838.2 643.6 M1779.4 529.9 L1849.6 461.1 M-337.4 692.4 L-255.0 783.0 M-359.6 668.0 L-242.2 553.0 M-137.6 668.0 L-55.2 758.6 M-114.0 644.9 L-43.8 576.1 M106.6 692.4 L189.0 783.0 M84.4 668.0 L201.8 553.0 M306.4 668.0 L388.8 758.6 M330.0 644.9 L400.2 576.1 M550.6 692.4 L633.0 783.0 M528.4 668.0 L645.8 553.0 M750.4 668.0 L832.8 758.6 M774.0 644.9 L844.2 576.1 M994.6 692.4 L1077.0 783.0 M972.4 668.0 L1089.8 553.0 M1194.4 668.0 L1276.8 758.6 M1218.0 644.9 L1288.2 576.1 M1438.6 692.4 L1521.0 783.0 M1416.4 668.0 L1533.8 553.0 M1638.4 668.0 L1720.8 758.6 M1662.0 644.9 L1732.2 576.1 M1882.6 692.4 L1965.0 783.0 M1860.4 668.0 L1977.8 553.0 M-255.0 783.0 L-172.6 873.6 M-231.4 759.9 L-161.2 691.1 M-10.8 807.4 L71.6 898.0 M-33.0 783.0 L84.4 668.0 M189.0 783.0 L271.4 873.6 M212.6 759.9 L282.8 691.1 M433.2 807.4 L515.6 898.0 M411.0 783.0 L528.4 668.0 M633.0 783.0 L715.4 873.6 M656.6 759.9 L726.8 691.1 M877.2 807.4 L959.6 898.0 M855.0 783.0 L972.4 668.0 M1077.0 783.0 L1159.4 873.6 M1100.6 759.9 L1170.8 691.1 M1321.2 807.4 L1403.6 898.0 M1299.0 783.0 L1416.4 668.0 M1521.0 783.0 L1603.4 873.6 M1544.6 759.9 L1614.8 691.1 M1765.2 807.4 L1847.6 898.0 M1743.0 783.0 L1860.4 668.0 M1965.0 783.0 L2047.4 873.6 M1988.6 759.9 L2058.8 691.1" fill="none" stroke="#ffffff" stroke-width="5" stroke-opacity="0.24"/><path d="M-1091.8 -137.0 L-1009.4 -46.4 M-1068.2 -160.1 L-998.0 -228.9 M-847.6 -112.6 L-765.2 -22.0 M-869.8 -137.0 L-752.4 -252.0 M-647.8 -137.0 L-565.4 -46.4 M-624.2 -160.1 L-554.0 -228.9 M-403.6 -112.6 L-321.2 -22.0 M-425.8 -137.0 L-308.4 -252.0 M-203.8 -137.0 L-121.4 -46.4 M-180.2 -160.1 L-110.0 -228.9 M40.4 -112.6 L122.8 -22.0 M18.2 -137.0 L135.6 -252.0 M240.2 -137.0 L322.6 -46.4 M263.8 -160.1 L334.0 -228.9 M484.4 -112.6 L566.8 -22.0 M462.2 -137.0 L579.6 -252.0 M684.2 -137.0 L766.6 -46.4 M707.8 -160.1 L778.0 -228.9 M928.4 -112.6 L1010.8 -22.0 M906.2 -137.0 L1023.6 -252.0 M1128.2 -137.0 L1210.6 -46.4 M1151.8 -160.1 L1222.0 -228.9 M-965.0 2.4 L-882.6 93.0 M-987.2 -22.0 L-869.8 -137.0 M-765.2 -22.0 L-682.8 68.6 M-741.6 -45.1 L-671.4 -113.9 M-521.0 2.4 L-438.6 93.0 M-543.2 -22.0 L-425.8 -137.0 M-321.2 -22.0 L-238.8 68.6 M-297.6 -45.1 L-227.4 -113.9 M-77.0 2.4 L5.4 93.0 M-99.2 -22.0 L18.2 -137.0 M122.8 -22.0 L205.2 68.6 M146.4 -45.1 L216.6 -113.9 M367.0 2.4 L449.4 93.0 M344.8 -22.0 L462.2 -137.0 M566.8 -22.0 L649.2 68.6 M590.4 -45.1 L660.6 -113.9 M811.0 2.4 L893.4 93.0 M788.8 -22.0 L906.2 -137.0 M1010.8 -22.0 L1093.2 68.6 M1034.4 -45.1 L1104.6 -113.9 M1255.0 2.4 L1337.4 93.0 M1232.8 -22.0 L1350.2 -137.0 M-882.6 93.0 L-800.2 183.6 M-859.0 69.9 L-788.8 1.1 M-638.4 117.4 L-556.0 208.0 M-660.6 93.0 L-543.2 -22.0 M-438.6 93.0 L-356.2 183.6 M-415.0 69.9 L-344.8 1.1 M-194.4 117.4 L-112.0 208.0 M-216.6 93.0 L-99.2 -22.0 M5.4 93.0 L87.8 183.6 M29.0 69.9 L99.2 1.1 M249.6 117.4 L332.0 208.0 M227.4 93.0 L344.8 -22.0 M449.4 93.0 L531.8 183.6 M473.0 69.9 L543.2 1.1 M693.6 117.4 L776.0 208.0 M671.4 93.0 L788.8 -22.0 M893.4 93.0 L975.8 183.6 M917.0 69.9 L987.2 1.1 M1137.6 117.4 L1220.0 208.0 M1115.4 93.0 L1232.8 -22.0 M1337.4 93.0 L1419.8 183.6 M1361.0 69.9 L1431.2 1.1 M-755.8 232.4 L-673.4 323.0 M-778.0 208.0 L-660.6 93.0 M-556.0 208.0 L-473.6 298.6 M-532.4 184.9 L-462.2 116.1 M-311.8 232.4 L-229.4 323.0 M-334.0 208.0 L-216.6 93.0 M-112.0 208.0 L-29.6 298.6 M-88.4 184.9 L-18.2 116.1 M132.2 232.4 L214.6 323.0 M110.0 208.0 L227.4 93.0 M332.0 208.0 L414.4 298.6 M355.6 184.9 L425.8 116.1 M576.2 232.4 L658.6 323.0 M554.0 208.0 L671.4 93.0 M776.0 208.0 L858.4 298.6 M799.6 184.9 L869.8 116.1 M1020.2 232.4 L1102.6 323.0 M998.0 208.0 L1115.4 93.0 M1220.0 208.0 L1302.4 298.6 M1243.6 184.9 L1313.8 116.1 M1464.2 232.4 L1546.6 323.0 M1442.0 208.0 L1559.4 93.0 M-673.4 323.0 L-591.0 413.6 M-649.8 299.9 L-579.6 231.1 M-429.2 347.4 L-346.8 438.0 M-451.4 323.0 L-334.0 208.0 M-229.4 323.0 L-147.0 413.6 M-205.8 299.9 L-135.6 231.1 M14.8 347.4 L97.2 438.0 M-7.4 323.0 L110.0 208.0 M214.6 323.0 L297.0 413.6 M238.2 299.9 L308.4 231.1 M458.8 347.4 L541.2 438.0 M436.6 323.0 L554.0 208.0 M658.6 323.0 L741.0 413.6 M682.2 299.9 L752.4 231.1 M902.8 347.4 L985.2 438.0 M880.6 323.0 L998.0 208.0 M1102.6 323.0 L1185.0 413.6 M1126.2 299.9 L1196.4 231.1 M1346.8 347.4 L1429.2 438.0 M1324.6 323.0 L1442.0 208.0 M1546.6 323.0 L1629.0 413.6 M1570.2 299.9 L1640.4 231.1 M-546.6 462.4 L-464.2 553.0 M-568.8 438.0 L-451.4 323.0 M-346.8 438.0 L-264.4 528.6 M-323.2 414.9 L-253.0 346.1 M-102.6 462.4 L-20.2 553.0 M-124.8 438.0 L-7.4 323.0 M97.2 438.0 L179.6 528.6 M120.8 414.9 L191.0 346.1 M341.4 462.4 L423.8 553.0 M319.2 438.0 L436.6 323.0 M541.2 438.0 L623.6 528.6 M564.8 414.9 L635.0 346.1 M785.4 462.4 L867.8 553.0 M763.2 438.0 L880.6 323.0 M985.2 438.0 L1067.6 528.6 M1008.8 414.9 L1079.0 346.1 M1229.4 462.4 L1311.8 553.0 M1207.2 438.0 L1324.6 323.0 M1429.2 438.0 L1511.6 528.6 M1452.8 414.9 L1523.0 346.1 M1673.4 462.4 L1755.8 553.0 M1651.2 438.0 L1768.6 323.0 M-464.2 553.0 L-381.8 643.6 M-440.6 529.9 L-370.4 461.1 M-220.0 577.4 L-137.6 668.0 M-242.2 553.0 L-124.8 438.0 M-20.2 553.0 L62.2 643.6 M3.4 529.9 L73.6 461.1 M224.0 577.4 L306.4 668.0 M201.8 553.0 L319.2 438.0 M423.8 553.0 L506.2 643.6 M447.4 529.9 L517.6 461.1 M668.0 577.4 L750.4 668.0 M645.8 553.0 L763.2 438.0 M867.8 553.0 L950.2 643.6 M891.4 529.9 L961.6 461.1 M1112.0 577.4 L1194.4 668.0 M1089.8 553.0 L1207.2 438.0 M1311.8 553.0 L1394.2 643.6 M1335.4 529.9 L1405.6 461.1 M1556.0 577.4 L1638.4 668.0 M1533.8 553.0 L1651.2 438.0 M1755.8 553.0 L1838.2 643.6 M1779.4 529.9 L1849.6 461.1 M-337.4 692.4 L-255.0 783.0 M-359.6 668.0 L-242.2 553.0 M-137.6 668.0 L-55.2 758.6 M-114.0 644.9 L-43.8 576.1 M106.6 692.4 L189.0 783.0 M84.4 668.0 L201.8 553.0 M306.4 668.0 L388.8 758.6 M330.0 644.9 L400.2 576.1 M550.6 692.4 L633.0 783.0 M528.4 668.0 L645.8 553.0 M750.4 668.0 L832.8 758.6 M774.0 644.9 L844.2 576.1 M994.6 692.4 L1077.0 783.0 M972.4 668.0 L1089.8 553.0 M1194.4 668.0 L1276.8 758.6 M1218.0 644.9 L1288.2 576.1 M1438.6 692.4 L1521.0 783.0 M1416.4 668.0 L1533.8 553.0 M1638.4 668.0 L1720.8 758.6 M1662.0 644.9 L1732.2 576.1 M1882.6 692.4 L1965.0 783.0 M1860.4 668.0 L1977.8 553.0 M-255.0 783.0 L-172.6 873.6 M-231.4 759.9 L-161.2 691.1 M-10.8 807.4 L71.6 898.0 M-33.0 783.0 L84.4 668.0 M189.0 783.0 L271.4 873.6 M212.6 759.9 L282.8 691.1 M433.2 807.4 L515.6 898.0 M411.0 783.0 L528.4 668.0 M633.0 783.0 L715.4 873.6 M656.6 759.9 L726.8 691.1 M877.2 807.4 L959.6 898.0 M855.0 783.0 L972.4 668.0 M1077.0 783.0 L1159.4 873.6 M1100.6 759.9 L1170.8 691.1 M1321.2 807.4 L1403.6 898.0 M1299.0 783.0 L1416.4 668.0 M1521.0 783.0 L1603.4 873.6 M1544.6 759.9 L1614.8 691.1 M1765.2 807.4 L1847.6 898.0 M1743.0 783.0 L1860.4 668.0 M1965.0 783.0 L2047.4 873.6 M1988.6 759.9 L2058.8 691.1" fill="none" stroke="#ffffff" stroke-width="1.3" stroke-opacity="0.5" transform="translate(0 -2.4)"/><path d="M-1091.8 -137.0 L-1009.4 -46.4 M-1068.2 -160.1 L-998.0 -228.9 M-847.6 -112.6 L-765.2 -22.0 M-869.8 -137.0 L-752.4 -252.0 M-647.8 -137.0 L-565.4 -46.4 M-624.2 -160.1 L-554.0 -228.9 M-403.6 -112.6 L-321.2 -22.0 M-425.8 -137.0 L-308.4 -252.0 M-203.8 -137.0 L-121.4 -46.4 M-180.2 -160.1 L-110.0 -228.9 M40.4 -112.6 L122.8 -22.0 M18.2 -137.0 L135.6 -252.0 M240.2 -137.0 L322.6 -46.4 M263.8 -160.1 L334.0 -228.9 M484.4 -112.6 L566.8 -22.0 M462.2 -137.0 L579.6 -252.0 M684.2 -137.0 L766.6 -46.4 M707.8 -160.1 L778.0 -228.9 M928.4 -112.6 L1010.8 -22.0 M906.2 -137.0 L1023.6 -252.0 M1128.2 -137.0 L1210.6 -46.4 M1151.8 -160.1 L1222.0 -228.9 M-965.0 2.4 L-882.6 93.0 M-987.2 -22.0 L-869.8 -137.0 M-765.2 -22.0 L-682.8 68.6 M-741.6 -45.1 L-671.4 -113.9 M-521.0 2.4 L-438.6 93.0 M-543.2 -22.0 L-425.8 -137.0 M-321.2 -22.0 L-238.8 68.6 M-297.6 -45.1 L-227.4 -113.9 M-77.0 2.4 L5.4 93.0 M-99.2 -22.0 L18.2 -137.0 M122.8 -22.0 L205.2 68.6 M146.4 -45.1 L216.6 -113.9 M367.0 2.4 L449.4 93.0 M344.8 -22.0 L462.2 -137.0 M566.8 -22.0 L649.2 68.6 M590.4 -45.1 L660.6 -113.9 M811.0 2.4 L893.4 93.0 M788.8 -22.0 L906.2 -137.0 M1010.8 -22.0 L1093.2 68.6 M1034.4 -45.1 L1104.6 -113.9 M1255.0 2.4 L1337.4 93.0 M1232.8 -22.0 L1350.2 -137.0 M-882.6 93.0 L-800.2 183.6 M-859.0 69.9 L-788.8 1.1 M-638.4 117.4 L-556.0 208.0 M-660.6 93.0 L-543.2 -22.0 M-438.6 93.0 L-356.2 183.6 M-415.0 69.9 L-344.8 1.1 M-194.4 117.4 L-112.0 208.0 M-216.6 93.0 L-99.2 -22.0 M5.4 93.0 L87.8 183.6 M29.0 69.9 L99.2 1.1 M249.6 117.4 L332.0 208.0 M227.4 93.0 L344.8 -22.0 M449.4 93.0 L531.8 183.6 M473.0 69.9 L543.2 1.1 M693.6 117.4 L776.0 208.0 M671.4 93.0 L788.8 -22.0 M893.4 93.0 L975.8 183.6 M917.0 69.9 L987.2 1.1 M1137.6 117.4 L1220.0 208.0 M1115.4 93.0 L1232.8 -22.0 M1337.4 93.0 L1419.8 183.6 M1361.0 69.9 L1431.2 1.1 M-755.8 232.4 L-673.4 323.0 M-778.0 208.0 L-660.6 93.0 M-556.0 208.0 L-473.6 298.6 M-532.4 184.9 L-462.2 116.1 M-311.8 232.4 L-229.4 323.0 M-334.0 208.0 L-216.6 93.0 M-112.0 208.0 L-29.6 298.6 M-88.4 184.9 L-18.2 116.1 M132.2 232.4 L214.6 323.0 M110.0 208.0 L227.4 93.0 M332.0 208.0 L414.4 298.6 M355.6 184.9 L425.8 116.1 M576.2 232.4 L658.6 323.0 M554.0 208.0 L671.4 93.0 M776.0 208.0 L858.4 298.6 M799.6 184.9 L869.8 116.1 M1020.2 232.4 L1102.6 323.0 M998.0 208.0 L1115.4 93.0 M1220.0 208.0 L1302.4 298.6 M1243.6 184.9 L1313.8 116.1 M1464.2 232.4 L1546.6 323.0 M1442.0 208.0 L1559.4 93.0 M-673.4 323.0 L-591.0 413.6 M-649.8 299.9 L-579.6 231.1 M-429.2 347.4 L-346.8 438.0 M-451.4 323.0 L-334.0 208.0 M-229.4 323.0 L-147.0 413.6 M-205.8 299.9 L-135.6 231.1 M14.8 347.4 L97.2 438.0 M-7.4 323.0 L110.0 208.0 M214.6 323.0 L297.0 413.6 M238.2 299.9 L308.4 231.1 M458.8 347.4 L541.2 438.0 M436.6 323.0 L554.0 208.0 M658.6 323.0 L741.0 413.6 M682.2 299.9 L752.4 231.1 M902.8 347.4 L985.2 438.0 M880.6 323.0 L998.0 208.0 M1102.6 323.0 L1185.0 413.6 M1126.2 299.9 L1196.4 231.1 M1346.8 347.4 L1429.2 438.0 M1324.6 323.0 L1442.0 208.0 M1546.6 323.0 L1629.0 413.6 M1570.2 299.9 L1640.4 231.1 M-546.6 462.4 L-464.2 553.0 M-568.8 438.0 L-451.4 323.0 M-346.8 438.0 L-264.4 528.6 M-323.2 414.9 L-253.0 346.1 M-102.6 462.4 L-20.2 553.0 M-124.8 438.0 L-7.4 323.0 M97.2 438.0 L179.6 528.6 M120.8 414.9 L191.0 346.1 M341.4 462.4 L423.8 553.0 M319.2 438.0 L436.6 323.0 M541.2 438.0 L623.6 528.6 M564.8 414.9 L635.0 346.1 M785.4 462.4 L867.8 553.0 M763.2 438.0 L880.6 323.0 M985.2 438.0 L1067.6 528.6 M1008.8 414.9 L1079.0 346.1 M1229.4 462.4 L1311.8 553.0 M1207.2 438.0 L1324.6 323.0 M1429.2 438.0 L1511.6 528.6 M1452.8 414.9 L1523.0 346.1 M1673.4 462.4 L1755.8 553.0 M1651.2 438.0 L1768.6 323.0 M-464.2 553.0 L-381.8 643.6 M-440.6 529.9 L-370.4 461.1 M-220.0 577.4 L-137.6 668.0 M-242.2 553.0 L-124.8 438.0 M-20.2 553.0 L62.2 643.6 M3.4 529.9 L73.6 461.1 M224.0 577.4 L306.4 668.0 M201.8 553.0 L319.2 438.0 M423.8 553.0 L506.2 643.6 M447.4 529.9 L517.6 461.1 M668.0 577.4 L750.4 668.0 M645.8 553.0 L763.2 438.0 M867.8 553.0 L950.2 643.6 M891.4 529.9 L961.6 461.1 M1112.0 577.4 L1194.4 668.0 M1089.8 553.0 L1207.2 438.0 M1311.8 553.0 L1394.2 643.6 M1335.4 529.9 L1405.6 461.1 M1556.0 577.4 L1638.4 668.0 M1533.8 553.0 L1651.2 438.0 M1755.8 553.0 L1838.2 643.6 M1779.4 529.9 L1849.6 461.1 M-337.4 692.4 L-255.0 783.0 M-359.6 668.0 L-242.2 553.0 M-137.6 668.0 L-55.2 758.6 M-114.0 644.9 L-43.8 576.1 M106.6 692.4 L189.0 783.0 M84.4 668.0 L201.8 553.0 M306.4 668.0 L388.8 758.6 M330.0 644.9 L400.2 576.1 M550.6 692.4 L633.0 783.0 M528.4 668.0 L645.8 553.0 M750.4 668.0 L832.8 758.6 M774.0 644.9 L844.2 576.1 M994.6 692.4 L1077.0 783.0 M972.4 668.0 L1089.8 553.0 M1194.4 668.0 L1276.8 758.6 M1218.0 644.9 L1288.2 576.1 M1438.6 692.4 L1521.0 783.0 M1416.4 668.0 L1533.8 553.0 M1638.4 668.0 L1720.8 758.6 M1662.0 644.9 L1732.2 576.1 M1882.6 692.4 L1965.0 783.0 M1860.4 668.0 L1977.8 553.0 M-255.0 783.0 L-172.6 873.6 M-231.4 759.9 L-161.2 691.1 M-10.8 807.4 L71.6 898.0 M-33.0 783.0 L84.4 668.0 M189.0 783.0 L271.4 873.6 M212.6 759.9 L282.8 691.1 M433.2 807.4 L515.6 898.0 M411.0 783.0 L528.4 668.0 M633.0 783.0 L715.4 873.6 M656.6 759.9 L726.8 691.1 M877.2 807.4 L959.6 898.0 M855.0 783.0 L972.4 668.0 M1077.0 783.0 L1159.4 873.6 M1100.6 759.9 L1170.8 691.1 M1321.2 807.4 L1403.6 898.0 M1299.0 783.0 L1416.4 668.0 M1521.0 783.0 L1603.4 873.6 M1544.6 759.9 L1614.8 691.1 M1765.2 807.4 L1847.6 898.0 M1743.0 783.0 L1860.4 668.0 M1965.0 783.0 L2047.4 873.6 M1988.6 759.9 L2058.8 691.1" fill="none" stroke="#ffffff" stroke-width="1.3" stroke-opacity="0.5" transform="translate(0 2.4)"/><g font-size="25" font-weight="bold"><text x="85.4" y="81.8" fill="#000" fill-opacity="0.08">易</text><text x="84.5" y="80.9" fill="#fff" fill-opacity="0.34">易</text><text x="313.4" y="89.8" fill="#000" fill-opacity="0.08">易</text><text x="312.5" y="88.9" fill="#fff" fill-opacity="0.34">易</text><text x="533.4" y="87.8" fill="#000" fill-opacity="0.08">易</text><text x="532.5" y="86.9" fill="#fff" fill-opacity="0.34">易</text><text x="763.4" y="100.8" fill="#000" fill-opacity="0.08">易</text><text x="762.5" y="99.9" fill="#fff" fill-opacity="0.34">易</text><text x="205.4" y="215.8" fill="#000" fill-opacity="0.08">易</text><text x="204.5" y="214.9" fill="#fff" fill-opacity="0.34">易</text><text x="426.4" y="217.8" fill="#000" fill-opacity="0.08">易</text><text x="425.5" y="216.9" fill="#fff" fill-opacity="0.34">易</text><text x="646.4" y="218.8" fill="#000" fill-opacity="0.08">易</text><text x="645.5" y="217.9" fill="#fff" fill-opacity="0.34">易</text><text x="88.4" y="328.8" fill="#000" fill-opacity="0.08">易</text><text x="87.5" y="327.9" fill="#fff" fill-opacity="0.34">易</text><text x="316.4" y="331.8" fill="#000" fill-opacity="0.08">易</text><text x="315.5" y="330.9" fill="#fff" fill-opacity="0.34">易</text><text x="540.4" y="334.8" fill="#000" fill-opacity="0.08">易</text><text x="539.5" y="333.9" fill="#fff" fill-opacity="0.34">易</text><text x="761.4" y="336.8" fill="#000" fill-opacity="0.08">易</text><text x="760.5" y="335.9" fill="#fff" fill-opacity="0.34">易</text><text x="195.4" y="444.8" fill="#000" fill-opacity="0.08">易</text><text x="194.5" y="443.9" fill="#fff" fill-opacity="0.34">易</text><text x="421.4" y="445.8" fill="#000" fill-opacity="0.08">易</text><text x="420.5" y="444.9" fill="#fff" fill-opacity="0.34">易</text><text x="643.4" y="446.8" fill="#000" fill-opacity="0.08">易</text><text x="642.5" y="445.9" fill="#fff" fill-opacity="0.34">易</text><text x="83.4" y="559.8" fill="#000" fill-opacity="0.08">易</text><text x="82.5" y="558.9" fill="#fff" fill-opacity="0.34">易</text><text x="315.4" y="565.8" fill="#000" fill-opacity="0.08">易</text><text x="314.5" y="564.9" fill="#fff" fill-opacity="0.34">易</text><text x="536.4" y="565.8" fill="#000" fill-opacity="0.08">易</text><text x="535.5" y="564.9" fill="#fff" fill-opacity="0.34">易</text><text x="756.4" y="568.8" fill="#000" fill-opacity="0.08">易</text><text x="755.5" y="567.9" fill="#fff" fill-opacity="0.34">易</text></g><text x="606.2 653 699.8" y="532.62" font-size="46.5" font-weight="bold" fill="#000" fill-opacity="0.05">易图网</text><text x="605 651.8 698.6" y="531.42" font-size="46.5" font-weight="bold" fill="#fff" fill-opacity="0.4">易图网</text><g font-size="16.5" font-weight="bold"><text transform="translate(108.6 1.5) rotate(-44.4)" fill="#000" fill-opacity="0.07">yitu.cn</text><text transform="translate(107.7 0.6) rotate(-44.4)" fill="#fff" fill-opacity="0.5">yitu.cn</text><text transform="translate(323.7 -37.0) rotate(47.7)" fill="#000" fill-opacity="0.07">yitu.cn</text><text transform="translate(322.8 -37.9) rotate(47.7)" fill="#fff" fill-opacity="0.5">yitu.cn</text><text transform="translate(552.6 1.5) rotate(-44.4)" fill="#000" fill-opacity="0.07">yitu.cn</text><text transform="translate(551.7 0.6) rotate(-44.4)" fill="#fff" fill-opacity="0.5">yitu.cn</text><text transform="translate(767.7 -37.0) rotate(47.7)" fill="#000" fill-opacity="0.07">yitu.cn</text><text transform="translate(766.8 -37.9) rotate(47.7)" fill="#fff" fill-opacity="0.5">yitu.cn</text><text transform="translate(-8.8 116.5) rotate(-44.4)" fill="#000" fill-opacity="0.07">yitu.cn</text><text transform="translate(-9.7 115.6) rotate(-44.4)" fill="#fff" fill-opacity="0.5">yitu.cn</text><text transform="translate(206.3 78.0) rotate(47.7)" fill="#000" fill-opacity="0.07">yitu.cn</text><text transform="translate(205.4 77.1) rotate(47.7)" fill="#fff" fill-opacity="0.5">yitu.cn</text><text transform="translate(435.2 116.5) rotate(-44.4)" fill="#000" fill-opacity="0.07">yitu.cn</text><text transform="translate(434.3 115.6) rotate(-44.4)" fill="#fff" fill-opacity="0.5">yitu.cn</text><text transform="translate(650.3 78.0) rotate(47.7)" fill="#000" fill-opacity="0.07">yitu.cn</text><text transform="translate(649.4 77.1) rotate(47.7)" fill="#fff" fill-opacity="0.5">yitu.cn</text><text transform="translate(88.9 193.0) rotate(47.7)" fill="#000" fill-opacity="0.07">yitu.cn</text><text transform="translate(88.0 192.1) rotate(47.7)" fill="#fff" fill-opacity="0.5">yitu.cn</text><text transform="translate(317.8 231.5) rotate(-44.4)" fill="#000" fill-opacity="0.07">yitu.cn</text><text transform="translate(316.9 230.6) rotate(-44.4)" fill="#fff" fill-opacity="0.5">yitu.cn</text><text transform="translate(532.9 193.0) rotate(47.7)" fill="#000" fill-opacity="0.07">yitu.cn</text><text transform="translate(532.0 192.1) rotate(47.7)" fill="#fff" fill-opacity="0.5">yitu.cn</text><text transform="translate(761.8 231.5) rotate(-44.4)" fill="#000" fill-opacity="0.07">yitu.cn</text><text transform="translate(760.9 230.6) rotate(-44.4)" fill="#fff" fill-opacity="0.5">yitu.cn</text><text transform="translate(-28.5 308.0) rotate(47.7)" fill="#000" fill-opacity="0.07">yitu.cn</text><text transform="translate(-29.4 307.1) rotate(47.7)" fill="#fff" fill-opacity="0.5">yitu.cn</text><text transform="translate(200.4 346.5) rotate(-44.4)" fill="#000" fill-opacity="0.07">yitu.cn</text><text transform="translate(199.5 345.6) rotate(-44.4)" fill="#fff" fill-opacity="0.5">yitu.cn</text><text transform="translate(415.5 308.0) rotate(47.7)" fill="#000" fill-opacity="0.07">yitu.cn</text><text transform="translate(414.6 307.1) rotate(47.7)" fill="#fff" fill-opacity="0.5">yitu.cn</text><text transform="translate(644.4 346.5) rotate(-44.4)" fill="#000" fill-opacity="0.07">yitu.cn</text><text transform="translate(643.5 345.6) rotate(-44.4)" fill="#fff" fill-opacity="0.5">yitu.cn</text><text transform="translate(83.0 461.5) rotate(-44.4)" fill="#000" fill-opacity="0.07">yitu.cn</text><text transform="translate(82.1 460.6) rotate(-44.4)" fill="#fff" fill-opacity="0.5">yitu.cn</text><text transform="translate(298.1 423.0) rotate(47.7)" fill="#000" fill-opacity="0.07">yitu.cn</text><text transform="translate(297.2 422.1) rotate(47.7)" fill="#fff" fill-opacity="0.5">yitu.cn</text><text transform="translate(527.0 461.5) rotate(-44.4)" fill="#000" fill-opacity="0.07">yitu.cn</text><text transform="translate(526.1 460.6) rotate(-44.4)" fill="#fff" fill-opacity="0.5">yitu.cn</text><text transform="translate(742.1 423.0) rotate(47.7)" fill="#000" fill-opacity="0.07">yitu.cn</text><text transform="translate(741.2 422.1) rotate(47.7)" fill="#fff" fill-opacity="0.5">yitu.cn</text><text transform="translate(-34.4 576.5) rotate(-44.4)" fill="#000" fill-opacity="0.07">yitu.cn</text><text transform="translate(-35.3 575.6) rotate(-44.4)" fill="#fff" fill-opacity="0.5">yitu.cn</text><text transform="translate(180.7 538.0) rotate(47.7)" fill="#000" fill-opacity="0.07">yitu.cn</text><text transform="translate(179.8 537.1) rotate(47.7)" fill="#fff" fill-opacity="0.5">yitu.cn</text><text transform="translate(409.6 576.5) rotate(-44.4)" fill="#000" fill-opacity="0.07">yitu.cn</text><text transform="translate(408.7 575.6) rotate(-44.4)" fill="#fff" fill-opacity="0.5">yitu.cn</text><text transform="translate(624.7 538.0) rotate(47.7)" fill="#000" fill-opacity="0.07">yitu.cn</text><text transform="translate(623.8 537.1) rotate(47.7)" fill="#fff" fill-opacity="0.5">yitu.cn</text><text transform="translate(853.6 576.5) rotate(-44.4)" fill="#000" fill-opacity="0.07">yitu.cn</text><text transform="translate(852.7 575.6) rotate(-44.4)" fill="#fff" fill-opacity="0.5">yitu.cn</text></g></svg></div>
</body></html>
